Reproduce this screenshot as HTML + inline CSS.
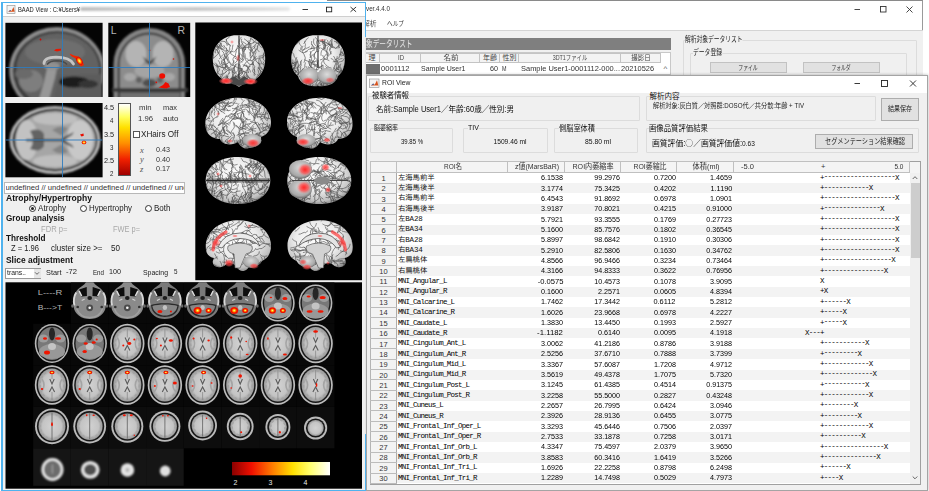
<!DOCTYPE html>
<html lang="ja"><head><meta charset="utf-8"><title>BAAD View</title>
<style>
html,body{margin:0;padding:0}
html{overflow:hidden;width:929px;height:491px}
body{width:929px;height:491px;overflow:hidden;position:relative;background:#fff;font-family:"Liberation Sans","Noto Sans CJK JP",sans-serif;color:#000}
.a{position:absolute;box-sizing:border-box}
.t{white-space:nowrap}
.m{font-family:"Liberation Mono","IPAGothic","Noto Sans CJK JP",monospace}
.gb{border:1px solid #dcdcdc;border-radius:1px}
.d{position:relative;top:-1.2px}
.btn{background:#e1e1e1;border:1px solid #adadad}
svg{position:absolute;left:0;top:0}
</style></head><body>

<div class="a" style="left:327px;top:0px;width:596px;height:76px;background:#fff;border-top:1.5px solid #8a8a8a;border-right:1px solid #9a9a9a"></div>
<div class="a" style="left:365px;top:29.8px;width:558px;height:46px;background:#f0f0f0;border-top:1px solid #d4d4d4"></div>
<div class="a t" style="top:4.90px;font-size:6.8px;line-height:8.8px;left:366px;transform:scaleX(0.920);transform-origin:0 50%;color:#333"><span>ver.4.4.0</span></div>
<div class="a t" style="top:19.55px;font-size:6.5px;line-height:8.5px;left:362.5px;transform:scaleX(1.038);transform-origin:0 50%;color:#444"><span>解析</span></div>
<div class="a t" style="top:19.55px;font-size:6.5px;line-height:8.5px;left:387px;transform:scaleX(0.872);transform-origin:0 50%;color:#333"><span>ヘルプ</span></div>
<svg width="929" height="491" viewBox="0 0 929 491">
<g stroke="#333" stroke-width="0.9" fill="none">
<path d="M854.5 9.5h5.5"/><rect x="880.5" y="6.5" width="5.5" height="5.5"/><path d="M906.5 6.5l6 6M912.5 6.5l-6 6"/>
</g></svg>
<div class="a" style="left:365px;top:38px;width:306px;height:11.5px;background:#7f7f7f"></div>
<div class="a t" style="top:37.65px;font-size:9.5px;line-height:12.3px;left:365.5px;transform:scaleX(0.699);transform-origin:0 50%;color:#e8e8e8"><span>象データリスト</span></div>
<div class="a" style="left:365px;top:52px;width:306px;height:23px;background:#fff;border:1px solid #c8c8c8"></div>
<div class="a" style="left:365px;top:52.5px;width:15px;height:10.5px;background:#f3f3f3;border:1px solid #c4c4c4;border-left:none"></div>
<div class="a t" style="top:53.45px;font-size:7px;line-height:9.1px;left:222px;width:300px;text-align:center;transform:scaleX(1.000);transform-origin:50% 50%;color:#444"><span>理</span></div>
<div class="a" style="left:380px;top:52.5px;width:41px;height:10.5px;background:#f3f3f3;border:1px solid #c4c4c4;border-left:none"></div>
<div class="a t" style="top:53.45px;font-size:7px;line-height:9.1px;left:250.5px;width:300px;text-align:center;transform:scaleX(0.857);transform-origin:50% 50%;color:#444"><span>ID</span></div>
<div class="a" style="left:421px;top:52.5px;width:59px;height:10.5px;background:#f3f3f3;border:1px solid #c4c4c4;border-left:none"></div>
<div class="a t" style="top:53.45px;font-size:7px;line-height:9.1px;left:300.5px;width:300px;text-align:center;transform:scaleX(1.071);transform-origin:50% 50%;color:#444"><span>名前</span></div>
<div class="a" style="left:480px;top:52.5px;width:20px;height:10.5px;background:#f3f3f3;border:1px solid #c4c4c4;border-left:none"></div>
<div class="a t" style="top:53.45px;font-size:7px;line-height:9.1px;left:340.0px;width:300px;text-align:center;transform:scaleX(1.000);transform-origin:50% 50%;color:#444"><span>年齢</span></div>
<div class="a" style="left:500px;top:52.5px;width:19px;height:10.5px;background:#f3f3f3;border:1px solid #c4c4c4;border-left:none"></div>
<div class="a t" style="top:53.45px;font-size:7px;line-height:9.1px;left:359.5px;width:300px;text-align:center;transform:scaleX(1.000);transform-origin:50% 50%;color:#444"><span>性別</span></div>
<div class="a" style="left:519px;top:52.5px;width:101.5px;height:10.5px;background:#f3f3f3;border:1px solid #c4c4c4;border-left:none"></div>
<div class="a t" style="top:53.45px;font-size:7px;line-height:9.1px;left:419.75px;width:300px;text-align:center;transform:scaleX(0.765);transform-origin:50% 50%;color:#444"><span>3DT1ファイル</span></div>
<div class="a" style="left:620.5px;top:52.5px;width:40.5px;height:10.5px;background:#f3f3f3;border:1px solid #c4c4c4;border-left:none"></div>
<div class="a t" style="top:53.45px;font-size:7px;line-height:9.1px;left:490.75px;width:300px;text-align:center;transform:scaleX(0.929);transform-origin:50% 50%;color:#444"><span>撮影日</span></div>
<div class="a" style="left:365px;top:63.5px;width:15px;height:10.5px;background:#6e6e6e"></div>
<div class="a t" style="top:63.90px;font-size:7.5px;line-height:9.8px;left:381px;transform:scaleX(1.014);transform-origin:0 50%;color:#333"><span>0001112</span></div>
<div class="a t" style="top:63.90px;font-size:7.5px;line-height:9.8px;left:421px;transform:scaleX(0.936);transform-origin:0 50%;color:#333"><span>Sample User1</span></div>
<div class="a t" style="top:63.90px;font-size:7.5px;line-height:9.8px;left:490px;transform:scaleX(0.959);transform-origin:0 50%;color:#333"><span>60</span></div>
<div class="a t" style="top:63.90px;font-size:7.5px;line-height:9.8px;left:502px;transform:scaleX(0.720);transform-origin:0 50%;color:#333"><span>M</span></div>
<div class="a t" style="top:63.90px;font-size:7.5px;line-height:9.8px;left:520.5px;transform:scaleX(0.996);transform-origin:0 50%;color:#333"><span>Sample User1-0001112-000...</span></div>
<div class="a t" style="top:63.90px;font-size:7.5px;line-height:9.8px;left:620.5px;transform:scaleX(0.989);transform-origin:0 50%;color:#333"><span>20210526</span></div>
<div class="a t" style="top:64.30px;font-size:8px;line-height:10.4px;left:663.5px;color:#555"><span>^</span></div>
<div class="a gb" style="left:682.5px;top:40px;width:234px;height:40px;"></div>
<div class="a t" style="top:34.60px;font-size:7.5px;line-height:9.8px;left:684.5px;transform:scaleX(0.767);transform-origin:0 50%;background:#f0f0f0;color:#222"><span>解析対象データリスト</span></div>
<div class="a gb" style="left:690px;top:52.5px;width:217px;height:30px;"></div>
<div class="a t" style="top:47.60px;font-size:7.5px;line-height:9.8px;left:693px;transform:scaleX(0.773);transform-origin:0 50%;background:#f0f0f0;color:#222"><span>データ登録</span></div>
<div class="a" style="left:709.5px;top:62px;width:77px;height:10.5px;background:#e1e1e1;border:1px solid #c2c2c2"></div>
<div class="a t" style="top:62.65px;font-size:7px;line-height:9.1px;left:597.75px;width:300px;text-align:center;transform:scaleX(0.696);transform-origin:50% 50%;color:#333"><span>ファイル</span></div>
<div class="a" style="left:802.5px;top:62px;width:77px;height:10.5px;background:#e1e1e1;border:1px solid #c2c2c2"></div>
<div class="a t" style="top:62.65px;font-size:7px;line-height:9.1px;left:690.5px;width:300px;text-align:center;transform:scaleX(0.679);transform-origin:50% 50%;color:#333"><span>フォルダ</span></div>
<div class="a" style="left:365.5px;top:74.5px;width:562.5px;height:416px;background:#f0f0f0;border:1px solid #a4a4a4;box-shadow:0 0 3px rgba(0,0,0,.3)"></div>
<div class="a" style="left:366.5px;top:75.5px;width:560.5px;height:17px;background:#fff"></div>
<svg width="929" height="491" viewBox="0 0 929 491"><g stroke="#222" stroke-width="0.9" fill="none"><path d="M854.5 83.5h5.5"/><rect x="881.5" y="80.5" width="6" height="6"/><path d="M910 80.5l6 6M916 80.5l-6 6"/></g></svg>
<div class="a t" style="top:78.30px;font-size:8px;line-height:10.4px;left:382px;transform:scaleX(0.847);transform-origin:0 50%;color:#222"><span>ROI View</span></div>
<svg width="929" height="491" viewBox="0 0 929 491"><rect x="369.5" y="79" width="9.5" height="8.5" fill="#f4f4f4" stroke="#8a8a8a" stroke-width="0.6"/><path d="M371 85.5l2.2-2 1.5 1.2 2.3-4.5 1.3 5.3z" fill="#d9541e"/><path d="M371 85.5l2.2-2 1 .9z" fill="#3b6fb5"/></svg>
<div class="a gb" style="left:367.5px;top:96px;width:272.5px;height:25px"></div>
<div class="a t" style="top:91.45px;font-size:7.8px;line-height:10.1px;left:372px;transform:scaleX(0.949);transform-origin:0 50%;background:#f0f0f0;color:#111"><span>被験者情報</span></div>
<div class="a t" style="top:103.95px;font-size:8.5px;line-height:11.1px;left:376.2px;transform:scaleX(0.888);transform-origin:0 50%;color:#111"><span>名前:Sample User1／年齢:60歳／性別:男</span></div>
<div class="a gb" style="left:645.5px;top:96px;width:230.5px;height:25px"></div>
<div class="a t" style="top:91.60px;font-size:7.5px;line-height:9.8px;left:649.5px;transform:scaleX(1.000);transform-origin:0 50%;background:#f0f0f0;color:#111"><span>解析内容</span></div>
<div class="a t" style="top:101.90px;font-size:6.3px;line-height:8.2px;left:653px;transform:scaleX(0.980);transform-origin:0 50%;color:#222"><span>解析対象:灰白質／対照群:DOSO代／共分散:年齢 + TIV</span></div>
<div class="a" style="left:881px;top:98px;width:38px;height:22.5px;background:#e1e1e1;border:1px solid #adadad"></div>
<div class="a t" style="top:105.25px;font-size:6.5px;line-height:8.5px;left:749.5px;width:300px;text-align:center;transform:scaleX(0.923);transform-origin:50% 50%;color:#222"><span>結果保存</span></div>
<div class="a gb" style="left:369.5px;top:128px;width:83.5px;height:25px"></div>
<div class="a t" style="top:124.25px;font-size:6.5px;line-height:8.5px;left:373.7px;transform:scaleX(0.923);transform-origin:0 50%;background:#f0f0f0;color:#111"><span>脳萎縮率</span></div>
<div class="a t" style="top:138.40px;font-size:6.8px;line-height:8.8px;left:262.2px;width:300px;text-align:center;transform:scaleX(0.882);transform-origin:50% 50%;color:#111"><span>39.85 %</span></div>
<div class="a gb" style="left:463px;top:128px;width:84.5px;height:25px"></div>
<div class="a t" style="top:123.30px;font-size:8px;line-height:10.4px;left:468.2px;transform:scaleX(0.883);transform-origin:0 50%;background:#f0f0f0;color:#111"><span>TIV</span></div>
<div class="a t" style="top:138.40px;font-size:6.8px;line-height:8.8px;left:359.7px;width:300px;text-align:center;transform:scaleX(0.981);transform-origin:50% 50%;color:#111"><span>1509.46 ml</span></div>
<div class="a gb" style="left:554px;top:128px;width:83.5px;height:25px"></div>
<div class="a t" style="top:122.95px;font-size:8.5px;line-height:11.1px;left:558.7px;transform:scaleX(0.847);transform-origin:0 50%;background:#f0f0f0;color:#111"><span>側脳室体積</span></div>
<div class="a t" style="top:138.40px;font-size:6.8px;line-height:8.8px;left:447.5px;width:300px;text-align:center;transform:scaleX(0.997);transform-origin:50% 50%;color:#111"><span>85.80 ml</span></div>
<div class="a gb" style="left:645.5px;top:128px;width:273.5px;height:25px"></div>
<div class="a t" style="top:122.95px;font-size:8.5px;line-height:11.1px;left:648.7px;transform:scaleX(0.867);transform-origin:0 50%;background:#f0f0f0;color:#111"><span>画像品質評価結果</span></div>
<div class="a t" style="top:136.95px;font-size:8.5px;line-height:11.1px;left:652px;transform:scaleX(0.917);transform-origin:0 50%;color:#111"><span>画質評価:<span style="font-family:'Noto Sans CJK JP',sans-serif">○</span>／画質評価値:<span style="font-size:7.2px">0.63</span></span></div>
<div class="a" style="left:815px;top:134px;width:97.5px;height:15px;background:#e1e1e1;border:1px solid #adadad"></div>
<div class="a t" style="top:136.80px;font-size:7.5px;line-height:9.8px;left:714.5px;width:300px;text-align:center;transform:scaleX(0.822);transform-origin:50% 50%;color:#222"><span>セグメンテーション結果確認</span></div>
<div class="a" style="left:369.5px;top:161px;width:551px;height:323.5px;background:#fff;border:1px solid #a0a0a0"></div>
<div class="a" style="left:369.5px;top:161px;width:27.5px;height:11.800000000000011px;background:#f4f4f4;border:1px solid #c0c0c0"></div>
<div class="a" style="left:397px;top:161px;width:111px;height:11.800000000000011px;background:#f4f4f4;border:1px solid #c0c0c0;border-left:none"></div>
<div class="a t" style="top:162.10px;font-size:7.5px;line-height:9.8px;left:303px;width:300px;text-align:center;transform:scaleX(0.864);transform-origin:50% 50%;color:#333"><span>ROI名</span></div>
<div class="a" style="left:508px;top:161px;width:56.5px;height:11.800000000000011px;background:#f4f4f4;border:1px solid #c0c0c0;border-left:none"></div>
<div class="a t" style="top:162.10px;font-size:7.5px;line-height:9.8px;left:387px;width:300px;text-align:center;transform:scaleX(0.926);transform-origin:50% 50%;color:#333"><span>z値(MarsBaR)</span></div>
<div class="a" style="left:564.5px;top:161px;width:56.5px;height:11.800000000000011px;background:#f4f4f4;border:1px solid #c0c0c0;border-left:none"></div>
<div class="a t" style="top:162.10px;font-size:7.5px;line-height:9.8px;left:443px;width:300px;text-align:center;transform:scaleX(0.946);transform-origin:50% 50%;color:#333"><span>ROI内萎縮率</span></div>
<div class="a" style="left:621px;top:161px;width:56px;height:11.800000000000011px;background:#f4f4f4;border:1px solid #c0c0c0;border-left:none"></div>
<div class="a t" style="top:162.10px;font-size:7.5px;line-height:9.8px;left:499.6px;width:300px;text-align:center;transform:scaleX(0.921);transform-origin:50% 50%;color:#333"><span>ROI萎縮比</span></div>
<div class="a" style="left:677px;top:161px;width:57px;height:11.800000000000011px;background:#f4f4f4;border:1px solid #c0c0c0;border-left:none"></div>
<div class="a t" style="top:162.10px;font-size:7.5px;line-height:9.8px;left:556px;width:300px;text-align:center;transform:scaleX(0.967);transform-origin:50% 50%;color:#333"><span>体積(ml)</span></div>
<div class="a" style="left:734px;top:161px;width:175.5px;height:11.800000000000011px;background:#f4f4f4;border:1px solid #c0c0c0;border-left:none"></div>
<div class="a t" style="top:162.10px;font-size:7.5px;line-height:9.8px;left:740.7px;transform:scaleX(1.005);transform-origin:0 50%;color:#333"><span>-5.0</span></div>
<div class="a t" style="top:162.10px;font-size:7.5px;line-height:9.8px;left:821px;color:#333"><span>+</span></div>
<div class="a t" style="top:162.10px;font-size:7.5px;line-height:9.8px;right:25.799999999999955px;transform:scaleX(0.862);transform-origin:100% 50%;color:#333"><span>5.0</span></div>
<div class="a" style="left:369.5px;top:172.8px;width:27.5px;height:310.59px;background:#f3f3f3;border-left:1px solid #b4b4b4;border-right:1px solid #ababab"></div>
<div class="a" style="left:370px;top:182.65300000000002px;width:27px;height:1px;background:#bcbcbc"></div>
<div class="a t" style="top:173.88px;font-size:7.5px;line-height:9.8px;left:233.5px;width:300px;text-align:center;color:#333"><span>1</span></div>
<div class="a t m" style="top:173.58px;font-size:7.5px;line-height:9.8px;left:398px;color:#111;letter-spacing:-0.2px"><span>左海馬前半</span></div>
<div class="a t" style="top:173.18px;font-size:7.2px;line-height:9.4px;right:366px;transform:scaleX(1.001);transform-origin:100% 50%;color:#000"><span>6.1538</span></div>
<div class="a t" style="top:173.18px;font-size:7.2px;line-height:9.4px;right:309.5px;transform:scaleX(0.991);transform-origin:100% 50%;color:#000"><span>99.2976</span></div>
<div class="a t" style="top:173.18px;font-size:7.2px;line-height:9.4px;right:253.29999999999995px;transform:scaleX(1.001);transform-origin:100% 50%;color:#000"><span>0.7200</span></div>
<div class="a t" style="top:173.18px;font-size:7.2px;line-height:9.4px;right:197px;transform:scaleX(1.001);transform-origin:100% 50%;color:#000"><span>1.4659</span></div>
<div class="a t m" style="top:173.58px;font-size:7.5px;line-height:9.8px;left:820px;color:#000;letter-spacing:-0.75px;"><span>+<span class="d">-------------------</span>X</span></div>
<div class="a" style="left:397px;top:183.15300000000002px;width:512.5px;height:10.353px;background:#f3f3f3"></div>
<div class="a" style="left:370px;top:193.00600000000003px;width:27px;height:1px;background:#bcbcbc"></div>
<div class="a t" style="top:184.23px;font-size:7.5px;line-height:9.8px;left:233.5px;width:300px;text-align:center;color:#333"><span>2</span></div>
<div class="a t m" style="top:183.93px;font-size:7.5px;line-height:9.8px;left:398px;color:#111;letter-spacing:-0.2px"><span>左海馬後半</span></div>
<div class="a t" style="top:183.53px;font-size:7.2px;line-height:9.4px;right:366px;transform:scaleX(1.001);transform-origin:100% 50%;color:#000"><span>3.1774</span></div>
<div class="a t" style="top:183.53px;font-size:7.2px;line-height:9.4px;right:309.5px;transform:scaleX(0.991);transform-origin:100% 50%;color:#000"><span>75.3425</span></div>
<div class="a t" style="top:183.53px;font-size:7.2px;line-height:9.4px;right:253.29999999999995px;transform:scaleX(1.001);transform-origin:100% 50%;color:#000"><span>0.4202</span></div>
<div class="a t" style="top:183.53px;font-size:7.2px;line-height:9.4px;right:197px;transform:scaleX(1.025);transform-origin:100% 50%;color:#000"><span>1.1190</span></div>
<div class="a t m" style="top:183.93px;font-size:7.5px;line-height:9.8px;left:820px;color:#000;letter-spacing:-0.75px;"><span>+<span class="d">------------</span>X</span></div>
<div class="a" style="left:370px;top:203.359px;width:27px;height:1px;background:#bcbcbc"></div>
<div class="a t" style="top:194.58px;font-size:7.5px;line-height:9.8px;left:233.5px;width:300px;text-align:center;color:#333"><span>3</span></div>
<div class="a t m" style="top:194.28px;font-size:7.5px;line-height:9.8px;left:398px;color:#111;letter-spacing:-0.2px"><span>右海馬前半</span></div>
<div class="a t" style="top:193.88px;font-size:7.2px;line-height:9.4px;right:366px;transform:scaleX(1.001);transform-origin:100% 50%;color:#000"><span>6.4543</span></div>
<div class="a t" style="top:193.88px;font-size:7.2px;line-height:9.4px;right:309.5px;transform:scaleX(0.991);transform-origin:100% 50%;color:#000"><span>91.8692</span></div>
<div class="a t" style="top:193.88px;font-size:7.2px;line-height:9.4px;right:253.29999999999995px;transform:scaleX(1.001);transform-origin:100% 50%;color:#000"><span>0.6978</span></div>
<div class="a t" style="top:193.88px;font-size:7.2px;line-height:9.4px;right:197px;transform:scaleX(1.001);transform-origin:100% 50%;color:#000"><span>1.0901</span></div>
<div class="a t m" style="top:194.28px;font-size:7.5px;line-height:9.8px;left:820px;color:#000;letter-spacing:-0.75px;"><span>+<span class="d">-------------------</span>X</span></div>
<div class="a" style="left:397px;top:203.859px;width:512.5px;height:10.353px;background:#f3f3f3"></div>
<div class="a" style="left:370px;top:213.71200000000002px;width:27px;height:1px;background:#bcbcbc"></div>
<div class="a t" style="top:204.94px;font-size:7.5px;line-height:9.8px;left:233.5px;width:300px;text-align:center;color:#333"><span>4</span></div>
<div class="a t m" style="top:204.64px;font-size:7.5px;line-height:9.8px;left:398px;color:#111;letter-spacing:-0.2px"><span>右海馬後半</span></div>
<div class="a t" style="top:204.24px;font-size:7.2px;line-height:9.4px;right:366px;transform:scaleX(1.001);transform-origin:100% 50%;color:#000"><span>3.9187</span></div>
<div class="a t" style="top:204.24px;font-size:7.2px;line-height:9.4px;right:309.5px;transform:scaleX(0.991);transform-origin:100% 50%;color:#000"><span>70.8021</span></div>
<div class="a t" style="top:204.24px;font-size:7.2px;line-height:9.4px;right:253.29999999999995px;transform:scaleX(1.001);transform-origin:100% 50%;color:#000"><span>0.4215</span></div>
<div class="a t" style="top:204.24px;font-size:7.2px;line-height:9.4px;right:197px;transform:scaleX(0.991);transform-origin:100% 50%;color:#000"><span>0.91000</span></div>
<div class="a t m" style="top:204.64px;font-size:7.5px;line-height:9.8px;left:820px;color:#000;letter-spacing:-0.75px;"><span>+<span class="d">---------------</span>X</span></div>
<div class="a" style="left:370px;top:224.06500000000003px;width:27px;height:1px;background:#bcbcbc"></div>
<div class="a t" style="top:215.29px;font-size:7.5px;line-height:9.8px;left:233.5px;width:300px;text-align:center;color:#333"><span>5</span></div>
<div class="a t m" style="top:214.99px;font-size:7.5px;line-height:9.8px;left:398px;color:#111;letter-spacing:-0.2px"><span>左BA28</span></div>
<div class="a t" style="top:214.59px;font-size:7.2px;line-height:9.4px;right:366px;transform:scaleX(1.001);transform-origin:100% 50%;color:#000"><span>5.7921</span></div>
<div class="a t" style="top:214.59px;font-size:7.2px;line-height:9.4px;right:309.5px;transform:scaleX(0.991);transform-origin:100% 50%;color:#000"><span>93.3555</span></div>
<div class="a t" style="top:214.59px;font-size:7.2px;line-height:9.4px;right:253.29999999999995px;transform:scaleX(1.001);transform-origin:100% 50%;color:#000"><span>0.1769</span></div>
<div class="a t" style="top:214.59px;font-size:7.2px;line-height:9.4px;right:197px;transform:scaleX(0.991);transform-origin:100% 50%;color:#000"><span>0.27723</span></div>
<div class="a t m" style="top:214.99px;font-size:7.5px;line-height:9.8px;left:820px;color:#000;letter-spacing:-0.75px;"><span>+<span class="d">-------------------</span>X</span></div>
<div class="a" style="left:397px;top:224.565px;width:512.5px;height:10.353px;background:#f3f3f3"></div>
<div class="a" style="left:370px;top:234.418px;width:27px;height:1px;background:#bcbcbc"></div>
<div class="a t" style="top:225.64px;font-size:7.5px;line-height:9.8px;left:233.5px;width:300px;text-align:center;color:#333"><span>6</span></div>
<div class="a t m" style="top:225.34px;font-size:7.5px;line-height:9.8px;left:398px;color:#111;letter-spacing:-0.2px"><span>左BA34</span></div>
<div class="a t" style="top:224.94px;font-size:7.2px;line-height:9.4px;right:366px;transform:scaleX(1.001);transform-origin:100% 50%;color:#000"><span>5.1600</span></div>
<div class="a t" style="top:224.94px;font-size:7.2px;line-height:9.4px;right:309.5px;transform:scaleX(0.991);transform-origin:100% 50%;color:#000"><span>85.7576</span></div>
<div class="a t" style="top:224.94px;font-size:7.2px;line-height:9.4px;right:253.29999999999995px;transform:scaleX(1.001);transform-origin:100% 50%;color:#000"><span>0.1802</span></div>
<div class="a t" style="top:224.94px;font-size:7.2px;line-height:9.4px;right:197px;transform:scaleX(0.991);transform-origin:100% 50%;color:#000"><span>0.36545</span></div>
<div class="a t m" style="top:225.34px;font-size:7.5px;line-height:9.8px;left:820px;color:#000;letter-spacing:-0.75px;"><span>+<span class="d">-------------------</span>X</span></div>
<div class="a" style="left:370px;top:244.77100000000002px;width:27px;height:1px;background:#bcbcbc"></div>
<div class="a t" style="top:235.99px;font-size:7.5px;line-height:9.8px;left:233.5px;width:300px;text-align:center;color:#333"><span>7</span></div>
<div class="a t m" style="top:235.69px;font-size:7.5px;line-height:9.8px;left:398px;color:#111;letter-spacing:-0.2px"><span>右BA28</span></div>
<div class="a t" style="top:235.29px;font-size:7.2px;line-height:9.4px;right:366px;transform:scaleX(1.001);transform-origin:100% 50%;color:#000"><span>5.8997</span></div>
<div class="a t" style="top:235.29px;font-size:7.2px;line-height:9.4px;right:309.5px;transform:scaleX(0.991);transform-origin:100% 50%;color:#000"><span>98.6842</span></div>
<div class="a t" style="top:235.29px;font-size:7.2px;line-height:9.4px;right:253.29999999999995px;transform:scaleX(1.001);transform-origin:100% 50%;color:#000"><span>0.1910</span></div>
<div class="a t" style="top:235.29px;font-size:7.2px;line-height:9.4px;right:197px;transform:scaleX(0.991);transform-origin:100% 50%;color:#000"><span>0.30306</span></div>
<div class="a t m" style="top:235.69px;font-size:7.5px;line-height:9.8px;left:820px;color:#000;letter-spacing:-0.75px;"><span>+<span class="d">-------------------</span>X</span></div>
<div class="a" style="left:397px;top:245.27100000000002px;width:512.5px;height:10.353px;background:#f3f3f3"></div>
<div class="a" style="left:370px;top:255.12400000000002px;width:27px;height:1px;background:#bcbcbc"></div>
<div class="a t" style="top:246.35px;font-size:7.5px;line-height:9.8px;left:233.5px;width:300px;text-align:center;color:#333"><span>8</span></div>
<div class="a t m" style="top:246.05px;font-size:7.5px;line-height:9.8px;left:398px;color:#111;letter-spacing:-0.2px"><span>右BA34</span></div>
<div class="a t" style="top:245.65px;font-size:7.2px;line-height:9.4px;right:366px;transform:scaleX(1.001);transform-origin:100% 50%;color:#000"><span>5.2910</span></div>
<div class="a t" style="top:245.65px;font-size:7.2px;line-height:9.4px;right:309.5px;transform:scaleX(0.991);transform-origin:100% 50%;color:#000"><span>82.5806</span></div>
<div class="a t" style="top:245.65px;font-size:7.2px;line-height:9.4px;right:253.29999999999995px;transform:scaleX(1.001);transform-origin:100% 50%;color:#000"><span>0.1630</span></div>
<div class="a t" style="top:245.65px;font-size:7.2px;line-height:9.4px;right:197px;transform:scaleX(0.991);transform-origin:100% 50%;color:#000"><span>0.34762</span></div>
<div class="a t m" style="top:246.05px;font-size:7.5px;line-height:9.8px;left:820px;color:#000;letter-spacing:-0.75px;"><span>+<span class="d">-------------------</span>X</span></div>
<div class="a" style="left:370px;top:265.47700000000003px;width:27px;height:1px;background:#bcbcbc"></div>
<div class="a t" style="top:256.70px;font-size:7.5px;line-height:9.8px;left:233.5px;width:300px;text-align:center;color:#333"><span>9</span></div>
<div class="a t m" style="top:256.40px;font-size:7.5px;line-height:9.8px;left:398px;color:#111;letter-spacing:-0.2px"><span>左扁桃体</span></div>
<div class="a t" style="top:256.00px;font-size:7.2px;line-height:9.4px;right:366px;transform:scaleX(1.001);transform-origin:100% 50%;color:#000"><span>4.8566</span></div>
<div class="a t" style="top:256.00px;font-size:7.2px;line-height:9.4px;right:309.5px;transform:scaleX(0.991);transform-origin:100% 50%;color:#000"><span>96.9466</span></div>
<div class="a t" style="top:256.00px;font-size:7.2px;line-height:9.4px;right:253.29999999999995px;transform:scaleX(1.001);transform-origin:100% 50%;color:#000"><span>0.3234</span></div>
<div class="a t" style="top:256.00px;font-size:7.2px;line-height:9.4px;right:197px;transform:scaleX(0.991);transform-origin:100% 50%;color:#000"><span>0.73464</span></div>
<div class="a t m" style="top:256.40px;font-size:7.5px;line-height:9.8px;left:820px;color:#000;letter-spacing:-0.75px;"><span>+<span class="d">------------------</span>X</span></div>
<div class="a" style="left:397px;top:265.977px;width:512.5px;height:10.353px;background:#f3f3f3"></div>
<div class="a" style="left:370px;top:275.83px;width:27px;height:1px;background:#bcbcbc"></div>
<div class="a t" style="top:267.05px;font-size:7.5px;line-height:9.8px;left:233.5px;width:300px;text-align:center;color:#333"><span>10</span></div>
<div class="a t m" style="top:266.75px;font-size:7.5px;line-height:9.8px;left:398px;color:#111;letter-spacing:-0.2px"><span>右扁桃体</span></div>
<div class="a t" style="top:266.35px;font-size:7.2px;line-height:9.4px;right:366px;transform:scaleX(1.001);transform-origin:100% 50%;color:#000"><span>4.3166</span></div>
<div class="a t" style="top:266.35px;font-size:7.2px;line-height:9.4px;right:309.5px;transform:scaleX(0.991);transform-origin:100% 50%;color:#000"><span>94.8333</span></div>
<div class="a t" style="top:266.35px;font-size:7.2px;line-height:9.4px;right:253.29999999999995px;transform:scaleX(1.001);transform-origin:100% 50%;color:#000"><span>0.3622</span></div>
<div class="a t" style="top:266.35px;font-size:7.2px;line-height:9.4px;right:197px;transform:scaleX(0.991);transform-origin:100% 50%;color:#000"><span>0.76956</span></div>
<div class="a t m" style="top:266.75px;font-size:7.5px;line-height:9.8px;left:820px;color:#000;letter-spacing:-0.75px;"><span>+<span class="d">----------------</span>X</span></div>
<div class="a" style="left:370px;top:286.18300000000005px;width:27px;height:1px;background:#bcbcbc"></div>
<div class="a t" style="top:277.41px;font-size:7.5px;line-height:9.8px;left:233.5px;width:300px;text-align:center;color:#333"><span>11</span></div>
<div class="a t m" style="top:277.11px;font-size:7.5px;line-height:9.8px;left:398px;color:#000;letter-spacing:-0.75px;"><span>MNI_Angular_L</span></div>
<div class="a t" style="top:276.71px;font-size:7.2px;line-height:9.4px;right:366px;transform:scaleX(1.056);transform-origin:100% 50%;color:#000"><span>-0.0575</span></div>
<div class="a t" style="top:276.71px;font-size:7.2px;line-height:9.4px;right:309.5px;transform:scaleX(0.991);transform-origin:100% 50%;color:#000"><span>10.4573</span></div>
<div class="a t" style="top:276.71px;font-size:7.2px;line-height:9.4px;right:253.29999999999995px;transform:scaleX(1.001);transform-origin:100% 50%;color:#000"><span>0.1078</span></div>
<div class="a t" style="top:276.71px;font-size:7.2px;line-height:9.4px;right:197px;transform:scaleX(1.001);transform-origin:100% 50%;color:#000"><span>3.9095</span></div>
<div class="a t m" style="top:277.11px;font-size:7.5px;line-height:9.8px;left:820px;color:#000;letter-spacing:-0.75px;"><span>X</span></div>
<div class="a" style="left:397px;top:286.683px;width:512.5px;height:10.353px;background:#f3f3f3"></div>
<div class="a" style="left:370px;top:296.536px;width:27px;height:1px;background:#bcbcbc"></div>
<div class="a t" style="top:287.76px;font-size:7.5px;line-height:9.8px;left:233.5px;width:300px;text-align:center;color:#333"><span>12</span></div>
<div class="a t m" style="top:287.46px;font-size:7.5px;line-height:9.8px;left:398px;color:#000;letter-spacing:-0.75px;"><span>MNI_Angular_R</span></div>
<div class="a t" style="top:287.06px;font-size:7.2px;line-height:9.4px;right:366px;transform:scaleX(1.001);transform-origin:100% 50%;color:#000"><span>0.1600</span></div>
<div class="a t" style="top:287.06px;font-size:7.2px;line-height:9.4px;right:309.5px;transform:scaleX(1.001);transform-origin:100% 50%;color:#000"><span>2.2571</span></div>
<div class="a t" style="top:287.06px;font-size:7.2px;line-height:9.4px;right:253.29999999999995px;transform:scaleX(1.001);transform-origin:100% 50%;color:#000"><span>0.0605</span></div>
<div class="a t" style="top:287.06px;font-size:7.2px;line-height:9.4px;right:197px;transform:scaleX(1.001);transform-origin:100% 50%;color:#000"><span>4.8394</span></div>
<div class="a t m" style="top:287.46px;font-size:7.5px;line-height:9.8px;left:820px;color:#000;letter-spacing:-0.75px;"><span>+<span class="d"></span>X</span></div>
<div class="a" style="left:370px;top:306.889px;width:27px;height:1px;background:#bcbcbc"></div>
<div class="a t" style="top:298.11px;font-size:7.5px;line-height:9.8px;left:233.5px;width:300px;text-align:center;color:#333"><span>13</span></div>
<div class="a t m" style="top:297.81px;font-size:7.5px;line-height:9.8px;left:398px;color:#000;letter-spacing:-0.75px;"><span>MNI_Calcarine_L</span></div>
<div class="a t" style="top:297.41px;font-size:7.2px;line-height:9.4px;right:366px;transform:scaleX(1.001);transform-origin:100% 50%;color:#000"><span>1.7462</span></div>
<div class="a t" style="top:297.41px;font-size:7.2px;line-height:9.4px;right:309.5px;transform:scaleX(0.991);transform-origin:100% 50%;color:#000"><span>17.3442</span></div>
<div class="a t" style="top:297.41px;font-size:7.2px;line-height:9.4px;right:253.29999999999995px;transform:scaleX(1.025);transform-origin:100% 50%;color:#000"><span>0.6112</span></div>
<div class="a t" style="top:297.41px;font-size:7.2px;line-height:9.4px;right:197px;transform:scaleX(1.001);transform-origin:100% 50%;color:#000"><span>5.2812</span></div>
<div class="a t m" style="top:297.81px;font-size:7.5px;line-height:9.8px;left:820px;color:#000;letter-spacing:-0.75px;"><span>+<span class="d">------</span>X</span></div>
<div class="a" style="left:397px;top:307.389px;width:512.5px;height:10.353px;background:#f3f3f3"></div>
<div class="a" style="left:370px;top:317.242px;width:27px;height:1px;background:#bcbcbc"></div>
<div class="a t" style="top:308.47px;font-size:7.5px;line-height:9.8px;left:233.5px;width:300px;text-align:center;color:#333"><span>14</span></div>
<div class="a t m" style="top:308.17px;font-size:7.5px;line-height:9.8px;left:398px;color:#000;letter-spacing:-0.75px;"><span>MNI_Calcarine_R</span></div>
<div class="a t" style="top:307.77px;font-size:7.2px;line-height:9.4px;right:366px;transform:scaleX(1.001);transform-origin:100% 50%;color:#000"><span>1.6026</span></div>
<div class="a t" style="top:307.77px;font-size:7.2px;line-height:9.4px;right:309.5px;transform:scaleX(0.991);transform-origin:100% 50%;color:#000"><span>23.9668</span></div>
<div class="a t" style="top:307.77px;font-size:7.2px;line-height:9.4px;right:253.29999999999995px;transform:scaleX(1.001);transform-origin:100% 50%;color:#000"><span>0.6978</span></div>
<div class="a t" style="top:307.77px;font-size:7.2px;line-height:9.4px;right:197px;transform:scaleX(1.001);transform-origin:100% 50%;color:#000"><span>4.2227</span></div>
<div class="a t m" style="top:308.17px;font-size:7.5px;line-height:9.8px;left:820px;color:#000;letter-spacing:-0.75px;"><span>+<span class="d">-----</span>X</span></div>
<div class="a" style="left:370px;top:327.595px;width:27px;height:1px;background:#bcbcbc"></div>
<div class="a t" style="top:318.82px;font-size:7.5px;line-height:9.8px;left:233.5px;width:300px;text-align:center;color:#333"><span>15</span></div>
<div class="a t m" style="top:318.52px;font-size:7.5px;line-height:9.8px;left:398px;color:#000;letter-spacing:-0.75px;"><span>MNI_Caudate_L</span></div>
<div class="a t" style="top:318.12px;font-size:7.2px;line-height:9.4px;right:366px;transform:scaleX(1.001);transform-origin:100% 50%;color:#000"><span>1.3830</span></div>
<div class="a t" style="top:318.12px;font-size:7.2px;line-height:9.4px;right:309.5px;transform:scaleX(0.991);transform-origin:100% 50%;color:#000"><span>13.4450</span></div>
<div class="a t" style="top:318.12px;font-size:7.2px;line-height:9.4px;right:253.29999999999995px;transform:scaleX(1.001);transform-origin:100% 50%;color:#000"><span>0.1993</span></div>
<div class="a t" style="top:318.12px;font-size:7.2px;line-height:9.4px;right:197px;transform:scaleX(1.001);transform-origin:100% 50%;color:#000"><span>2.5927</span></div>
<div class="a t m" style="top:318.52px;font-size:7.5px;line-height:9.8px;left:820px;color:#000;letter-spacing:-0.75px;"><span>+<span class="d">-----</span>X</span></div>
<div class="a" style="left:397px;top:328.095px;width:512.5px;height:10.353px;background:#f3f3f3"></div>
<div class="a" style="left:370px;top:337.94800000000004px;width:27px;height:1px;background:#bcbcbc"></div>
<div class="a t" style="top:329.17px;font-size:7.5px;line-height:9.8px;left:233.5px;width:300px;text-align:center;color:#333"><span>16</span></div>
<div class="a t m" style="top:328.87px;font-size:7.5px;line-height:9.8px;left:398px;color:#000;letter-spacing:-0.75px;"><span>MNI_Caudate_R</span></div>
<div class="a t" style="top:328.47px;font-size:7.2px;line-height:9.4px;right:366px;transform:scaleX(1.080);transform-origin:100% 50%;color:#000"><span>-1.1182</span></div>
<div class="a t" style="top:328.47px;font-size:7.2px;line-height:9.4px;right:309.5px;transform:scaleX(1.001);transform-origin:100% 50%;color:#000"><span>0.6140</span></div>
<div class="a t" style="top:328.47px;font-size:7.2px;line-height:9.4px;right:253.29999999999995px;transform:scaleX(1.001);transform-origin:100% 50%;color:#000"><span>0.0095</span></div>
<div class="a t" style="top:328.47px;font-size:7.2px;line-height:9.4px;right:197px;transform:scaleX(1.001);transform-origin:100% 50%;color:#000"><span>4.1918</span></div>
<div class="a t m" style="top:328.87px;font-size:7.5px;line-height:9.8px;left:805.0px;color:#000;letter-spacing:-0.75px;"><span>X<span class="d">---</span>+</span></div>
<div class="a" style="left:370px;top:348.301px;width:27px;height:1px;background:#bcbcbc"></div>
<div class="a t" style="top:339.52px;font-size:7.5px;line-height:9.8px;left:233.5px;width:300px;text-align:center;color:#333"><span>17</span></div>
<div class="a t m" style="top:339.22px;font-size:7.5px;line-height:9.8px;left:398px;color:#000;letter-spacing:-0.75px;"><span>MNI_Cingulum_Ant_L</span></div>
<div class="a t" style="top:338.82px;font-size:7.2px;line-height:9.4px;right:366px;transform:scaleX(1.001);transform-origin:100% 50%;color:#000"><span>3.0062</span></div>
<div class="a t" style="top:338.82px;font-size:7.2px;line-height:9.4px;right:309.5px;transform:scaleX(0.991);transform-origin:100% 50%;color:#000"><span>41.2186</span></div>
<div class="a t" style="top:338.82px;font-size:7.2px;line-height:9.4px;right:253.29999999999995px;transform:scaleX(1.001);transform-origin:100% 50%;color:#000"><span>0.8786</span></div>
<div class="a t" style="top:338.82px;font-size:7.2px;line-height:9.4px;right:197px;transform:scaleX(1.001);transform-origin:100% 50%;color:#000"><span>3.9188</span></div>
<div class="a t m" style="top:339.22px;font-size:7.5px;line-height:9.8px;left:820px;color:#000;letter-spacing:-0.75px;"><span>+<span class="d">-----------</span>X</span></div>
<div class="a" style="left:397px;top:348.80100000000004px;width:512.5px;height:10.353px;background:#f3f3f3"></div>
<div class="a" style="left:370px;top:358.65400000000005px;width:27px;height:1px;background:#bcbcbc"></div>
<div class="a t" style="top:349.88px;font-size:7.5px;line-height:9.8px;left:233.5px;width:300px;text-align:center;color:#333"><span>18</span></div>
<div class="a t m" style="top:349.58px;font-size:7.5px;line-height:9.8px;left:398px;color:#000;letter-spacing:-0.75px;"><span>MNI_Cingulum_Ant_R</span></div>
<div class="a t" style="top:349.18px;font-size:7.2px;line-height:9.4px;right:366px;transform:scaleX(1.001);transform-origin:100% 50%;color:#000"><span>2.5256</span></div>
<div class="a t" style="top:349.18px;font-size:7.2px;line-height:9.4px;right:309.5px;transform:scaleX(0.991);transform-origin:100% 50%;color:#000"><span>37.6710</span></div>
<div class="a t" style="top:349.18px;font-size:7.2px;line-height:9.4px;right:253.29999999999995px;transform:scaleX(1.001);transform-origin:100% 50%;color:#000"><span>0.7888</span></div>
<div class="a t" style="top:349.18px;font-size:7.2px;line-height:9.4px;right:197px;transform:scaleX(1.001);transform-origin:100% 50%;color:#000"><span>3.7399</span></div>
<div class="a t m" style="top:349.58px;font-size:7.5px;line-height:9.8px;left:820px;color:#000;letter-spacing:-0.75px;"><span>+<span class="d">---------</span>X</span></div>
<div class="a" style="left:370px;top:369.007px;width:27px;height:1px;background:#bcbcbc"></div>
<div class="a t" style="top:360.23px;font-size:7.5px;line-height:9.8px;left:233.5px;width:300px;text-align:center;color:#333"><span>19</span></div>
<div class="a t m" style="top:359.93px;font-size:7.5px;line-height:9.8px;left:398px;color:#000;letter-spacing:-0.75px;"><span>MNI_Cingulum_Mid_L</span></div>
<div class="a t" style="top:359.53px;font-size:7.2px;line-height:9.4px;right:366px;transform:scaleX(1.001);transform-origin:100% 50%;color:#000"><span>3.3367</span></div>
<div class="a t" style="top:359.53px;font-size:7.2px;line-height:9.4px;right:309.5px;transform:scaleX(0.991);transform-origin:100% 50%;color:#000"><span>57.6087</span></div>
<div class="a t" style="top:359.53px;font-size:7.2px;line-height:9.4px;right:253.29999999999995px;transform:scaleX(1.001);transform-origin:100% 50%;color:#000"><span>1.7208</span></div>
<div class="a t" style="top:359.53px;font-size:7.2px;line-height:9.4px;right:197px;transform:scaleX(1.001);transform-origin:100% 50%;color:#000"><span>4.9712</span></div>
<div class="a t m" style="top:359.93px;font-size:7.5px;line-height:9.8px;left:820px;color:#000;letter-spacing:-0.75px;"><span>+<span class="d">------------</span>X</span></div>
<div class="a" style="left:397px;top:369.507px;width:512.5px;height:10.353px;background:#f3f3f3"></div>
<div class="a" style="left:370px;top:379.36px;width:27px;height:1px;background:#bcbcbc"></div>
<div class="a t" style="top:370.58px;font-size:7.5px;line-height:9.8px;left:233.5px;width:300px;text-align:center;color:#333"><span>20</span></div>
<div class="a t m" style="top:370.28px;font-size:7.5px;line-height:9.8px;left:398px;color:#000;letter-spacing:-0.75px;"><span>MNI_Cingulum_Mid_R</span></div>
<div class="a t" style="top:369.88px;font-size:7.2px;line-height:9.4px;right:366px;transform:scaleX(1.001);transform-origin:100% 50%;color:#000"><span>3.5619</span></div>
<div class="a t" style="top:369.88px;font-size:7.2px;line-height:9.4px;right:309.5px;transform:scaleX(0.991);transform-origin:100% 50%;color:#000"><span>49.4378</span></div>
<div class="a t" style="top:369.88px;font-size:7.2px;line-height:9.4px;right:253.29999999999995px;transform:scaleX(1.001);transform-origin:100% 50%;color:#000"><span>1.7075</span></div>
<div class="a t" style="top:369.88px;font-size:7.2px;line-height:9.4px;right:197px;transform:scaleX(1.001);transform-origin:100% 50%;color:#000"><span>5.7320</span></div>
<div class="a t m" style="top:370.28px;font-size:7.5px;line-height:9.8px;left:820px;color:#000;letter-spacing:-0.75px;"><span>+<span class="d">-------------</span>X</span></div>
<div class="a" style="left:370px;top:389.713px;width:27px;height:1px;background:#bcbcbc"></div>
<div class="a t" style="top:380.94px;font-size:7.5px;line-height:9.8px;left:233.5px;width:300px;text-align:center;color:#333"><span>21</span></div>
<div class="a t m" style="top:380.64px;font-size:7.5px;line-height:9.8px;left:398px;color:#000;letter-spacing:-0.75px;"><span>MNI_Cingulum_Post_L</span></div>
<div class="a t" style="top:380.24px;font-size:7.2px;line-height:9.4px;right:366px;transform:scaleX(1.001);transform-origin:100% 50%;color:#000"><span>3.1245</span></div>
<div class="a t" style="top:380.24px;font-size:7.2px;line-height:9.4px;right:309.5px;transform:scaleX(0.991);transform-origin:100% 50%;color:#000"><span>61.4385</span></div>
<div class="a t" style="top:380.24px;font-size:7.2px;line-height:9.4px;right:253.29999999999995px;transform:scaleX(1.001);transform-origin:100% 50%;color:#000"><span>0.4514</span></div>
<div class="a t" style="top:380.24px;font-size:7.2px;line-height:9.4px;right:197px;transform:scaleX(0.991);transform-origin:100% 50%;color:#000"><span>0.91375</span></div>
<div class="a t m" style="top:380.64px;font-size:7.5px;line-height:9.8px;left:820px;color:#000;letter-spacing:-0.75px;"><span>+<span class="d">-----------</span>X</span></div>
<div class="a" style="left:397px;top:390.21299999999997px;width:512.5px;height:10.353px;background:#f3f3f3"></div>
<div class="a" style="left:370px;top:400.066px;width:27px;height:1px;background:#bcbcbc"></div>
<div class="a t" style="top:391.29px;font-size:7.5px;line-height:9.8px;left:233.5px;width:300px;text-align:center;color:#333"><span>22</span></div>
<div class="a t m" style="top:390.99px;font-size:7.5px;line-height:9.8px;left:398px;color:#000;letter-spacing:-0.75px;"><span>MNI_Cingulum_Post_R</span></div>
<div class="a t" style="top:390.59px;font-size:7.2px;line-height:9.4px;right:366px;transform:scaleX(1.001);transform-origin:100% 50%;color:#000"><span>3.2258</span></div>
<div class="a t" style="top:390.59px;font-size:7.2px;line-height:9.4px;right:309.5px;transform:scaleX(0.991);transform-origin:100% 50%;color:#000"><span>55.5000</span></div>
<div class="a t" style="top:390.59px;font-size:7.2px;line-height:9.4px;right:253.29999999999995px;transform:scaleX(1.001);transform-origin:100% 50%;color:#000"><span>0.2827</span></div>
<div class="a t" style="top:390.59px;font-size:7.2px;line-height:9.4px;right:197px;transform:scaleX(0.991);transform-origin:100% 50%;color:#000"><span>0.43248</span></div>
<div class="a t m" style="top:390.99px;font-size:7.5px;line-height:9.8px;left:820px;color:#000;letter-spacing:-0.75px;"><span>+<span class="d">------------</span>X</span></div>
<div class="a" style="left:370px;top:410.41900000000004px;width:27px;height:1px;background:#bcbcbc"></div>
<div class="a t" style="top:401.64px;font-size:7.5px;line-height:9.8px;left:233.5px;width:300px;text-align:center;color:#333"><span>23</span></div>
<div class="a t m" style="top:401.34px;font-size:7.5px;line-height:9.8px;left:398px;color:#000;letter-spacing:-0.75px;"><span>MNI_Cuneus_L</span></div>
<div class="a t" style="top:400.94px;font-size:7.2px;line-height:9.4px;right:366px;transform:scaleX(1.001);transform-origin:100% 50%;color:#000"><span>2.2657</span></div>
<div class="a t" style="top:400.94px;font-size:7.2px;line-height:9.4px;right:309.5px;transform:scaleX(0.991);transform-origin:100% 50%;color:#000"><span>26.7995</span></div>
<div class="a t" style="top:400.94px;font-size:7.2px;line-height:9.4px;right:253.29999999999995px;transform:scaleX(1.001);transform-origin:100% 50%;color:#000"><span>0.6424</span></div>
<div class="a t" style="top:400.94px;font-size:7.2px;line-height:9.4px;right:197px;transform:scaleX(1.001);transform-origin:100% 50%;color:#000"><span>3.0946</span></div>
<div class="a t m" style="top:401.34px;font-size:7.5px;line-height:9.8px;left:820px;color:#000;letter-spacing:-0.75px;"><span>+<span class="d">--------</span>X</span></div>
<div class="a" style="left:397px;top:410.919px;width:512.5px;height:10.353px;background:#f3f3f3"></div>
<div class="a" style="left:370px;top:420.772px;width:27px;height:1px;background:#bcbcbc"></div>
<div class="a t" style="top:412.00px;font-size:7.5px;line-height:9.8px;left:233.5px;width:300px;text-align:center;color:#333"><span>24</span></div>
<div class="a t m" style="top:411.70px;font-size:7.5px;line-height:9.8px;left:398px;color:#000;letter-spacing:-0.75px;"><span>MNI_Cuneus_R</span></div>
<div class="a t" style="top:411.30px;font-size:7.2px;line-height:9.4px;right:366px;transform:scaleX(1.001);transform-origin:100% 50%;color:#000"><span>2.3926</span></div>
<div class="a t" style="top:411.30px;font-size:7.2px;line-height:9.4px;right:309.5px;transform:scaleX(0.991);transform-origin:100% 50%;color:#000"><span>28.9136</span></div>
<div class="a t" style="top:411.30px;font-size:7.2px;line-height:9.4px;right:253.29999999999995px;transform:scaleX(1.001);transform-origin:100% 50%;color:#000"><span>0.6455</span></div>
<div class="a t" style="top:411.30px;font-size:7.2px;line-height:9.4px;right:197px;transform:scaleX(1.001);transform-origin:100% 50%;color:#000"><span>3.0775</span></div>
<div class="a t m" style="top:411.70px;font-size:7.5px;line-height:9.8px;left:820px;color:#000;letter-spacing:-0.75px;"><span>+<span class="d">---------</span>X</span></div>
<div class="a" style="left:370px;top:431.125px;width:27px;height:1px;background:#bcbcbc"></div>
<div class="a t" style="top:422.35px;font-size:7.5px;line-height:9.8px;left:233.5px;width:300px;text-align:center;color:#333"><span>25</span></div>
<div class="a t m" style="top:422.05px;font-size:7.5px;line-height:9.8px;left:398px;color:#000;letter-spacing:-0.75px;"><span>MNI_Frontal_Inf_Oper_L</span></div>
<div class="a t" style="top:421.65px;font-size:7.2px;line-height:9.4px;right:366px;transform:scaleX(1.001);transform-origin:100% 50%;color:#000"><span>3.3293</span></div>
<div class="a t" style="top:421.65px;font-size:7.2px;line-height:9.4px;right:309.5px;transform:scaleX(0.991);transform-origin:100% 50%;color:#000"><span>45.6446</span></div>
<div class="a t" style="top:421.65px;font-size:7.2px;line-height:9.4px;right:253.29999999999995px;transform:scaleX(1.001);transform-origin:100% 50%;color:#000"><span>0.7506</span></div>
<div class="a t" style="top:421.65px;font-size:7.2px;line-height:9.4px;right:197px;transform:scaleX(1.001);transform-origin:100% 50%;color:#000"><span>2.0397</span></div>
<div class="a t m" style="top:422.05px;font-size:7.5px;line-height:9.8px;left:820px;color:#000;letter-spacing:-0.75px;"><span>+<span class="d">------------</span>X</span></div>
<div class="a" style="left:397px;top:431.625px;width:512.5px;height:10.353px;background:#f3f3f3"></div>
<div class="a" style="left:370px;top:441.478px;width:27px;height:1px;background:#bcbcbc"></div>
<div class="a t" style="top:432.70px;font-size:7.5px;line-height:9.8px;left:233.5px;width:300px;text-align:center;color:#333"><span>26</span></div>
<div class="a t m" style="top:432.40px;font-size:7.5px;line-height:9.8px;left:398px;color:#000;letter-spacing:-0.75px;"><span>MNI_Frontal_Inf_Oper_R</span></div>
<div class="a t" style="top:432.00px;font-size:7.2px;line-height:9.4px;right:366px;transform:scaleX(1.001);transform-origin:100% 50%;color:#000"><span>2.7533</span></div>
<div class="a t" style="top:432.00px;font-size:7.2px;line-height:9.4px;right:309.5px;transform:scaleX(0.991);transform-origin:100% 50%;color:#000"><span>33.1878</span></div>
<div class="a t" style="top:432.00px;font-size:7.2px;line-height:9.4px;right:253.29999999999995px;transform:scaleX(1.001);transform-origin:100% 50%;color:#000"><span>0.7258</span></div>
<div class="a t" style="top:432.00px;font-size:7.2px;line-height:9.4px;right:197px;transform:scaleX(1.001);transform-origin:100% 50%;color:#000"><span>3.0171</span></div>
<div class="a t m" style="top:432.40px;font-size:7.5px;line-height:9.8px;left:820px;color:#000;letter-spacing:-0.75px;"><span>+<span class="d">----------</span>X</span></div>
<div class="a" style="left:370px;top:451.831px;width:27px;height:1px;background:#bcbcbc"></div>
<div class="a t" style="top:443.05px;font-size:7.5px;line-height:9.8px;left:233.5px;width:300px;text-align:center;color:#333"><span>27</span></div>
<div class="a t m" style="top:442.75px;font-size:7.5px;line-height:9.8px;left:398px;color:#000;letter-spacing:-0.75px;"><span>MNI_Frontal_Inf_Orb_L</span></div>
<div class="a t" style="top:442.35px;font-size:7.2px;line-height:9.4px;right:366px;transform:scaleX(1.001);transform-origin:100% 50%;color:#000"><span>4.3347</span></div>
<div class="a t" style="top:442.35px;font-size:7.2px;line-height:9.4px;right:309.5px;transform:scaleX(0.991);transform-origin:100% 50%;color:#000"><span>75.4597</span></div>
<div class="a t" style="top:442.35px;font-size:7.2px;line-height:9.4px;right:253.29999999999995px;transform:scaleX(1.001);transform-origin:100% 50%;color:#000"><span>2.0379</span></div>
<div class="a t" style="top:442.35px;font-size:7.2px;line-height:9.4px;right:197px;transform:scaleX(1.001);transform-origin:100% 50%;color:#000"><span>3.9650</span></div>
<div class="a t m" style="top:442.75px;font-size:7.5px;line-height:9.8px;left:820px;color:#000;letter-spacing:-0.75px;"><span>+<span class="d">----------------</span>X</span></div>
<div class="a" style="left:397px;top:452.331px;width:512.5px;height:10.353px;background:#f3f3f3"></div>
<div class="a" style="left:370px;top:462.184px;width:27px;height:1px;background:#bcbcbc"></div>
<div class="a t" style="top:453.41px;font-size:7.5px;line-height:9.8px;left:233.5px;width:300px;text-align:center;color:#333"><span>28</span></div>
<div class="a t m" style="top:453.11px;font-size:7.5px;line-height:9.8px;left:398px;color:#000;letter-spacing:-0.75px;"><span>MNI_Frontal_Inf_Orb_R</span></div>
<div class="a t" style="top:452.71px;font-size:7.2px;line-height:9.4px;right:366px;transform:scaleX(1.001);transform-origin:100% 50%;color:#000"><span>3.8583</span></div>
<div class="a t" style="top:452.71px;font-size:7.2px;line-height:9.4px;right:309.5px;transform:scaleX(0.991);transform-origin:100% 50%;color:#000"><span>60.3416</span></div>
<div class="a t" style="top:452.71px;font-size:7.2px;line-height:9.4px;right:253.29999999999995px;transform:scaleX(1.001);transform-origin:100% 50%;color:#000"><span>1.6419</span></div>
<div class="a t" style="top:452.71px;font-size:7.2px;line-height:9.4px;right:197px;transform:scaleX(1.001);transform-origin:100% 50%;color:#000"><span>3.5266</span></div>
<div class="a t m" style="top:453.11px;font-size:7.5px;line-height:9.8px;left:820px;color:#000;letter-spacing:-0.75px;"><span>+<span class="d">--------------</span>X</span></div>
<div class="a" style="left:370px;top:472.53700000000003px;width:27px;height:1px;background:#bcbcbc"></div>
<div class="a t" style="top:463.76px;font-size:7.5px;line-height:9.8px;left:233.5px;width:300px;text-align:center;color:#333"><span>29</span></div>
<div class="a t m" style="top:463.46px;font-size:7.5px;line-height:9.8px;left:398px;color:#000;letter-spacing:-0.75px;"><span>MNI_Frontal_Inf_Tri_L</span></div>
<div class="a t" style="top:463.06px;font-size:7.2px;line-height:9.4px;right:366px;transform:scaleX(1.001);transform-origin:100% 50%;color:#000"><span>1.6926</span></div>
<div class="a t" style="top:463.06px;font-size:7.2px;line-height:9.4px;right:309.5px;transform:scaleX(0.991);transform-origin:100% 50%;color:#000"><span>22.2258</span></div>
<div class="a t" style="top:463.06px;font-size:7.2px;line-height:9.4px;right:253.29999999999995px;transform:scaleX(1.001);transform-origin:100% 50%;color:#000"><span>0.8798</span></div>
<div class="a t" style="top:463.06px;font-size:7.2px;line-height:9.4px;right:197px;transform:scaleX(1.001);transform-origin:100% 50%;color:#000"><span>6.2498</span></div>
<div class="a t m" style="top:463.46px;font-size:7.5px;line-height:9.8px;left:820px;color:#000;letter-spacing:-0.75px;"><span>+<span class="d">------</span>X</span></div>
<div class="a" style="left:397px;top:473.037px;width:512.5px;height:10.353px;background:#f3f3f3"></div>
<div class="a" style="left:370px;top:482.89px;width:27px;height:1px;background:#bcbcbc"></div>
<div class="a t" style="top:474.11px;font-size:7.5px;line-height:9.8px;left:233.5px;width:300px;text-align:center;color:#333"><span>30</span></div>
<div class="a t m" style="top:473.81px;font-size:7.5px;line-height:9.8px;left:398px;color:#000;letter-spacing:-0.75px;"><span>MNI_Frontal_Inf_Tri_R</span></div>
<div class="a t" style="top:473.41px;font-size:7.2px;line-height:9.4px;right:366px;transform:scaleX(1.001);transform-origin:100% 50%;color:#000"><span>1.2289</span></div>
<div class="a t" style="top:473.41px;font-size:7.2px;line-height:9.4px;right:309.5px;transform:scaleX(0.991);transform-origin:100% 50%;color:#000"><span>14.7498</span></div>
<div class="a t" style="top:473.41px;font-size:7.2px;line-height:9.4px;right:253.29999999999995px;transform:scaleX(1.001);transform-origin:100% 50%;color:#000"><span>0.5029</span></div>
<div class="a t" style="top:473.41px;font-size:7.2px;line-height:9.4px;right:197px;transform:scaleX(1.001);transform-origin:100% 50%;color:#000"><span>4.7973</span></div>
<div class="a t m" style="top:473.81px;font-size:7.5px;line-height:9.8px;left:820px;color:#000;letter-spacing:-0.75px;"><span>+<span class="d">----</span>X</span></div>
<div class="a" style="left:909.5px;top:162px;width:10.5px;height:11px;background:#f4f4f4"></div>
<div class="a" style="left:909.5px;top:173px;width:10.5px;height:310.5px;background:#f0f0f0"></div>
<div class="a" style="left:911px;top:183px;width:8.5px;height:75px;background:#cdcdcd"></div>
<svg width="929" height="491" viewBox="0 0 929 491"><g stroke="#555" stroke-width="0.9" fill="none"><path d="M912.7 179l2.3-2.3 2.3 2.3"/><path d="M912.7 476.5l2.3 2.3 2.3-2.3"/></g></svg>
<div class="a" style="left:1.2px;top:2px;width:365px;height:489px;background:#f0f0f0;border:1.3px solid #4fb2ee;border-left-width:2px;border-right-color:#e6e6e6"></div>
<div class="a" style="left:364.9px;top:2px;width:1.3px;height:34.5px;background:#4fb2ee"></div>
<div class="a" style="left:364.9px;top:434px;width:1.3px;height:57px;background:#4fb2ee"></div>
<div class="a" style="left:3.2px;top:3.3px;width:361.7px;height:14px;background:#fff;border-bottom:1px solid #cfcfcf"></div>
<div class="a t" style="top:4.60px;font-size:8px;line-height:10.4px;left:17.6px;transform:scaleX(0.724);transform-origin:0 50%;color:#222"><span>BAAD View : C:¥Users¥</span></div>
<div class="a" style="left:80px;top:7.3px;width:210px;height:4px;background:linear-gradient(90deg,#bdbdbd,#d4d4d4 30%,#c8c8c8 55%,#d8d8d8 80%,#e8e8e8);filter:blur(1.1px);border-radius:2px"></div>
<svg width="929" height="491" viewBox="0 0 929 491"><rect x="7" y="5.5" width="8" height="8" fill="#f4f4f4" stroke="#8a8a8a" stroke-width="0.6"/><path d="M8.2 11.8l2-1.8 1.3 1 2-4 1.2 4.8z" fill="#d9541e"/><path d="M8.2 11.8l2-1.8.9.8z" fill="#3b6fb5"/>
<g stroke="#222" stroke-width="0.9" fill="none"><path d="M302.5 9.5h5.5"/><rect x="326.5" y="7.2" width="5.2" height="4.6"/><path d="M350.5 7l5.6 4.800M356.100 7l-5.6 4.800"/></g></svg>
<div class="a t" style="top:102.60px;font-size:8px;line-height:10.4px;right:815.3px;transform:scaleX(0.917);transform-origin:100% 50%;color:#222"><span>4.5</span></div>
<div class="a t" style="top:116.20px;font-size:8px;line-height:10.4px;right:815.3px;transform:scaleX(0.764);transform-origin:100% 50%;color:#222"><span>4</span></div>
<div class="a t" style="top:129.60px;font-size:8px;line-height:10.4px;right:815.3px;transform:scaleX(0.917);transform-origin:100% 50%;color:#222"><span>3.5</span></div>
<div class="a t" style="top:143.00px;font-size:8px;line-height:10.4px;right:815.3px;transform:scaleX(0.764);transform-origin:100% 50%;color:#222"><span>3</span></div>
<div class="a t" style="top:156.10px;font-size:8px;line-height:10.4px;right:815.3px;transform:scaleX(0.917);transform-origin:100% 50%;color:#222"><span>2.5</span></div>
<div class="a t" style="top:168.60px;font-size:8px;line-height:10.4px;right:815.3px;transform:scaleX(0.764);transform-origin:100% 50%;color:#222"><span>2</span></div>
<div class="a" style="left:117.5px;top:102.5px;width:13px;height:73px;background:linear-gradient(180deg,#ffffff 0%,#ffff60 18%,#ffe000 33%,#ff9000 55%,#f02000 78%,#a00000 100%);border:1px solid #555"></div>
<div class="a t" style="top:103.00px;font-size:8px;line-height:10.4px;left:139px;transform:scaleX(0.970);transform-origin:0 50%;color:#333"><span>min</span></div>
<div class="a t" style="top:103.00px;font-size:8px;line-height:10.4px;left:162.5px;transform:scaleX(0.926);transform-origin:0 50%;color:#333"><span>max</span></div>
<div class="a t" style="top:114.40px;font-size:8px;line-height:10.4px;left:138px;transform:scaleX(0.963);transform-origin:0 50%;color:#333"><span>1.96</span></div>
<div class="a t" style="top:114.40px;font-size:8px;line-height:10.4px;left:162.5px;transform:scaleX(0.995);transform-origin:0 50%;color:#333"><span>auto</span></div>
<div class="a" style="left:132.5px;top:131.3px;width:7px;height:7px;background:#fff;border:0.8px solid #555"></div>
<div class="a t" style="top:129.45px;font-size:8.5px;line-height:11.1px;left:141px;transform:scaleX(0.960);transform-origin:0 50%;color:#222"><span>XHairs Off</span></div>
<div class="a t" style="top:145.05px;font-size:8.5px;line-height:11.1px;left:140px;color:#555;font-style:italic;font-family:'Liberation Serif',serif"><span>x</span></div>
<div class="a t" style="top:145.40px;font-size:8px;line-height:10.4px;left:156.2px;transform:scaleX(0.899);transform-origin:0 50%;color:#333"><span>0.43</span></div>
<div class="a t" style="top:154.45px;font-size:8.5px;line-height:11.1px;left:140px;color:#555;font-style:italic;font-family:'Liberation Serif',serif"><span>y</span></div>
<div class="a t" style="top:154.80px;font-size:8px;line-height:10.4px;left:156.2px;transform:scaleX(0.899);transform-origin:0 50%;color:#333"><span>0.40</span></div>
<div class="a t" style="top:163.95px;font-size:8.5px;line-height:11.1px;left:140px;color:#555;font-style:italic;font-family:'Liberation Serif',serif"><span>z</span></div>
<div class="a t" style="top:164.30px;font-size:8px;line-height:10.4px;left:156.2px;transform:scaleX(0.899);transform-origin:0 50%;color:#333"><span>0.17</span></div>
<div class="a" style="left:4px;top:181.5px;width:181px;height:12px;background:#fff;border:1px solid #b8b8b8;overflow:hidden"></div>
<div class="a t" style="left:5.5px;top:182px;width:178px;height:11px;overflow:hidden;font-size:7.7px;line-height:11px;color:#333">undefined // undefined // undefined // undefined // undefined</div>
<div class="a t" style="top:193.15px;font-size:9px;line-height:11.7px;left:6px;transform:scaleX(0.950);transform-origin:0 50%;font-weight:bold;color:#111"><span>Atrophy/Hypertrophy</span></div>
<div class="a" style="left:29.0px;top:205.0px;width:7px;height:7px;border:0.8px solid #333;border-radius:50%;background:#fff"></div>
<div class="a" style="left:30.9px;top:206.9px;width:3.2px;height:3.2px;border-radius:50%;background:#222"></div>
<div class="a t" style="top:203.05px;font-size:8.5px;line-height:11.1px;left:38px;transform:scaleX(0.956);transform-origin:0 50%;color:#222"><span>Atrophy</span></div>
<div class="a" style="left:80.0px;top:205.0px;width:7px;height:7px;border:0.8px solid #333;border-radius:50%;background:#fff"></div>
<div class="a t" style="top:203.05px;font-size:8.5px;line-height:11.1px;left:88.7px;transform:scaleX(0.928);transform-origin:0 50%;color:#222"><span>Hypertrophy</span></div>
<div class="a" style="left:145.0px;top:205.0px;width:7px;height:7px;border:0.8px solid #333;border-radius:50%;background:#fff"></div>
<div class="a t" style="top:203.05px;font-size:8.5px;line-height:11.1px;left:154px;transform:scaleX(0.943);transform-origin:0 50%;color:#222"><span>Both</span></div>
<div class="a t" style="top:213.15px;font-size:9px;line-height:11.7px;left:6px;transform:scaleX(0.900);transform-origin:0 50%;font-weight:bold;color:#111"><span>Group analysis</span></div>
<div class="a t" style="top:224.45px;font-size:8.5px;line-height:11.1px;left:40.5px;transform:scaleX(0.897);transform-origin:0 50%;color:#a8a8a8"><span>FDR p=</span></div>
<div class="a t" style="top:224.45px;font-size:8.5px;line-height:11.1px;left:112.5px;transform:scaleX(0.873);transform-origin:0 50%;color:#a8a8a8"><span>FWE p=</span></div>
<div class="a t" style="top:233.35px;font-size:9px;line-height:11.7px;left:6px;transform:scaleX(0.908);transform-origin:0 50%;font-weight:bold;color:#111"><span>Threshold</span></div>
<div class="a t" style="top:243.45px;font-size:8.5px;line-height:11.1px;left:11px;transform:scaleX(0.891);transform-origin:0 50%;color:#222"><span>Z = 1.96</span></div>
<div class="a t" style="top:243.45px;font-size:8.5px;line-height:11.1px;left:51px;transform:scaleX(0.940);transform-origin:0 50%;color:#222"><span>cluster size &gt;=</span></div>
<div class="a t" style="top:243.45px;font-size:8.5px;line-height:11.1px;left:110.5px;transform:scaleX(0.950);transform-origin:0 50%;color:#222"><span>50</span></div>
<div class="a t" style="top:254.95px;font-size:9px;line-height:11.7px;left:6px;transform:scaleX(0.937);transform-origin:0 50%;font-weight:bold;color:#111"><span>Slice adjustment</span></div>
<div class="a" style="left:5px;top:267.5px;width:36px;height:11.5px;background:#fff;border:1px solid #9a9a9a"></div>
<div class="a" style="left:33.5px;top:268.5px;width:7px;height:9.5px;background:#e6e6e6"></div>
<div class="a t" style="top:268.40px;font-size:7.5px;line-height:9.8px;left:7px;transform:scaleX(0.912);transform-origin:0 50%;color:#222"><span>trans..</span></div>
<svg width="929" height="491" viewBox="0 0 929 491"><path d="M35 272.3l2 2 2-2" stroke="#444" stroke-width="0.8" fill="none"/></svg>
<div class="a t" style="top:268.30px;font-size:8px;line-height:10.4px;left:45.7px;transform:scaleX(0.917);transform-origin:0 50%;color:#222"><span>Start</span></div>
<div class="a t" style="top:267.30px;font-size:8px;line-height:10.4px;left:66px;transform:scaleX(0.951);transform-origin:0 50%;color:#222"><span>-72</span></div>
<div class="a t" style="top:268.30px;font-size:8px;line-height:10.4px;left:93px;transform:scaleX(0.773);transform-origin:0 50%;color:#222"><span>End</span></div>
<div class="a t" style="top:267.30px;font-size:8px;line-height:10.4px;left:108.7px;transform:scaleX(0.898);transform-origin:0 50%;color:#222"><span>100</span></div>
<div class="a t" style="top:268.30px;font-size:8px;line-height:10.4px;left:142.5px;transform:scaleX(0.864);transform-origin:0 50%;color:#222"><span>Spacing</span></div>
<div class="a t" style="top:267.30px;font-size:8px;line-height:10.4px;left:174px;transform:scaleX(0.786);transform-origin:0 50%;color:#222"><span>5</span></div>
<svg width="929" height="491" viewBox="0 0 929 491">
<defs>
<filter id="f03" x="-20%" y="-20%" width="140%" height="140%"><feGaussianBlur stdDeviation="0.35"/></filter>
<filter id="f05" x="-20%" y="-20%" width="140%" height="140%"><feGaussianBlur stdDeviation="0.55"/></filter>
<filter id="f1" x="-20%" y="-20%" width="140%" height="140%"><feGaussianBlur stdDeviation="0.9"/></filter>
<filter id="f2" x="-30%" y="-30%" width="160%" height="160%"><feGaussianBlur stdDeviation="1.8"/></filter>
<radialGradient id="hot"><stop offset="0" stop-color="#fff7a0"/><stop offset="0.35" stop-color="#ffc800"/><stop offset="0.7" stop-color="#ff3800"/><stop offset="1" stop-color="#d80000"/></radialGradient>
<radialGradient id="g3d" cx="0.46" cy="0.38" r="0.68"><stop offset="0" stop-color="#ffffff"/><stop offset="0.5" stop-color="#ececec"/><stop offset="0.82" stop-color="#c0c0c0"/><stop offset="1" stop-color="#707070"/></radialGradient>
<radialGradient id="gcb" cx="0.5" cy="0.4" r="0.65"><stop offset="0" stop-color="#dcdcdc"/><stop offset="0.7" stop-color="#a8a8a8"/><stop offset="1" stop-color="#505050"/></radialGradient>
<radialGradient id="pink"><stop offset="0" stop-color="#ff2828" stop-opacity="0.95"/><stop offset="0.55" stop-color="#ff4848" stop-opacity="0.75"/><stop offset="1" stop-color="#ff8080" stop-opacity="0"/></radialGradient>
<linearGradient id="cbar" x1="0" x2="1" y1="0" y2="0"><stop offset="0" stop-color="#8a0000"/><stop offset="0.2" stop-color="#f01000"/><stop offset="0.42" stop-color="#ff8000"/><stop offset="0.62" stop-color="#ffe000"/><stop offset="0.8" stop-color="#ffff70"/><stop offset="1" stop-color="#ffffff"/></linearGradient>
<clipPath id="csag"><rect x="5.4" y="22.8" width="97.2" height="74.2"/></clipPath>
<clipPath id="ccor"><rect x="108.3" y="22.8" width="81.9" height="74.2"/></clipPath>
<clipPath id="caxi"><rect x="5.4" y="103" width="97.2" height="74.3"/></clipPath>
<clipPath id="cgrid"><rect x="5.5" y="282.3" width="356.5" height="206.4"/></clipPath>
</defs>
<rect x="5.4" y="22.8" width="97.2" height="74.2" fill="#040404"/>
<g clip-path="url(#csag)">
<g filter="url(#f1)">
<ellipse cx="57" cy="70.5" rx="47.8" ry="43.5" fill="#8e8e8e"/>
<ellipse cx="57.3" cy="71" rx="44.6" ry="40.2" fill="#3e3e3e"/>
<ellipse cx="57.8" cy="70" rx="41.6" ry="37" fill="#626262"/>
<ellipse cx="55" cy="52" rx="30" ry="13" fill="#6e6e6e"/>
<ellipse cx="31" cy="81" rx="12" ry="11" fill="#7e7e7e"/>
<ellipse cx="24" cy="74" rx="9" ry="5" fill="#6a6a6a"/>
<path d="M58 76 L102 74 L102 99 L54 99z" fill="#5c5c5c"/>
<ellipse cx="74" cy="82" rx="15" ry="5.500" fill="#1c1c1c"/>
<ellipse cx="88" cy="84" rx="10" ry="4" fill="#343434"/>
<path d="M47 69 L57 68 L55 78 L49 99 L39 99 L44 82z" fill="#989898"/>
<ellipse cx="52" cy="66" rx="8" ry="4" fill="#909090"/>
</g>
<path d="M44 63.5 Q44 57.5 56 57.2 Q70 57.2 73.5 64" fill="none" stroke="#c4c4c4" stroke-width="2.8" stroke-linecap="round" filter="url(#f05)"/>
<path d="M47 64.5 Q50 60.8 57 60.8 Q64 61 67 64.5" fill="none" stroke="#4c4c4c" stroke-width="1.6" filter="url(#f05)"/>
<g filter="url(#f03)">
<circle cx="40.5" cy="39.5" r="0.9" fill="#d01000"/>
<path d="M54 50.5 L56 49 L61 48.8 L61 50.5 L57 51.6z" fill="#e81800"/>
<path d="M69.5 53.5 L74 55.5 L78.5 56.5 L82 60.5 L84 65 L81 66.5 L78 63 L75.5 58.5 L71 56z" fill="#f02800"/>
<ellipse cx="79.6" cy="60.8" rx="2.7" ry="4.4" fill="url(#hot)" transform="rotate(-30 79.8 61.2)"/>
</g>
<path d="M62.5 22.8V97M5.4 67.5H102.6" stroke="#2f7cbd" stroke-width="0.9"/>
</g>
<rect x="108.3" y="22.8" width="81.900" height="74.2" fill="#040404"/>
<g clip-path="url(#ccor)">
<g filter="url(#f1)">
<path d="M113.5 110 V64 A35.8 36 0 0 1 185.1 64 V110z" fill="#858585"/>
<path d="M117.600 110 V64.5 A31.7 32 0 0 1 181 64.5 V110z" fill="#3c3c3c"/>
<path d="M119.800 91 V64.5 A29.5 29.8 0 0 1 178.8 64.5 V91z" fill="#8c8c8c"/>
<ellipse cx="136" cy="54" rx="10.500" ry="13" fill="#b4b4b4"/>
<ellipse cx="163" cy="54" rx="10.500" ry="13" fill="#b4b4b4"/>
<ellipse cx="149.5" cy="71" rx="15" ry="7" fill="#a4a4a4"/>
<path d="M142.5 56.5 L149.5 62 L156.5 56.5 L154 60.5 L149.5 65 L145 60.5z" fill="#303030"/>
<rect x="112" y="88" width="76" height="4" fill="#383838"/>
<rect x="120" y="92.500" width="60" height="8" fill="#707070"/>
<ellipse cx="149.5" cy="83" rx="7" ry="4" fill="#505050"/>
<ellipse cx="130" cy="77" rx="6" ry="4" fill="#a8a8a8"/>
<ellipse cx="169" cy="77" rx="6" ry="4" fill="#a8a8a8"/>
<ellipse cx="139" cy="80" rx="3" ry="3" fill="#606060"/>
<ellipse cx="160" cy="80" rx="3" ry="3" fill="#606060"/>
</g>
<g filter="url(#f03)">
<circle cx="149.6" cy="50.2" r="0.8" fill="#c81000"/>
<circle cx="173.5" cy="59" r="0.8" fill="#d01000"/>
<ellipse cx="162.2" cy="76" rx="3" ry="2.7" fill="#f01000"/>
<circle cx="156.3" cy="82.3" r="0.9" fill="#e01000"/>
<path d="M158.5 87.5 L163 85 L165.5 82 L168.5 83.5 L170 87 L166 88.5z" fill="#f01000"/>
</g>
<path d="M149.5 22.8V97M108.3 67.5H190.2" stroke="#2f7cbd" stroke-width="0.9"/>
<text x="110.8" y="33.6" font-family="'Liberation Sans',sans-serif" font-size="10.5" fill="#b4b4b4">L</text>
<text x="177.5" y="33.6" font-family="'Liberation Sans',sans-serif" font-size="10.5" fill="#b4b4b4">R</text>
</g>
<rect x="5.4" y="103" width="97.2" height="74.3" fill="#040404"/>
<g clip-path="url(#caxi)">
<g filter="url(#f1)">
<ellipse cx="55" cy="140" rx="45.5" ry="34" fill="#c2c2c2"/>
<ellipse cx="55" cy="140" rx="42.8" ry="31.4" fill="#2c2c2c"/>
<ellipse cx="55.5" cy="140" rx="40.4" ry="29" fill="#a6a6a6"/>
<ellipse cx="80" cy="140" rx="13" ry="20" fill="#c8c8c8"/>
<ellipse cx="27" cy="140" rx="11" ry="20" fill="#c2c2c2"/>
<ellipse cx="55" cy="119" rx="22" ry="6" fill="#bebebe"/>
<ellipse cx="55" cy="161" rx="22" ry="6" fill="#bebebe"/>
<path d="M30 131 Q40 127 44 134 L44 146 Q40 153 30 149 Q36 140 30 131z" fill="#646464"/>
<path d="M26 139 H62 V141.2 H26z" fill="#4a4a4a"/>
<path d="M52 130 Q60 124 68 128 L62 136z" fill="#848484"/>
<path d="M52 150 Q60 156 68 152 L62 144z" fill="#848484"/>
<path d="M62 138 L74 132 L72 135 L64 140 L72 145 L74 148 L62 142z" fill="#4a4a4a"/>
</g>
<g filter="url(#f03)">
<path d="M80 134.6 L83.5 133.6 L83.8 135.8 L81.5 136.6z" fill="#e81000"/>
<ellipse cx="84" cy="142.4" rx="2.3" ry="1.9" fill="url(#hot)"/>
</g>
<path d="M62.5 103V177.3M5.4 140H102.6" stroke="#2f7cbd" stroke-width="0.9"/>
</g>
<rect x="195.3" y="22.5" width="166.7" height="257.7" fill="#000"/>
<defs>
<clipPath id="cb1"><path d="M239 35.5 C226 34 213 43 212.8 58 C212.6 68 216 75 222 79 L226 84 L233 83 L239 87 L245 83 L252 84 L256 79 C262 75 265.4 68 265.2 58 C265 43 252 34 239 35.5z"/></clipPath>
<clipPath id="cb2"><path d="M318 35.5 C304 34 291.3 44 291.3 59 C291.3 68 294 73 298 76 C300 84 308 87 318 86 C328 87 336 84 338 76 C342 73 344.8 68 344.8 59 C344.8 44 332 34 318 35.5z"/></clipPath>
<clipPath id="cb3"><path d="M205.5 126 C204 112 216 99 236 97.8 C256 96.8 271 108 271 122 C271 130 267 135 261 137 C262 143 256 148 249 148 C244 150 240 146 238 142 C232 146 222 145 220 139 C212 139 206 134 205.5 126z"/></clipPath>
<clipPath id="cb4"><path d="M352.5 126 C354 112 342 99 322 97.8 C302 96.8 287 108 287 122 C287 130 291 135 297 137 C296 143 302 148 309 148 C314 150 318 146 320 142 C326 146 336 145 338 139 C346 139 352 134 352.500 126z"/></clipPath>
<clipPath id="cb5"><path d="M238 157 C258 157 270.3 167 270.3 180.5 C270.3 194 258 204 238 204 C218 204 205.7 194 205.7 180.5 C205.7 167 218 157 238 157z"/></clipPath>
<clipPath id="cb6"><path d="M319.3 157 C339 157 351.3 167 351.3 180.5 C351.3 194 339 204 319.3 204 C299 204 287.300 194 287.3 180.5 C287.3 167 299 157 319.3 157z"/></clipPath>
<clipPath id="cb7"><path d="M206 250 C204 235 216 221.5 236 220.3 C256 219.3 271.3 231 271 246 C271 254 267 259 262 261 C258 268 252 267 250 264 C248 272 240 274 236 266 C232 262 228 262 224 266 C216 270 210 264 214 258 C209 257 206.500 254 206 250z"/></clipPath>
<clipPath id="cb8"><path d="M352.5 250 C354.5 235 342.5 221.5 322.5 220.3 C302.5 219.3 287.200 231 287.5 246 C287.5 254 291.5 259 296.5 261 C300.5 268 306.5 267 308.5 264 C310.5 272 318.5 274 322.5 266 C326.5 262 330.5 262 334.5 266 C342.5 270 348.5 264 344.5 258 C349.5 257 352 254 352.500 250z"/></clipPath>
</defs>
<path d="M239 35.5 C226 34 213 43 212.8 58 C212.6 68 216 75 222 79 L226 84 L233 83 L239 87 L245 83 L252 84 L256 79 C262 75 265.4 68 265.2 58 C265 43 252 34 239 35.5z" fill="url(#g3d)"/>
<g clip-path="url(#cb1)" fill="none" stroke="#383838" stroke-width="0.65" stroke-linecap="round" opacity="0.85" filter="url(#f03)">
<path d="M236.4 64.1Q236.1 65.6 234.2 68.2Q234.0 70.0 232.4 71.8Q231.8 73.7 233.1 75.6M244.2 55.6Q245.0 57.7 243.4 60.1Q241.6 61.7 240.5 62.8M243.9 45.2Q244.8 46.8 245.4 49.0Q243.4 50.8 242.9 53.4Q243.0 54.8 242.4 56.4M253.4 55.8Q253.5 56.8 254.1 58.3Q253.7 59.2 252.9 60.6Q253.0 62.3 251.6 64.3M230.2 51.2Q230.9 52.3 230.8 53.9Q233.0 55.2 234.6 56.3Q235.7 56.4 237.2 57.7M246.8 41.1Q247.8 42.5 250.7 43.5Q251.3 44.7 251.0 46.1M244.5 65.0Q245.7 65.3 247.4 66.3Q248.6 66.5 250.1 66.4M225.1 66.3Q226.0 66.8 228.1 68.9Q230.1 69.3 231.6 70.9Q233.7 72.5 234.9 73.7M241.9 70.7Q242.7 72.3 241.8 74.3Q240.4 75.6 239.5 76.3Q237.6 77.3 235.5 76.8M250.9 38.6Q253.1 39.1 254.3 42.0Q256.0 42.0 257.6 43.3M231.9 64.8Q233.7 65.9 235.2 66.2Q237.3 68.2 239.6 68.3Q241.3 68.0 242.8 69.6M244.3 38.9Q246.8 40.5 248.3 41.9Q248.8 44.2 250.6 46.0Q251.0 48.4 250.5 50.8M260.6 80.3Q259.4 82.1 258.6 83.7Q258.3 85.0 256.1 86.8M265.6 80.7Q263.8 81.8 261.9 82.7Q260.1 83.8 258.4 84.1Q257.3 85.4 257.3 86.4M254.1 69.3Q254.3 70.7 254.8 72.1Q253.7 73.7 254.2 75.4M225.0 56.0Q225.4 58.2 224.2 60.3Q225.6 62.1 225.6 64.9Q227.8 66.0 228.2 68.9M264.9 77.7Q266.3 78.8 267.4 79.5Q268.3 81.0 270.1 81.4Q271.4 82.5 272.4 82.8M214.2 71.8Q213.2 73.7 212.8 75.5Q213.8 77.7 213.7 79.8Q214.0 82.3 212.0 84.5M240.9 68.3Q240.7 69.7 240.5 71.2Q241.3 72.0 242.9 74.0M226.7 53.0Q225.5 55.0 226.3 57.4Q225.5 58.9 223.1 60.2M245.8 82.3Q246.9 84.4 246.8 86.3Q245.6 88.4 245.4 90.2Q242.9 91.3 241.1 92.6M254.7 51.7Q254.4 52.9 253.9 54.2Q253.5 55.0 251.3 56.9M215.5 76.6Q215.8 78.7 216.0 81.3Q214.7 83.0 213.9 84.5Q211.9 84.4 210.1 85.6M235.7 64.1Q234.5 66.3 233.5 68.1Q231.9 70.4 232.2 72.5M257.9 85.4Q258.9 87.1 259.8 88.7Q262.2 89.0 264.6 89.8Q266.0 91.4 267.4 92.5M215.6 63.0Q217.1 64.5 217.4 66.2Q217.4 68.5 217.3 70.9Q217.3 72.1 219.3 74.4M254.1 36.2Q255.5 36.1 257.2 37.0Q258.9 38.2 260.8 38.0M245.7 72.3Q246.0 74.2 247.9 75.7Q248.9 77.3 250.2 79.8Q251.7 80.0 253.4 81.8M261.4 67.6Q261.5 68.7 263.1 70.5Q263.3 72.8 261.5 74.9M251.2 48.5Q252.8 50.5 253.2 52.3Q253.0 53.6 253.1 55.0Q251.8 56.2 251.1 57.7M230.5 86.9Q229.7 88.0 229.5 89.3Q228.2 90.7 226.1 90.7M221.3 43.2Q221.2 44.3 221.8 46.0Q223.2 46.9 224.5 48.2M223.3 54.4Q222.3 55.1 221.2 56.4Q220.9 57.6 219.4 58.8M212.8 81.4Q211.9 82.8 211.3 84.0Q210.4 84.4 208.6 85.7Q208.6 88.0 206.6 90.1M241.1 54.2Q242.6 56.2 242.2 58.4Q242.8 59.6 243.0 60.8M245.7 47.1Q244.9 49.0 244.4 51.0Q243.6 53.3 243.7 56.0Q243.6 57.8 240.9 60.0M251.9 48.3Q252.4 50.4 250.6 52.2Q250.6 53.9 250.8 55.6M240.1 79.0Q240.0 80.3 240.1 81.7Q242.4 83.3 243.7 85.0Q245.5 84.3 247.4 85.6M263.0 56.9Q263.1 58.5 263.7 60.0Q265.3 60.8 266.1 63.6Q267.4 64.5 268.4 64.9M233.1 81.7Q232.5 83.1 231.0 85.5Q231.6 87.5 231.0 89.8M214.5 40.1Q215.7 42.6 215.5 44.9Q217.2 46.4 218.5 46.8Q219.9 46.6 221.2 47.6M234.5 66.3Q233.8 68.2 234.7 70.6Q235.3 71.9 235.9 73.2Q236.6 74.1 238.5 75.9M244.9 72.7Q244.6 74.8 242.8 76.5Q240.4 78.1 238.1 77.4M215.3 49.1Q217.2 49.6 218.1 51.7Q218.8 53.3 220.0 55.1M237.8 46.0Q237.9 46.9 236.8 48.4Q236.2 50.4 234.3 52.1M225.9 77.1Q226.3 78.4 228.3 80.8Q228.9 82.6 229.4 84.6Q229.6 86.4 230.1 88.1M237.0 77.8Q239.1 78.1 240.9 79.3Q242.8 80.0 243.9 82.3Q246.0 82.4 247.7 84.4M250.3 64.6Q249.8 66.8 248.2 68.6Q246.6 71.0 246.8 73.2Q247.0 74.9 246.7 76.7M232.9 45.1Q232.4 47.4 232.2 49.7Q231.3 52.0 229.4 53.5Q228.1 54.1 227.1 56.5M247.2 76.8Q247.9 78.2 247.4 79.5Q246.5 80.9 245.8 81.7Q244.4 83.3 242.2 83.7M253.3 62.1Q253.6 64.3 252.9 66.6Q253.8 68.8 252.5 71.1Q252.8 72.4 255.5 74.4M212.2 54.7Q211.6 56.5 211.2 58.6Q210.1 60.3 208.7 61.1Q206.5 62.8 204.0 62.8M223.0 57.1Q224.2 58.7 224.5 61.2Q222.9 63.5 222.6 65.6M238.0 76.6Q239.4 77.9 240.2 78.7Q241.5 79.6 242.1 81.1M221.3 74.4Q220.8 75.5 220.0 77.8Q219.6 78.9 217.2 81.3Q217.2 82.4 215.8 84.0M264.7 76.3Q264.6 77.6 262.8 78.8Q261.4 80.7 260.9 82.8M220.5 43.2Q220.4 44.8 218.4 47.2Q218.1 48.5 215.9 50.1Q215.1 51.5 215.6 53.0M218.9 53.3Q218.2 54.1 215.7 56.0Q215.1 57.6 212.7 58.3M222.4 70.5Q222.6 72.1 222.9 74.3Q222.5 75.9 221.5 77.2Q220.8 79.1 221.0 80.9M249.1 40.5Q249.5 42.7 247.8 44.8Q246.1 46.4 244.3 47.3Q242.9 49.0 243.2 51.5M250.8 81.9Q249.2 83.7 249.5 86.1Q249.5 87.4 248.5 88.6Q249.4 90.1 249.5 91.7M246.6 58.2Q247.3 59.4 248.6 60.1Q250.0 60.6 252.0 60.8M216.9 46.8Q218.4 48.9 219.4 50.4Q219.6 51.8 218.9 53.2M249.3 60.1Q247.9 60.6 245.9 62.3Q244.6 64.7 243.4 66.5M222.2 51.0Q223.5 51.7 224.1 53.7Q224.4 55.1 224.8 56.7Q226.1 58.4 227.4 59.8M222.7 83.5Q221.6 84.1 220.8 85.3Q220.7 87.1 220.2 88.9M217.0 80.4Q218.4 82.4 218.7 84.3Q218.5 85.3 219.6 86.8M252.3 81.6Q254.4 83.7 255.9 84.4Q257.5 84.1 259.7 85.2M241.6 39.0Q240.5 41.0 242.3 43.7Q240.6 45.8 240.9 48.1M246.6 74.7Q247.5 76.0 248.0 77.2Q249.9 78.1 251.5 78.8Q253.3 79.5 255.5 79.4M219.8 84.9Q219.0 87.3 220.5 89.6Q220.2 91.1 221.4 92.6Q219.9 94.7 219.7 96.5M218.2 83.8Q218.1 84.9 219.1 86.2Q219.7 87.9 219.8 89.7Q218.1 92.1 218.1 94.2M257.6 47.6Q256.5 48.8 256.3 50.1Q254.0 50.6 253.0 53.6M251.5 80.3Q251.3 81.8 251.7 83.2Q252.6 83.7 253.5 85.2Q253.7 87.1 253.7 89.1M251.3 36.2Q251.0 38.5 250.2 40.6Q250.4 41.5 249.2 43.0Q248.1 44.6 248.9 46.8M237.5 45.7Q239.5 47.2 240.9 48.8Q242.7 48.3 245.6 49.5M246.1 45.0Q244.6 45.3 243.8 47.2Q242.5 49.0 242.4 50.5M263.7 75.5Q264.3 76.4 265.6 78.2Q266.9 79.2 268.4 79.3M232.1 69.4Q230.1 70.6 227.4 70.2Q226.1 72.3 224.7 73.3M261.5 38.8Q260.8 39.5 259.3 41.2Q258.8 42.7 259.3 44.4M227.1 63.5Q226.6 64.5 226.0 65.8Q225.4 68.2 224.9 70.5M242.0 68.5Q241.4 70.0 240.9 72.1Q239.1 74.0 238.6 75.2Q237.2 76.2 235.9 76.4M235.8 75.2Q235.0 77.1 235.9 79.1Q235.7 79.9 237.2 81.7M236.2 80.8Q236.3 83.0 236.4 85.3Q236.3 86.6 235.0 87.4M246.6 65.1Q247.0 66.9 248.2 68.3Q247.7 70.5 248.5 72.7M247.1 61.5Q247.9 63.5 250.1 64.5Q251.8 64.0 253.6 64.5M264.4 37.2Q265.1 37.8 266.6 40.1Q269.0 40.8 270.9 42.1M228.1 57.1Q227.5 59.2 229.2 61.2Q229.5 62.2 230.9 63.5M216.6 46.8Q218.0 46.7 219.8 48.4Q221.5 49.0 223.9 49.2M259.9 59.1Q261.3 61.0 261.4 63.2Q263.3 63.8 264.6 65.5M223.6 59.3Q224.8 61.3 224.7 63.2Q225.9 64.8 225.5 66.7Q224.3 68.0 223.2 70.0M239.7 64.5Q240.6 66.1 240.4 67.8Q240.8 70.0 242.3 71.8M213.1 51.7Q212.8 52.8 211.5 54.8Q210.2 56.0 209.2 57.1M222.1 61.7Q223.4 62.2 224.8 64.0Q225.2 65.6 226.3 66.8M219.9 45.6Q220.0 46.8 221.5 48.7Q223.1 49.0 224.1 50.9Q226.1 51.4 228.1 50.4M264.7 50.5Q264.9 51.8 263.5 53.7Q263.9 55.7 263.0 58.1M218.5 60.6Q219.9 62.7 220.1 64.6Q222.1 66.3 223.7 67.2Q224.6 69.0 227.1 69.9M237.8 48.4Q237.0 49.3 235.9 50.0Q236.7 51.8 235.7 53.5Q235.6 55.4 234.9 57.1M213.3 53.0Q213.8 55.1 212.8 57.2Q212.4 59.4 211.2 61.8Q209.1 62.5 207.2 63.7M234.2 56.6Q232.9 58.3 232.9 59.8Q233.9 61.5 234.0 63.4Q233.7 64.8 232.4 65.9M248.7 47.2Q250.5 47.8 252.6 47.1Q254.8 45.9 255.8 43.9Q257.0 42.8 258.9 43.1M255.5 45.8Q254.9 47.3 252.6 49.3Q251.6 51.1 250.2 52.4M252.4 62.8Q252.7 64.8 254.9 66.2Q253.8 68.4 254.6 71.2M228.7 79.1Q230.4 80.5 231.7 81.9Q232.9 83.1 234.8 83.6Q236.8 84.1 238.9 83.7M221.9 79.5Q222.0 81.3 222.9 82.9Q223.3 85.1 221.6 87.2M248.1 47.0Q248.4 49.1 250.1 50.7Q251.6 52.0 252.7 52.7M232.9 70.3Q233.7 71.6 233.2 73.1Q233.6 75.6 231.8 77.9M213.4 63.2Q214.1 64.7 216.0 65.7Q218.1 65.4 220.2 66.9Q222.3 67.2 224.0 68.5M258.8 58.0Q257.6 57.9 255.5 59.5Q254.6 61.0 252.9 62.4Q252.8 63.6 251.8 64.8M242.2 42.9Q242.9 43.7 243.1 45.2Q243.1 47.5 242.4 50.1Q242.6 51.9 243.0 54.0M245.3 78.0Q243.3 80.2 243.3 82.2Q242.0 84.1 239.6 84.4M221.1 41.2Q222.9 41.3 225.0 41.6Q226.0 42.8 226.8 43.6Q227.8 44.2 229.7 44.8M228.6 62.6Q226.8 63.8 225.5 64.6Q223.6 65.1 221.5 63.9M229.5 72.7Q228.3 74.2 227.6 75.5Q227.7 77.8 226.8 80.2Q227.8 82.4 227.4 84.6M241.5 70.4Q243.2 70.2 244.5 72.0Q245.8 73.0 247.0 72.8M257.4 74.6Q259.5 76.6 261.0 77.0Q263.5 77.8 265.4 79.1M250.1 44.2Q249.9 45.8 248.6 47.2Q247.1 47.7 245.8 47.7Q244.3 47.0 242.7 47.6M258.2 67.7Q259.1 69.3 261.0 71.1Q262.5 72.5 264.0 74.5M241.2 37.2Q240.1 38.3 239.3 40.7Q238.5 42.5 239.8 44.4Q239.6 46.2 241.8 48.2M258.8 41.6Q258.1 43.0 258.9 44.6Q260.1 45.4 260.6 46.8Q262.1 47.2 263.2 48.1M240.0 53.1Q240.0 54.5 239.2 56.0Q239.6 57.7 241.1 59.4M225.1 76.6Q224.0 77.8 222.6 78.1Q221.6 79.5 221.9 81.4M218.3 44.4Q217.1 45.8 216.9 46.7Q214.8 48.8 213.5 50.0Q212.6 51.1 210.3 51.6M229.0 67.7Q229.6 69.2 228.9 70.7Q229.6 71.9 229.0 73.5M244.9 53.6Q245.5 55.7 245.3 57.9Q245.4 59.3 246.0 60.7M256.3 56.3Q254.9 57.8 254.0 58.8Q252.5 60.1 251.6 60.8M258.1 70.2Q258.5 72.3 259.3 74.4Q261.0 75.2 262.4 76.2Q262.4 77.8 263.1 79.3M225.2 56.4Q226.7 57.9 227.3 58.8Q227.4 60.1 227.9 61.5Q230.1 62.1 231.0 64.8M243.9 71.3Q243.2 72.5 241.5 72.8Q239.7 74.5 238.3 74.9M224.0 36.1Q222.1 36.0 220.5 38.3Q220.4 40.0 219.7 41.9Q221.2 44.1 221.2 46.7M219.7 55.5Q220.5 57.9 222.3 59.7Q220.9 61.7 221.6 63.8M259.7 57.5Q258.3 59.8 258.9 62.3Q259.1 63.9 259.3 66.1Q258.7 67.8 258.0 69.1M242.7 41.7Q244.8 42.9 246.3 44.3Q247.8 44.2 249.3 43.8Q251.0 44.2 253.7 42.6M220.4 85.5Q219.2 87.9 219.2 90.2Q217.7 91.7 216.9 92.3Q215.4 92.6 213.6 93.4M233.9 60.7Q233.8 62.1 232.7 63.7Q231.1 65.4 230.5 66.5M265.6 64.1Q266.3 65.0 267.7 66.6Q269.2 67.4 270.6 68.7M235.2 58.4Q237.0 59.6 238.5 59.6Q240.6 60.6 241.9 62.2M263.4 62.0Q264.6 64.0 264.1 65.9Q263.9 67.5 265.5 68.8M257.4 45.9Q257.3 47.7 257.2 49.7Q258.4 50.3 259.1 51.6M255.0 57.1Q256.3 59.0 255.9 61.0Q257.4 61.6 258.0 63.3Q259.6 64.5 261.1 64.0M238.5 55.6Q239.3 57.1 237.7 59.6Q237.6 60.8 235.4 62.7M234.6 70.3Q234.2 71.6 234.4 73.0Q232.7 74.9 232.2 76.6M260.5 72.8Q259.9 74.7 257.8 75.6Q256.6 77.1 255.7 80.1Q255.8 81.8 256.1 83.6M218.7 80.4Q217.9 81.9 215.6 84.2Q214.1 85.6 213.4 87.0M238.0 63.6Q238.7 65.2 238.1 66.9Q238.2 68.8 237.7 70.7Q236.4 72.0 235.4 73.2M265.0 52.1Q264.3 53.7 263.3 55.0Q261.4 56.3 259.0 56.3M223.5 82.2Q223.1 84.5 222.4 86.8Q223.8 88.8 223.4 91.1M257.8 36.8Q257.8 37.8 256.6 39.9Q255.8 40.8 253.2 42.9M223.8 45.4Q224.9 47.5 226.4 48.9Q226.5 50.6 225.9 53.1Q224.6 54.2 224.3 55.9M226.3 48.0Q226.8 49.2 227.5 51.0Q228.4 52.0 229.8 52.0Q231.5 51.8 233.2 51.4M219.1 39.6Q217.3 41.1 217.1 43.3Q216.4 44.6 217.0 46.0M254.5 47.1Q254.8 48.4 255.5 50.0Q256.6 52.3 255.2 54.7Q254.1 57.1 254.3 59.4M212.1 83.5Q210.6 84.4 208.9 83.7Q207.6 83.2 206.3 83.0M265.1 70.6Q265.3 72.3 263.5 74.5Q261.4 76.9 260.8 78.5M219.5 45.0Q218.5 47.5 217.7 49.6Q217.3 51.1 217.7 53.0M264.7 84.4Q263.5 84.5 262.2 84.9Q260.3 83.6 258.2 84.3Q256.3 86.1 255.1 86.5M218.0 80.2Q217.9 81.4 216.7 82.7Q214.6 84.5 212.7 84.7M232.0 84.8Q232.0 86.6 231.3 88.3Q233.1 90.1 234.1 91.7Q234.8 93.0 236.0 94.5M224.7 80.9Q226.4 82.5 227.7 82.9Q229.7 83.2 231.9 83.0M243.0 64.8Q244.6 65.9 246.0 66.1Q247.6 66.6 249.3 69.1Q250.3 70.5 250.4 72.0M265.4 54.3Q265.0 55.2 263.3 57.0Q261.6 57.8 260.2 58.2M227.5 65.9Q226.0 67.8 223.1 67.6Q221.3 67.8 219.8 66.1Q218.2 66.8 216.2 66.8M219.5 42.1Q218.4 42.3 216.7 43.1Q215.3 42.5 212.6 41.6Q211.2 40.8 209.8 41.3M215.9 44.6Q217.0 45.3 218.4 46.7Q220.2 48.7 221.9 49.7M226.1 39.8Q226.5 41.4 227.8 42.6Q228.8 43.9 229.3 45.1M227.9 76.2Q227.0 78.7 226.0 80.8Q226.0 82.6 226.9 84.4Q227.5 86.0 227.2 88.2M233.7 77.8Q233.4 79.9 233.0 82.2Q233.7 83.7 232.8 85.2M214.2 48.6Q213.1 50.1 212.7 51.3Q212.7 53.2 213.3 55.2Q212.4 56.8 213.2 58.3M248.6 67.3Q247.0 68.7 246.8 70.8Q245.2 71.4 243.6 71.7M249.9 52.7Q250.1 54.4 250.2 56.6Q251.3 58.3 250.4 60.0M226.5 64.9Q227.2 65.5 228.4 67.6Q229.6 67.3 230.9 68.3Q232.2 68.1 233.5 68.1M214.3 45.1Q213.2 47.1 214.0 49.0Q213.4 50.6 214.0 52.2M230.5 45.2Q229.0 47.5 229.8 50.1Q227.9 51.2 227.1 53.4Q227.4 55.6 226.6 57.9M261.7 36.2Q261.3 38.2 261.8 40.3Q259.5 42.5 258.6 43.7Q258.3 45.3 257.6 46.7M245.0 75.3Q244.9 77.4 244.5 79.4Q245.8 81.5 244.8 83.8M238.7 83.1Q240.9 85.0 243.1 84.7Q244.8 83.7 247.1 84.2Q248.9 82.9 250.6 83.3M226.4 75.1Q226.5 76.9 225.4 79.8Q223.7 82.2 223.4 84.3Q223.3 85.9 223.2 88.1M258.6 62.8Q259.9 65.0 260.5 67.3Q260.6 68.4 262.4 70.0M258.4 79.5Q258.7 81.0 258.8 82.6Q259.8 84.2 261.4 85.1M242.0 68.3Q241.7 70.0 239.5 70.9Q238.7 73.3 238.5 75.8Q236.5 75.8 234.7 78.0M226.5 76.5Q228.1 77.8 228.8 79.2Q229.8 81.3 228.4 83.8M226.5 71.1Q224.8 72.8 223.9 73.7Q222.3 74.2 220.8 74.3M216.7 64.3Q217.1 66.0 218.4 67.3Q219.3 68.8 219.4 70.2Q217.3 71.9 216.9 74.1M230.1 36.1Q228.9 38.3 226.5 39.0Q226.8 40.5 225.9 42.2Q227.1 43.2 227.2 45.5M259.1 67.3Q259.4 69.3 260.4 71.0Q260.1 73.2 262.0 75.2Q263.5 76.1 264.7 76.6M244.3 86.8Q243.5 88.3 243.6 89.8Q242.0 91.3 240.7 91.4M234.5 74.9Q234.9 75.5 237.1 77.2Q237.1 78.5 237.3 79.8Q236.3 81.1 235.6 82.9"/>
</g>
<path d="M318 35.5 C304 34 291.3 44 291.3 59 C291.3 68 294 73 298 76 C300 84 308 87 318 86 C328 87 336 84 338 76 C342 73 344.8 68 344.8 59 C344.8 44 332 34 318 35.5z" fill="url(#g3d)"/>
<g clip-path="url(#cb2)" fill="none" stroke="#383838" stroke-width="0.65" stroke-linecap="round" opacity="0.85" filter="url(#f03)">
<path d="M332.1 73.8Q333.0 75.4 333.5 77.8Q335.4 79.3 337.5 79.5Q338.5 79.7 339.9 80.5M342.5 52.0Q340.9 53.1 340.0 54.0Q339.6 56.0 339.0 57.9Q337.0 59.1 335.4 59.6M332.0 38.9Q332.2 41.2 331.7 43.5Q333.0 45.3 332.4 47.3M326.5 42.7Q326.9 43.8 328.3 44.5Q329.5 43.7 331.3 44.3M322.5 69.6Q323.6 70.7 325.5 72.5Q325.8 74.0 325.9 75.6Q326.3 77.8 327.0 80.0M344.3 46.6Q346.6 47.8 348.5 49.2Q349.8 50.6 352.6 51.1Q354.3 50.3 356.0 50.5M338.7 80.4Q340.2 81.7 342.1 81.8Q343.2 84.0 345.1 85.1Q346.7 85.5 348.4 85.0M317.6 62.7Q318.0 65.0 319.0 67.3Q320.1 67.1 321.6 68.5M333.1 46.5Q334.5 47.0 335.6 48.4Q337.2 47.6 338.8 47.7M297.1 79.0Q297.3 81.3 298.9 83.4Q299.1 85.4 299.3 87.6M312.1 61.2Q312.9 62.8 313.4 64.2Q315.1 64.4 316.9 65.3M340.8 64.0Q340.4 65.6 339.5 67.3Q337.0 67.6 335.1 69.7Q333.9 71.2 334.1 72.7M318.8 51.1Q317.6 52.0 316.2 51.6Q314.8 53.3 313.8 54.1Q312.0 55.0 310.1 57.3M323.0 65.3Q323.0 66.6 323.0 68.4Q321.3 70.0 321.9 72.8Q321.0 73.5 320.7 75.0M323.6 47.6Q323.5 49.1 321.5 50.9Q320.7 53.0 321.0 55.4M294.1 36.8Q292.2 37.1 290.8 39.2Q288.3 38.9 286.2 41.0M331.1 51.6Q330.7 52.9 330.4 54.1Q329.0 55.6 328.1 56.3M317.7 85.4Q319.2 86.1 319.8 87.5Q319.7 89.2 321.3 90.6Q322.9 91.9 324.9 92.5M341.5 51.6Q342.6 52.2 343.7 54.3Q346.2 53.8 348.7 54.4Q350.7 52.7 351.9 52.1M318.0 61.0Q318.5 62.7 317.0 64.6Q315.8 65.6 314.5 65.8M314.5 54.5Q314.1 55.7 314.7 57.2Q316.0 58.4 316.4 59.2Q317.7 60.4 318.5 60.9M323.5 82.6Q324.9 83.2 326.2 83.9Q327.4 84.0 329.8 82.7M333.7 56.3Q335.2 58.1 335.1 59.7Q336.8 61.2 337.8 61.8M322.7 55.4Q322.9 57.6 325.1 59.2Q327.2 59.4 329.0 60.5M304.2 86.8Q305.4 88.7 305.7 91.2Q306.2 92.6 306.3 94.0M322.9 70.2Q320.8 70.2 319.0 72.6Q318.3 74.4 317.8 75.9Q316.6 77.0 315.7 77.6M308.4 66.6Q309.9 68.6 309.0 71.2Q309.2 73.0 309.5 75.2Q309.6 76.6 310.8 79.0M328.1 67.6Q327.0 68.1 324.5 69.5Q323.1 70.5 322.4 72.6Q320.8 73.1 318.9 73.3M307.9 73.6Q305.9 75.6 305.2 76.7Q303.8 77.3 302.0 79.5M320.5 45.1Q319.7 46.3 318.1 46.4Q316.0 47.5 314.2 48.8Q312.7 48.4 310.8 48.5M292.4 46.9Q292.7 48.2 292.5 49.8Q290.7 52.1 290.9 54.2M326.1 54.3Q324.2 56.3 323.9 57.9Q322.2 59.7 320.4 59.9M316.7 48.7Q317.1 50.0 316.3 51.3Q314.5 53.7 314.0 55.7M315.6 61.3Q313.5 61.5 311.6 62.6Q310.3 61.9 309.0 61.7Q307.6 61.0 304.5 59.9M321.7 40.1Q322.7 41.7 323.2 43.0Q323.8 43.6 325.3 44.4M298.1 42.1Q297.5 43.5 296.4 44.3Q295.0 44.0 293.2 44.5M313.9 38.9Q313.1 41.2 313.8 43.7Q315.3 44.7 316.7 46.5Q316.5 47.7 316.9 49.5M340.9 84.3Q341.1 86.1 342.9 87.2Q342.4 88.8 343.1 90.3Q343.7 91.9 343.0 93.5M338.2 65.9Q338.9 67.6 340.3 68.8Q341.6 69.5 342.1 71.0M335.6 60.8Q336.5 62.1 336.5 63.3Q337.5 64.3 338.5 65.3Q337.5 67.4 338.2 69.8M314.3 47.3Q313.3 47.9 311.7 48.4Q310.2 49.4 308.7 49.2Q308.0 50.8 305.4 51.8M321.7 85.4Q321.8 87.4 322.9 89.3Q323.3 91.4 323.8 93.3Q324.8 94.7 324.5 95.9M341.9 76.6Q342.1 78.4 341.0 80.2Q340.6 81.7 338.4 82.9Q338.2 85.0 338.4 87.3M316.2 60.4Q317.4 61.9 317.4 63.3Q318.1 65.4 317.0 67.5Q316.2 68.9 316.0 70.3M300.7 67.1Q299.7 69.4 301.3 71.8Q300.5 73.5 300.9 75.4Q301.9 77.1 302.7 78.8M329.5 70.8Q330.8 71.6 331.2 73.1Q331.0 74.8 330.6 76.3Q329.6 77.9 329.6 79.4M336.7 76.8Q338.9 76.5 341.3 77.4Q342.7 78.4 344.6 79.8Q345.8 80.3 346.9 81.6M327.5 40.5Q328.2 42.4 328.9 44.1Q330.3 45.3 332.2 46.7M326.7 57.9Q325.8 59.1 324.0 59.3Q321.9 61.4 321.4 63.3Q322.0 65.0 321.7 66.7M329.9 75.4Q331.1 76.7 333.5 78.0Q332.5 80.3 334.1 82.6Q335.2 84.5 336.7 85.4M320.7 81.5Q319.9 82.5 318.8 83.3Q318.0 84.1 317.4 85.7M311.6 44.2Q313.5 46.3 314.3 47.7Q314.3 49.2 313.9 50.6M295.9 78.7Q296.8 79.4 298.8 81.0Q299.3 83.4 300.4 85.6Q299.1 87.0 299.1 88.2M334.5 41.3Q336.3 41.4 337.9 43.3Q340.1 43.6 342.1 45.0Q343.3 46.3 344.0 49.0M337.2 56.6Q337.3 58.2 336.3 59.8Q337.0 61.2 338.0 62.9Q339.3 64.5 339.3 65.9M309.1 60.6Q308.7 61.7 309.0 63.1Q309.7 65.3 310.9 67.2Q312.0 67.1 313.3 67.9M313.6 55.9Q314.5 57.5 314.5 59.2Q312.8 61.3 312.2 62.8Q310.6 64.8 311.1 67.6M318.9 86.4Q318.6 87.3 316.9 88.4Q315.4 88.1 313.7 88.7M297.1 68.0Q297.3 69.5 298.4 70.7Q299.1 72.2 298.2 73.9Q297.1 75.1 297.0 76.3M292.8 59.9Q293.0 61.6 293.1 63.4Q294.4 64.2 295.8 66.2M311.8 61.8Q310.2 63.6 310.8 66.5Q310.0 67.7 308.6 68.7M325.7 66.5Q326.8 67.3 327.1 68.7Q328.5 70.8 327.7 73.3Q327.9 74.7 330.2 77.0M296.5 85.3Q295.7 86.9 296.6 88.7Q294.8 89.6 293.7 91.4Q292.6 92.9 293.2 94.5M331.2 41.0Q331.0 43.0 331.3 45.6Q329.6 47.8 329.5 49.8Q330.4 52.0 331.2 53.8M344.5 58.2Q343.3 59.9 342.6 61.1Q340.4 61.7 338.4 62.2Q336.9 63.4 335.9 64.7M296.9 35.2Q295.7 36.1 295.6 37.7Q294.4 38.7 293.9 40.0M329.1 44.0Q330.6 45.6 330.8 46.9Q332.4 47.8 334.9 47.9M323.7 77.0Q322.9 78.0 322.4 79.2Q320.6 80.8 318.6 80.5Q317.2 79.8 314.6 79.5M337.0 75.2Q335.0 75.4 333.0 75.8Q332.0 75.3 330.8 74.4Q328.5 74.1 326.2 75.3M331.2 39.8Q329.7 41.4 329.4 42.6Q329.4 44.0 327.6 45.1Q326.1 45.5 324.5 45.9M305.4 62.8Q304.3 65.0 304.9 67.7Q303.9 68.6 302.5 69.2Q302.1 69.9 300.5 71.6M319.9 67.1Q319.4 67.7 317.4 70.2Q315.8 71.5 315.3 72.6M294.8 69.8Q296.3 71.4 297.7 72.0Q298.5 73.9 298.0 75.9M329.7 81.9Q329.7 83.5 330.6 85.6Q329.5 87.5 329.9 89.5M336.6 75.0Q336.6 76.6 335.5 78.5Q335.5 79.8 337.5 81.5Q338.9 82.8 340.7 83.0M297.8 61.8Q297.3 63.1 295.5 64.0Q296.0 66.4 294.2 68.7Q292.1 69.6 290.1 70.4M339.9 71.7Q339.5 73.3 338.1 74.4Q338.2 75.7 338.3 77.0Q339.5 79.4 339.6 81.7M319.8 40.3Q321.1 41.4 322.3 41.6Q323.4 42.8 323.9 44.1M317.8 40.6Q318.9 40.3 321.0 41.8Q322.2 41.6 323.6 41.8Q324.4 40.5 326.1 39.5M324.3 69.2Q325.8 69.1 327.8 70.0Q329.0 71.4 330.0 72.2Q331.9 72.5 333.9 71.7M342.2 71.1Q344.5 73.2 346.2 73.4Q347.2 74.3 349.1 75.1M293.8 67.8Q293.3 68.9 291.5 69.9Q290.1 71.5 287.5 72.9Q285.5 74.9 284.8 76.6M342.7 35.7Q342.2 37.7 343.2 39.8Q344.8 41.0 345.5 42.1M292.5 80.1Q291.3 80.6 290.1 81.8Q288.6 82.0 286.8 81.9Q285.3 82.6 283.2 82.3M332.5 85.2Q332.2 87.3 330.7 89.7Q330.3 91.6 332.2 93.5M298.9 64.6Q298.3 66.8 297.7 68.8Q298.4 70.5 299.2 71.9Q298.6 72.9 298.3 74.5M327.7 72.5Q328.6 73.5 328.3 75.2Q329.6 76.7 331.4 77.1M340.5 67.0Q341.6 68.7 341.3 70.3Q342.6 70.7 343.4 71.9M309.6 78.9Q310.7 80.2 310.9 81.1Q311.5 82.5 310.4 84.0Q310.0 86.0 311.6 87.8M306.1 66.5Q307.3 68.8 309.2 70.0Q311.2 70.7 313.4 72.6M325.9 51.1Q327.2 52.3 327.1 54.0Q327.4 56.2 327.5 58.8M338.8 35.1Q337.6 37.2 337.1 39.6Q336.8 41.2 336.9 43.0M325.7 79.9Q325.4 81.5 323.9 82.5Q322.3 82.5 320.9 83.8M292.9 43.9Q293.3 45.7 292.8 47.9Q292.0 48.2 290.9 49.6M316.4 84.7Q316.7 86.5 314.3 88.8Q314.3 90.9 314.7 93.1M334.0 75.8Q334.3 77.1 335.4 79.1Q334.3 81.1 335.4 83.1M320.6 74.9Q319.5 76.8 320.0 78.6Q320.1 80.0 320.2 81.5Q320.8 82.5 321.3 84.2M308.1 74.1Q306.4 74.9 305.1 76.1Q303.2 76.6 301.4 77.3M295.9 70.1Q294.8 72.2 294.8 74.3Q295.0 75.9 293.4 77.2Q292.0 78.3 290.8 78.7M306.8 68.9Q305.4 70.3 304.5 71.7Q304.5 73.2 304.3 75.1M297.2 63.0Q296.6 64.1 295.3 66.6Q294.2 67.3 293.3 69.1M293.5 68.7Q294.2 70.4 293.6 72.3Q294.4 74.6 295.0 76.8Q296.0 79.2 295.3 81.6M327.8 71.8Q327.1 73.6 327.1 75.3Q325.6 76.5 324.8 77.4Q323.5 78.9 322.4 80.5M321.3 84.4Q321.1 85.6 321.0 87.2Q318.8 87.8 317.5 90.6M296.7 59.0Q297.3 60.3 297.3 61.5Q295.5 63.1 294.9 64.9Q293.1 65.7 290.8 65.8M316.9 40.7Q316.3 42.2 316.6 43.6Q316.9 44.4 317.6 46.0Q319.2 46.6 319.8 48.7M341.3 48.7Q340.9 51.1 340.2 53.5Q340.4 54.5 341.1 56.1M292.9 39.4Q291.2 41.3 289.8 42.6Q288.2 44.8 286.8 46.2M329.7 45.3Q328.3 46.8 327.4 47.4Q327.7 49.2 326.6 51.1Q327.3 53.4 327.6 55.8M342.0 58.5Q340.6 58.5 339.0 59.5Q338.3 60.0 336.2 61.6Q334.7 61.1 333.2 61.7M307.2 78.1Q306.7 79.1 305.7 80.2Q304.0 81.4 302.4 82.2Q300.6 82.0 298.8 82.8M314.2 66.0Q316.2 66.0 318.0 67.4Q319.2 67.7 320.4 66.6Q321.6 66.2 322.6 65.3M293.5 74.9Q295.1 75.0 297.2 75.2Q298.0 73.9 300.0 72.5M303.1 75.0Q303.7 77.0 304.6 78.8Q305.6 81.1 306.9 82.8Q305.5 84.7 305.3 87.1M320.8 47.9Q322.5 49.2 324.2 50.0Q325.8 51.0 327.0 51.3Q328.1 52.8 328.5 54.3M314.2 67.9Q313.4 69.7 313.2 71.4Q311.8 72.5 310.5 73.7Q310.1 74.7 309.1 75.8M342.4 42.1Q341.6 42.2 339.5 43.6Q338.3 45.0 338.5 46.7M335.5 78.4Q335.8 79.8 335.5 81.4Q334.9 83.4 334.0 86.0M344.1 66.3Q344.7 68.0 343.5 69.7Q341.7 71.4 340.4 71.8Q338.6 70.8 336.9 71.6M309.5 46.9Q308.0 47.8 306.0 48.5Q304.4 49.8 303.0 50.0M304.7 41.2Q304.2 42.9 305.5 44.6Q304.7 46.2 305.3 47.8Q303.9 48.8 303.4 50.2M300.6 73.0Q301.9 73.8 302.7 75.4Q304.8 76.5 306.7 76.4Q308.1 75.6 309.6 75.8M296.6 60.8Q295.7 62.5 295.1 64.0Q294.5 65.5 294.4 67.2Q293.7 68.3 292.7 69.3M336.5 67.9Q338.2 69.7 339.8 70.2Q341.3 71.6 342.6 71.7Q344.1 72.4 345.6 72.4M341.8 39.1Q340.3 41.0 340.4 43.2Q339.9 44.7 338.5 46.1Q336.9 46.7 335.8 48.1M340.6 70.0Q340.9 71.3 341.1 72.8Q340.4 74.7 339.8 76.4Q341.1 78.6 342.0 80.4M296.7 57.5Q295.4 59.3 295.2 60.8Q295.1 62.2 294.3 63.5M296.6 83.8Q297.7 84.7 299.8 86.1Q301.4 87.0 302.8 87.0M309.3 59.3Q310.6 61.5 311.0 63.4Q312.5 64.4 315.2 65.0M334.0 67.6Q334.5 69.3 336.5 71.0Q338.3 72.5 340.7 72.9Q341.5 74.9 344.6 75.9M308.9 61.7Q309.4 63.9 309.7 66.0Q311.0 66.9 313.1 69.4Q315.1 70.3 317.2 69.5M293.4 77.1Q293.4 78.8 292.0 80.3Q291.3 81.2 288.9 82.5Q287.0 81.5 284.8 82.6M300.8 61.4Q300.3 63.2 301.3 65.1Q301.0 66.0 299.8 67.3M327.1 83.2Q326.9 85.1 327.9 86.8Q328.3 88.1 329.4 89.0M323.4 41.1Q325.0 43.1 325.4 44.8Q324.5 46.6 323.8 48.8M311.6 41.4Q311.0 43.5 312.4 45.8Q311.8 47.0 311.1 49.0M341.6 85.9Q341.3 87.4 340.8 88.8Q341.0 90.1 340.4 91.5M335.0 64.9Q334.3 67.3 333.3 69.5Q331.9 70.5 330.8 73.2Q329.4 75.6 329.9 77.9M292.5 66.3Q293.5 67.8 294.3 70.1Q295.2 71.3 296.8 72.3M308.3 37.9Q307.5 38.7 306.2 39.5Q305.8 41.8 303.8 43.4M315.4 37.6Q317.0 38.4 317.6 40.4Q319.1 42.0 319.8 43.7M344.5 86.0Q346.6 87.6 347.8 88.9Q348.7 91.1 349.7 92.9Q349.2 95.1 347.9 97.0M324.8 41.7Q324.4 44.1 325.5 46.5Q324.9 47.4 323.8 49.8M304.1 54.8Q304.6 56.0 305.3 57.8Q305.2 60.1 304.1 62.4M306.4 84.4Q305.7 85.6 304.1 85.9Q301.9 85.9 299.2 86.1M295.9 75.4Q296.2 77.3 295.0 79.2Q296.2 81.0 296.7 82.3M293.6 74.5Q295.0 76.0 295.6 77.5Q296.6 78.2 298.1 78.8M341.9 35.6Q343.8 37.2 344.7 38.5Q346.4 40.0 347.4 40.7M310.3 51.4Q310.9 53.5 310.9 55.8Q312.1 57.7 311.7 59.7M342.9 36.9Q344.2 38.6 343.9 40.3Q343.7 41.5 342.4 42.8Q341.8 43.7 340.4 44.9M303.9 36.4Q302.9 38.4 300.5 39.6Q298.7 40.6 297.1 41.8Q297.1 43.3 295.6 44.4M322.4 39.5Q322.3 41.4 322.9 44.4Q323.8 45.5 324.0 47.6Q324.9 48.5 325.8 49.4M303.5 83.1Q301.8 83.6 299.9 83.6Q299.5 84.2 298.0 85.7Q296.4 87.0 294.5 86.6M316.8 76.4Q316.7 78.5 317.8 80.5Q316.5 82.2 315.8 84.0M319.8 83.9Q321.8 84.6 323.3 85.8Q324.9 87.1 326.2 87.4M317.9 72.5Q316.9 73.5 316.3 74.7Q314.9 75.0 313.5 77.2Q311.8 76.9 309.9 77.4M334.5 86.9Q336.2 87.7 337.9 87.4Q340.3 87.3 342.4 88.8M338.3 69.1Q336.8 69.5 335.5 70.8Q334.1 71.7 333.6 73.4M343.7 39.9Q342.3 41.7 340.1 42.2Q339.4 43.8 338.9 45.1Q338.9 46.4 339.5 47.7M297.7 61.7Q298.8 63.7 298.0 65.8Q297.2 67.7 298.1 69.9Q296.8 70.8 295.6 72.7M341.6 79.4Q342.9 80.6 343.8 81.6Q344.8 82.9 345.3 83.9Q345.7 85.0 345.1 86.5M322.0 65.4Q320.8 67.4 321.5 69.5Q320.3 71.0 320.4 72.7M324.2 82.6Q323.1 83.7 323.7 85.5Q324.9 87.1 326.8 89.0M322.1 41.0Q323.8 40.8 326.2 42.7Q327.3 42.8 328.5 44.3Q330.2 45.0 332.0 45.1M341.1 52.4Q343.2 53.1 343.9 55.9Q345.2 57.2 346.9 58.1M302.9 46.2Q302.0 47.8 301.7 49.1Q302.7 50.2 302.4 51.6Q302.6 53.0 303.9 54.2M332.0 43.0Q332.4 44.5 332.2 46.0Q330.3 48.3 329.9 50.0M292.5 52.5Q294.2 54.4 294.1 56.2Q294.7 57.1 295.6 58.4M307.2 51.4Q305.1 52.5 303.2 52.8Q301.3 52.3 298.9 50.3M293.6 63.3Q292.4 63.6 290.1 66.2Q289.3 66.1 287.8 67.4M334.0 73.5Q332.3 73.8 330.2 75.4Q328.8 75.6 327.8 76.6M291.1 66.9Q290.3 69.0 290.9 71.2Q289.6 73.0 289.3 74.4Q287.1 73.9 285.0 75.5M313.0 85.0Q311.5 86.3 310.7 87.4Q308.6 87.0 306.5 88.0Q304.7 89.2 302.3 90.8M301.6 60.1Q300.4 61.8 300.8 63.6Q300.1 65.3 298.9 66.5Q297.3 68.0 294.4 68.5M299.3 39.5Q299.3 41.0 299.0 42.8Q299.8 44.5 301.5 46.3Q300.3 48.3 300.8 50.3M313.0 50.2Q311.1 51.7 310.1 54.2Q310.3 55.7 310.5 57.7M339.7 54.4Q341.2 54.2 342.5 55.5Q344.7 53.9 347.1 54.2M309.1 76.6Q311.3 78.0 311.9 80.5Q312.3 82.1 312.1 83.8M307.0 74.5Q306.8 76.1 307.6 77.8Q307.8 79.2 307.5 80.6M324.0 59.1Q323.0 60.8 324.2 63.0Q325.5 64.6 327.6 66.4Q329.1 67.6 331.2 68.1M324.3 39.4Q324.9 41.1 324.0 42.8Q324.4 44.7 325.6 46.5Q325.6 47.7 324.8 48.9M311.0 82.5Q309.7 83.8 309.1 84.7Q309.4 86.5 306.9 89.1M292.8 62.1Q291.9 64.0 290.5 65.5Q289.9 67.0 289.9 68.5M297.3 61.4Q296.0 62.7 294.6 62.7Q293.8 63.7 292.2 63.7M309.7 59.7Q310.9 60.3 312.0 60.5Q313.9 61.4 314.7 63.3M331.2 58.5Q332.9 58.7 334.2 60.9Q334.8 61.9 336.1 64.4Q336.4 66.4 336.4 69.4M303.1 68.9Q301.7 71.3 301.7 73.5Q301.5 74.4 298.8 77.2Q298.9 79.4 296.4 81.1"/>
</g>
<path d="M205.5 126 C204 112 216 99 236 97.8 C256 96.8 271 108 271 122 C271 130 267 135 261 137 C262 143 256 148 249 148 C244 150 240 146 238 142 C232 146 222 145 220 139 C212 139 206 134 205.5 126z" fill="url(#g3d)"/>
<g clip-path="url(#cb3)" fill="none" stroke="#383838" stroke-width="0.65" stroke-linecap="round" opacity="0.85" filter="url(#f03)">
<path d="M225.1 108.3Q224.9 106.9 225.5 105.6Q227.6 104.6 228.2 102.2M240.0 135.5Q241.4 133.4 244.0 133.2Q246.0 133.9 248.5 132.6M255.0 105.5Q254.8 106.6 256.0 108.2Q256.6 110.4 254.9 113.0Q254.4 115.3 253.5 117.5M220.4 141.0Q219.5 141.4 218.1 142.4Q217.4 143.7 217.3 145.8M241.8 121.8Q240.8 120.4 240.5 119.2Q239.2 119.1 238.0 118.6Q236.1 116.4 235.1 115.0M228.6 136.8Q226.8 136.9 224.7 135.7Q223.5 135.5 221.5 135.1M209.0 117.2Q207.5 118.0 205.6 120.7Q203.4 120.0 201.3 120.5M238.1 146.5Q237.0 145.5 235.7 144.7Q234.2 142.5 234.8 140.3M268.5 110.6Q267.7 111.9 265.5 112.8Q265.3 114.6 264.9 116.3M269.6 124.7Q268.9 126.7 270.2 128.8Q269.6 130.6 268.0 131.8M218.5 125.0Q220.4 123.4 220.5 121.1Q221.0 120.0 222.9 118.2M218.0 116.7Q216.2 117.3 214.4 118.1Q213.0 119.9 211.7 120.7Q210.0 121.7 208.1 120.7M241.4 129.7Q240.2 129.6 238.4 127.7Q238.0 126.2 236.0 125.1M265.2 100.9Q263.2 102.9 262.4 105.1Q260.7 105.8 260.0 107.6Q259.1 110.0 259.2 112.3M254.2 118.9Q255.0 116.6 256.0 114.6Q256.6 113.1 259.0 111.6Q259.0 109.6 260.6 107.8M221.6 111.6Q220.5 110.5 218.4 109.0Q216.4 107.5 214.8 106.9Q213.2 104.6 213.6 102.4M219.8 103.8Q218.8 103.7 217.3 102.8Q216.7 101.4 216.1 100.1Q215.0 98.8 213.9 96.9M223.0 122.3Q223.3 123.1 225.1 124.5Q225.6 125.1 227.8 127.1M221.6 130.0Q219.9 132.1 218.9 133.6Q219.7 135.7 219.5 137.7Q220.0 138.9 219.7 140.3M260.0 130.1Q259.5 128.3 260.2 126.6Q260.0 125.2 258.0 122.8M205.9 142.7Q207.7 143.9 209.6 144.0Q210.6 143.7 212.5 144.8Q214.2 144.1 216.0 144.5M261.8 112.7Q260.3 113.3 259.1 114.1Q256.7 114.1 254.9 116.5M206.9 111.0Q204.6 110.1 202.9 108.6Q201.4 106.4 200.0 105.1Q200.0 103.3 199.2 101.6M212.4 143.8Q212.1 142.2 212.9 139.9Q214.7 137.8 216.8 137.1M254.3 107.8Q253.2 106.6 252.5 105.3Q252.5 103.9 250.0 101.6Q248.1 100.3 246.9 99.5M207.5 127.9Q206.1 127.1 205.0 126.5Q203.3 127.8 201.7 127.6Q200.3 127.0 198.3 127.9M253.5 112.5Q252.4 110.6 252.5 108.7Q252.9 107.5 253.8 106.5Q254.4 104.4 254.2 102.1M251.5 142.7Q253.6 144.0 254.7 146.2Q254.7 147.7 255.8 149.2M252.9 135.7Q254.3 134.5 256.2 134.0Q258.3 134.8 260.0 135.5Q262.0 136.9 263.9 136.5M236.9 140.1Q236.8 142.5 237.1 144.9Q238.1 146.6 238.2 148.4Q239.3 148.8 240.0 150.4M248.8 101.9Q250.7 101.5 252.9 102.1Q254.3 100.4 255.5 99.5Q256.8 99.6 258.4 98.8M256.2 123.7Q258.0 125.7 258.6 127.6Q259.7 130.0 260.6 131.9Q260.2 133.0 259.4 135.2M243.3 124.6Q243.1 122.5 244.1 120.5Q243.5 118.6 241.4 117.2Q240.8 115.0 242.2 112.9M265.8 102.6Q267.9 101.1 269.3 100.0Q270.7 99.7 272.3 100.1M237.1 146.6Q237.9 146.6 239.5 147.3Q241.2 147.6 243.2 149.8M221.2 135.0Q220.7 136.7 221.7 138.3Q222.3 140.2 221.4 142.1Q220.0 143.8 218.5 144.3M246.2 105.6Q247.3 106.4 248.9 106.4Q250.4 106.2 251.8 106.2M218.3 103.9Q220.3 103.5 222.5 102.8Q224.1 102.2 225.9 100.3Q226.0 98.6 227.7 97.4M219.2 97.9Q217.9 99.9 218.0 101.8Q217.4 103.1 216.4 103.9Q215.2 105.4 214.8 108.0M238.6 132.0Q239.4 133.2 240.1 135.0Q242.0 136.8 242.9 138.9Q242.0 140.7 242.4 142.5M228.1 134.5Q226.9 133.6 224.6 133.1Q223.9 131.5 223.5 130.0Q223.7 128.8 224.0 127.3M238.5 107.9Q239.8 108.5 241.2 108.4Q243.0 106.8 244.5 106.8Q246.2 107.6 247.8 107.6M242.9 112.0Q244.4 114.2 243.3 116.9Q244.4 117.4 245.4 118.9Q247.5 120.4 250.2 119.7M265.7 130.2Q267.4 128.3 268.5 127.2Q268.9 126.3 269.4 124.8M229.8 99.4Q228.2 99.9 226.4 100.0Q225.2 98.1 222.2 97.7Q221.9 97.1 220.3 95.6M253.8 115.6Q255.2 115.3 256.6 114.2Q258.0 111.9 258.1 109.7Q258.6 108.3 260.5 107.6M269.5 129.3Q269.3 127.4 267.4 125.9Q267.6 124.7 267.2 123.1M244.6 142.0Q242.5 143.2 241.0 144.5Q239.4 144.4 237.7 145.2M257.9 125.1Q259.6 124.6 261.1 123.7Q263.5 123.7 265.9 124.5Q266.9 125.5 269.2 128.0M240.4 143.2Q240.0 141.7 240.3 139.9Q239.7 138.7 239.4 136.6M213.7 146.5Q211.7 147.1 209.7 145.6Q208.4 144.4 207.5 143.4M254.7 105.6Q256.1 106.2 257.4 105.8Q258.3 105.5 259.8 106.7M239.2 106.2Q237.9 107.3 236.0 107.4Q235.6 109.8 232.8 111.2M211.9 112.8Q212.5 111.5 213.2 109.6Q211.9 107.8 212.5 106.0M266.3 126.5Q265.4 128.0 265.0 130.0Q262.6 130.4 260.8 132.5Q258.9 133.8 256.4 133.5M260.6 119.7Q262.2 118.4 263.4 118.0Q264.8 117.9 266.5 118.2Q268.4 117.9 270.7 118.9M249.3 105.6Q250.9 107.1 251.5 108.4Q252.5 108.9 254.7 109.5Q256.0 109.4 257.1 110.4M245.9 105.0Q247.0 106.8 249.4 108.2Q249.4 109.8 249.8 111.7M264.3 135.9Q263.3 137.0 261.5 136.9Q259.7 136.6 257.9 135.7Q257.0 135.8 255.3 134.1M239.7 126.9Q240.5 128.0 242.1 128.1Q244.3 128.6 246.2 129.7M239.7 110.1Q237.4 109.6 235.4 108.2Q233.9 109.1 232.4 108.5M268.7 107.9Q268.1 106.7 268.7 105.2Q267.6 103.9 265.8 102.1Q265.1 99.9 266.4 97.7M245.7 147.8Q246.3 147.6 248.7 145.5Q250.3 146.0 252.4 145.4Q253.7 145.2 254.9 146.2M225.3 141.0Q226.8 142.6 228.1 142.9Q229.7 144.3 230.2 145.8Q231.5 145.2 233.2 146.1M239.6 97.9Q241.0 95.8 240.4 93.0Q241.3 92.5 242.9 91.3M208.8 147.2Q207.3 146.7 206.5 145.0Q205.1 143.5 203.5 143.2M218.4 111.1Q217.8 112.6 218.8 114.2Q218.2 115.2 216.6 117.0M211.3 147.3Q212.0 148.8 212.1 150.1Q213.5 151.6 213.8 152.7M224.7 111.1Q225.0 109.4 224.0 106.5Q222.7 105.2 221.6 102.6M270.0 108.0Q270.3 110.2 268.2 111.9Q267.2 113.7 268.5 116.1Q269.2 117.6 267.5 120.1M225.7 116.5Q227.4 116.8 229.6 114.7Q230.9 113.4 232.0 113.3M216.2 136.3Q216.3 135.3 217.8 134.1Q219.4 133.0 221.4 133.8Q222.5 132.5 224.0 131.7M263.0 149.0Q264.4 148.6 265.7 149.8Q266.8 149.2 268.1 148.6M250.1 142.1Q248.8 143.9 248.5 145.5Q249.1 147.2 249.2 148.8M235.5 143.0Q236.9 142.2 238.2 142.1Q240.2 140.7 241.9 140.6Q243.2 141.0 244.5 140.8M210.5 140.7Q212.1 140.0 213.5 138.4Q215.0 137.6 216.6 138.5M219.2 113.7Q219.2 112.2 216.9 110.3Q216.4 108.6 215.0 106.6M230.1 106.2Q228.6 104.8 227.8 104.1Q226.3 103.3 223.8 102.0Q221.5 103.5 219.1 102.4M237.5 141.4Q240.0 139.5 241.8 139.2Q243.0 138.6 243.6 136.9Q245.2 135.2 247.0 135.0M252.9 140.9Q251.0 142.4 249.0 143.7Q249.6 145.6 247.5 148.4M207.9 112.0Q206.8 112.6 205.1 114.7Q203.8 115.0 202.2 114.4Q201.7 112.9 199.7 111.6M247.4 119.3Q245.9 118.4 244.4 116.6Q243.6 115.6 243.4 113.6Q241.8 111.5 240.1 110.1M237.3 110.8Q235.4 113.1 234.3 114.3Q235.1 116.0 234.3 117.8Q233.2 118.7 231.2 121.0M238.7 103.7Q237.6 104.9 237.6 106.5Q236.3 108.1 236.0 109.7M267.4 145.1Q266.7 147.1 266.8 149.3Q267.4 150.7 266.5 152.4Q265.1 154.2 265.2 155.8M256.1 117.0Q254.8 119.4 253.5 121.0Q252.0 121.5 250.4 121.4M222.9 144.0Q222.5 144.1 220.8 145.6Q218.6 147.3 217.2 148.2Q215.9 150.5 216.9 152.8M248.6 97.6Q250.6 97.8 252.4 99.6Q254.4 100.8 256.4 101.8M219.5 104.6Q219.5 106.5 219.1 108.6Q219.8 109.8 220.8 111.3Q222.1 111.5 224.8 113.5M207.9 97.2Q206.1 96.4 204.1 96.7Q201.8 94.4 200.9 92.9M206.6 103.2Q207.2 104.3 207.3 105.6Q208.6 105.7 209.8 107.1M240.8 140.6Q240.6 143.0 238.7 145.1Q238.0 147.0 236.4 148.6Q236.4 149.8 233.8 152.6M241.8 144.6Q241.5 146.1 241.7 147.7Q241.4 150.1 241.4 152.6M242.2 110.1Q243.9 109.3 245.5 109.1Q247.2 110.1 248.4 111.1Q249.7 112.9 249.1 114.9M233.4 148.9Q234.9 148.6 237.3 147.4Q239.6 147.9 241.3 149.5M205.1 131.6Q206.9 131.0 208.6 129.0Q209.4 127.2 209.7 125.5Q209.6 123.7 211.7 121.1M252.4 143.3Q254.2 142.5 255.9 142.4Q257.8 142.9 259.6 143.4Q260.8 145.2 263.3 146.2M221.1 97.0Q222.4 97.1 224.3 97.5Q225.5 97.6 226.9 96.7M237.3 118.7Q237.2 118.0 235.4 116.1Q234.1 114.8 232.8 114.4M262.8 97.7Q260.8 100.2 260.5 102.1Q258.8 102.7 256.5 103.1Q254.9 105.1 252.9 105.6M263.7 114.2Q265.1 116.2 264.5 118.2Q266.3 119.7 267.4 120.9M249.2 107.9Q249.5 106.5 248.7 105.0Q249.8 102.9 248.5 100.8Q249.2 99.5 248.1 97.7M217.6 141.3Q218.8 142.7 221.3 142.9Q222.8 143.1 224.1 144.4M258.0 97.7Q256.4 98.7 254.4 98.5Q253.1 99.0 251.8 98.1M223.7 130.4Q224.9 131.2 225.2 132.4Q226.1 133.3 227.6 134.5M245.2 127.7Q244.4 126.0 245.6 123.8Q246.1 122.5 246.0 121.2M267.5 118.7Q266.9 117.3 265.3 116.9Q264.2 117.3 262.8 116.4Q261.2 116.0 259.1 116.4M250.7 140.6Q250.7 141.9 251.3 143.3Q250.9 145.1 251.1 147.5Q250.7 149.7 248.5 151.5M269.9 147.8Q270.4 145.8 269.0 143.2Q271.0 142.0 271.4 139.3M211.1 105.8Q211.6 105.4 213.7 103.1Q215.4 101.9 215.9 99.3M209.7 118.4Q207.9 118.4 205.5 119.6Q203.5 119.9 201.6 119.9M206.0 125.0Q204.5 123.7 202.7 122.6Q201.9 121.6 200.9 120.6M243.5 144.3Q243.6 143.2 244.5 141.7Q244.6 140.5 244.2 139.0Q246.1 136.6 247.2 135.3M215.3 127.3Q213.2 125.2 211.3 124.9Q209.9 124.5 208.4 125.6M250.9 141.7Q252.8 141.1 254.0 138.4Q253.6 137.2 254.1 135.8Q256.3 135.0 257.7 132.8M254.9 104.3Q253.8 103.3 252.5 102.0Q251.0 100.2 249.0 99.8M229.1 122.7Q226.8 124.5 224.5 124.0Q223.1 123.5 221.8 123.4Q219.9 124.8 218.4 125.5M240.6 117.6Q241.7 120.0 242.6 122.0Q242.9 124.0 243.4 126.1Q242.4 127.2 242.0 128.9M245.9 132.0Q244.6 133.3 241.5 134.3Q239.7 135.4 238.3 136.2M242.4 106.8Q242.3 104.9 241.9 102.9Q243.5 101.6 244.2 100.6M214.4 115.0Q213.7 113.3 215.0 111.6Q214.1 110.3 214.4 108.9M210.4 145.7Q209.1 147.4 208.8 148.8Q207.0 150.9 204.6 151.3Q202.9 151.6 201.1 151.4M210.9 125.2Q211.2 126.4 213.3 129.1Q214.4 130.3 214.5 132.6Q215.5 133.9 215.7 135.0M237.4 108.7Q237.1 109.8 235.7 112.3Q234.6 113.9 232.8 115.7Q230.9 117.1 229.5 117.6M256.8 113.5Q254.7 114.8 252.3 113.7Q250.7 112.0 249.6 111.1M268.1 126.6Q266.8 126.1 265.6 127.0Q263.4 128.6 261.3 128.0M241.2 148.4Q240.3 147.0 240.3 145.3Q242.3 143.7 242.2 140.8Q243.8 140.3 244.8 139.1M233.3 132.7Q234.8 135.0 234.4 137.2Q233.0 139.4 232.7 141.3M242.5 100.2Q240.9 98.5 240.6 97.1Q240.5 95.9 240.1 94.5M216.8 144.2Q218.1 145.9 218.0 147.4Q219.0 149.6 220.3 151.7M250.1 123.8Q248.0 123.8 246.0 124.3Q245.2 125.2 244.3 126.6Q242.6 126.9 240.5 127.6M214.8 101.7Q214.1 99.8 214.4 97.7Q213.0 95.5 212.2 93.2Q209.9 91.7 207.8 91.6M220.8 109.2Q222.3 109.6 224.0 109.1Q225.2 110.0 226.5 110.2Q228.0 111.0 230.2 110.4M232.1 135.7Q231.6 134.7 230.0 132.7Q229.3 130.7 227.0 129.9Q226.7 128.3 226.6 126.7M235.4 101.1Q233.4 103.1 233.1 105.2Q231.6 105.7 228.4 106.7M268.0 113.1Q265.7 114.7 263.7 114.5Q261.4 115.3 258.8 114.0M206.9 124.8Q206.5 126.1 206.6 127.5Q206.6 129.0 206.3 130.6Q207.7 131.9 207.8 133.9M252.5 102.3Q254.1 101.7 255.0 100.0Q256.6 99.0 257.9 98.3Q258.1 97.1 258.8 96.0M251.7 129.3Q250.4 129.1 248.7 129.2Q248.0 128.2 245.1 125.8Q243.7 125.7 242.4 125.7M240.3 105.3Q240.8 106.7 241.3 108.5Q242.6 110.9 242.6 113.2M263.7 122.4Q263.8 123.5 262.2 125.3Q263.2 127.2 263.7 128.7M228.6 141.7Q230.4 140.6 231.1 138.3Q232.1 138.0 233.6 137.1M247.0 143.4Q245.6 143.8 244.3 144.3Q243.6 145.1 241.2 146.5M264.5 105.3Q263.8 107.1 264.4 108.9Q264.9 111.2 262.9 113.5Q261.5 116.0 260.6 117.9M214.1 125.8Q214.9 126.9 216.0 127.8Q216.9 129.7 219.2 130.7Q220.2 132.3 220.2 133.9M254.6 136.6Q252.9 134.6 252.5 133.0Q252.1 131.2 252.7 129.4Q252.5 128.0 253.4 126.7M250.5 135.6Q249.6 134.3 248.7 133.4Q246.7 133.6 245.1 131.8M264.3 139.9Q265.6 140.0 267.1 139.3Q269.4 137.0 270.6 135.7Q269.1 133.5 270.0 131.2M238.2 118.4Q236.9 118.3 235.1 119.3Q233.1 119.8 231.3 118.0M213.7 133.3Q214.9 133.9 215.6 134.9Q216.5 137.0 215.8 139.3M241.2 105.2Q242.6 105.4 244.0 105.0Q246.3 105.2 248.5 103.5M233.3 101.5Q234.8 100.0 234.5 97.7Q236.3 97.1 238.2 95.4Q238.7 94.5 240.5 91.8M242.9 126.5Q242.3 128.6 243.0 130.9Q243.8 132.7 244.3 134.6Q245.5 136.5 245.1 138.9M213.3 124.0Q212.7 125.3 212.1 126.7Q211.5 128.8 208.6 130.1M255.4 114.5Q256.5 115.5 257.2 116.8Q259.1 116.5 261.0 117.8Q262.1 119.7 262.6 121.4M230.7 136.4Q229.3 137.2 228.4 138.6Q226.0 139.1 224.9 141.8M270.6 139.6Q272.1 141.0 273.0 141.4Q273.7 142.9 273.8 144.6M227.8 116.9Q229.7 116.7 231.1 114.3Q233.4 114.4 235.5 113.1M236.3 99.7Q236.6 97.7 235.4 95.4Q236.2 94.8 236.9 93.0M239.7 142.5Q237.7 143.3 236.2 145.1Q234.7 144.8 233.3 145.6Q231.9 146.1 230.4 144.9M269.1 130.7Q268.8 132.6 268.7 134.6Q269.9 136.4 270.7 137.8Q272.1 139.5 273.8 140.0M237.0 135.3Q237.9 135.0 240.4 133.4Q242.2 134.2 244.0 133.7Q245.1 135.1 246.7 135.6M261.8 128.9Q263.0 129.5 264.1 130.5Q265.6 129.6 267.1 130.3M224.6 99.3Q225.0 97.9 224.4 96.5Q224.9 94.9 224.3 92.9M206.3 131.7Q204.5 131.2 202.7 131.3Q200.6 130.3 198.5 130.9M244.5 111.1Q243.1 111.0 241.3 112.7Q239.8 112.7 237.0 114.4M249.5 132.0Q250.8 131.5 251.7 130.5Q253.6 130.7 255.6 131.1M241.2 114.2Q239.9 116.6 240.9 119.1Q242.4 121.0 242.7 122.6M254.9 116.6Q254.2 117.9 253.9 119.1Q255.4 120.9 255.5 123.5M239.9 110.0Q238.9 110.6 236.5 111.9Q235.2 113.9 235.1 115.6Q233.6 116.1 231.6 117.2M234.9 100.1Q234.5 98.3 236.0 96.4Q235.8 95.1 234.9 94.0M219.8 124.5Q221.3 122.8 222.1 121.7Q222.8 120.7 223.3 119.5M223.2 111.0Q223.7 109.6 223.0 108.1Q221.7 106.5 219.8 105.6Q218.1 103.5 215.7 103.1M257.5 111.2Q257.0 112.3 256.5 113.7Q257.9 115.8 257.8 117.8M244.9 97.4Q246.4 99.0 249.0 100.1Q249.4 101.7 249.8 103.9M226.3 115.9Q224.7 118.3 224.0 120.3Q223.0 121.9 222.3 123.0Q220.4 123.1 218.7 125.5M229.1 142.2Q229.5 144.4 227.9 146.8Q229.3 149.0 230.0 151.0Q230.9 152.7 232.3 153.7M209.3 118.8Q208.4 117.3 209.3 115.6Q209.8 113.3 209.8 110.9Q210.8 108.8 209.3 106.6M247.4 124.6Q247.9 126.0 249.8 127.2Q251.2 128.4 252.3 129.0M250.0 129.3Q252.0 127.1 252.5 125.6Q253.7 124.5 254.5 124.0Q255.8 123.6 257.1 122.5M218.8 137.6Q217.8 135.7 216.6 133.9Q215.7 132.3 216.1 130.3M256.1 122.8Q254.2 122.8 252.1 122.3Q250.9 123.1 248.8 124.7M221.1 131.9Q220.5 133.6 219.2 134.5Q218.3 135.5 216.7 136.9Q215.0 137.6 214.4 140.1M270.9 138.9Q268.9 137.3 266.8 136.4Q266.1 134.4 263.2 133.2M237.2 103.4Q235.3 103.2 233.4 103.0Q231.4 102.4 229.1 103.6Q227.9 104.8 226.7 105.2M265.3 113.1Q266.3 111.7 266.2 110.5Q267.3 109.0 268.8 108.6Q270.2 108.1 271.3 107.6M223.2 130.8Q222.8 129.4 223.3 127.9Q225.0 126.3 226.2 125.5M228.1 110.8Q227.6 109.3 225.5 107.6Q225.8 105.7 224.8 103.7Q223.8 102.9 222.7 101.7M224.6 97.0Q223.4 97.6 222.0 98.5Q221.7 100.0 221.4 101.4M250.9 103.7Q252.8 104.2 254.1 106.2Q255.9 107.3 257.6 108.4M210.3 146.3Q211.4 148.3 213.0 149.5Q214.9 149.3 216.9 149.7Q217.0 151.5 219.0 152.7M254.6 117.5Q252.2 115.9 251.2 114.1Q249.7 112.1 247.5 111.7M268.8 128.6Q270.6 128.2 272.0 127.1Q273.2 127.9 274.7 128.3M220.7 135.7Q219.1 133.9 218.8 132.4Q217.0 131.8 214.3 131.0Q213.0 129.5 210.7 129.2M226.2 130.3Q228.4 132.2 229.8 132.8Q231.1 133.0 232.5 132.9Q233.8 134.6 234.5 135.7M222.6 106.5Q224.3 105.7 225.8 105.4Q227.6 106.5 230.4 106.2M233.1 122.0Q233.7 124.1 235.4 126.0Q236.4 126.8 238.4 127.3Q239.4 129.2 239.4 131.2M240.1 118.9Q238.4 117.6 236.5 117.2Q235.0 117.9 233.5 117.9M263.5 131.1Q262.1 132.5 259.8 132.4Q259.7 133.7 258.4 134.7Q258.9 136.5 258.3 138.7M221.4 131.5Q221.7 130.2 222.4 129.0Q223.2 127.8 225.3 125.8M208.3 104.5Q210.1 104.7 212.2 104.8Q214.6 105.5 216.8 106.2M227.5 140.8Q227.3 142.2 227.2 143.9Q226.6 145.6 228.7 148.7M258.9 107.2Q259.3 105.9 259.3 104.6Q261.1 103.8 263.3 101.6Q263.3 99.8 263.7 97.8M241.2 129.2Q243.5 128.2 245.8 128.8Q246.9 127.6 247.9 126.9M213.2 121.7Q213.3 120.4 213.4 119.0Q212.2 117.0 211.0 115.5Q211.2 113.2 211.7 110.9M247.1 118.2Q245.0 120.4 244.5 122.1Q242.6 121.9 240.7 123.3M220.1 145.1Q219.1 146.6 218.5 147.6Q217.3 148.0 216.0 148.1M234.3 123.1Q233.5 125.0 234.4 126.9Q234.0 128.3 232.9 129.3Q231.6 130.8 231.2 131.9M230.7 118.1Q229.7 118.8 228.4 120.2Q227.4 120.9 225.1 122.0Q225.0 123.2 223.8 124.3M268.3 148.6Q268.0 146.7 266.7 145.2Q265.5 144.4 264.3 143.5Q263.3 142.8 261.2 139.9M208.5 98.6Q206.7 99.5 204.6 100.8Q202.6 102.1 199.9 101.3Q198.5 101.8 197.1 101.8M228.5 101.4Q227.9 103.5 226.2 105.9Q224.5 107.8 223.7 109.0Q222.6 109.9 221.2 109.8M256.1 128.3Q254.1 128.9 252.0 129.2Q250.4 130.3 247.8 130.4M237.6 118.6Q235.4 119.0 233.0 118.6Q232.3 119.8 231.1 120.4Q229.9 122.2 229.8 123.9M214.8 104.8Q215.7 103.4 216.6 102.2Q218.6 100.5 219.0 97.9Q220.9 96.8 222.9 95.9M222.2 120.5Q223.4 122.4 225.9 122.7Q227.8 124.4 229.1 125.1M219.0 103.6Q220.5 102.3 221.6 102.0Q223.4 101.2 224.6 99.7Q226.0 98.8 228.7 98.6M259.1 128.4Q257.8 126.9 257.3 125.9Q256.5 123.9 254.8 122.0M211.2 134.2Q213.1 133.0 214.7 131.3Q215.8 129.2 217.9 127.8M222.8 123.7Q223.1 126.2 222.8 128.6Q223.3 129.1 224.9 130.4M238.2 134.7Q238.5 133.6 239.8 131.1Q240.2 129.8 240.2 128.5Q239.6 126.8 240.5 124.4M222.4 127.1Q223.8 128.5 224.7 131.2Q224.0 132.6 224.6 134.2Q223.2 136.1 222.2 137.3M223.4 103.2Q225.1 103.8 226.9 102.9Q228.9 103.9 231.6 102.4M263.1 98.4Q263.6 97.4 264.7 96.4Q265.2 94.8 267.8 93.2Q270.0 93.3 272.3 93.7M225.1 146.8Q224.6 144.8 224.0 142.8Q222.6 141.1 221.5 140.2M224.8 145.8Q225.9 146.3 226.6 147.5Q226.9 149.0 226.9 150.7M253.3 103.3Q251.9 104.4 250.5 104.7Q248.4 105.9 246.0 104.9Q244.7 104.6 243.6 105.6M244.1 124.2Q244.4 122.0 242.5 119.5Q240.5 118.0 238.4 117.2Q238.4 115.4 237.2 113.4"/>
</g>
<path d="M352.5 126 C354 112 342 99 322 97.8 C302 96.8 287 108 287 122 C287 130 291 135 297 137 C296 143 302 148 309 148 C314 150 318 146 320 142 C326 146 336 145 338 139 C346 139 352 134 352.500 126z" fill="url(#g3d)"/>
<g clip-path="url(#cb4)" fill="none" stroke="#383838" stroke-width="0.65" stroke-linecap="round" opacity="0.85" filter="url(#f03)">
<path d="M332.0 116.9Q331.2 118.2 330.5 119.7Q329.4 120.4 328.5 121.3Q328.0 122.8 328.0 124.7M315.1 119.5Q316.2 119.1 317.7 118.6Q319.4 118.1 320.1 116.2M297.7 105.7Q295.6 104.8 294.6 102.0Q293.5 99.7 294.5 97.4M349.2 148.8Q350.8 149.8 352.7 149.5Q353.4 151.3 355.5 152.3Q354.5 154.5 355.6 157.1M309.4 122.7Q311.5 122.2 313.8 122.1Q315.0 121.3 315.4 120.2Q315.2 119.0 315.6 117.7M308.2 97.3Q307.0 99.0 307.0 101.7Q307.5 103.9 307.2 106.6M301.6 139.1Q303.5 137.6 305.6 136.1Q306.1 134.8 306.5 133.6Q307.1 132.0 306.5 130.3M294.8 135.7Q293.9 133.6 294.7 131.0Q296.1 130.5 296.7 128.6M312.5 136.9Q314.5 137.9 315.8 139.3Q318.2 138.3 320.6 138.2M301.9 137.8Q300.6 138.2 299.3 138.3Q297.8 139.3 297.1 140.8M302.1 104.6Q300.0 103.7 298.9 101.8Q298.4 101.1 296.5 99.8M317.1 146.4Q314.9 147.9 313.2 148.4Q311.2 148.8 309.8 150.2M331.7 117.4Q333.6 116.4 334.8 113.7Q336.0 112.5 336.9 111.9Q339.2 112.1 341.5 111.2M290.2 126.9Q289.7 125.0 290.4 123.1Q291.5 122.2 293.1 121.0M347.1 130.7Q348.5 129.5 349.0 128.1Q350.4 126.1 349.7 123.6M293.2 120.0Q294.6 121.0 296.0 120.7Q297.7 121.8 299.8 120.9Q301.6 120.6 303.5 120.8M317.2 133.2Q318.5 134.7 321.1 136.2Q322.0 138.2 322.9 140.6M330.1 141.2Q328.7 139.4 326.9 138.4Q325.7 137.5 324.8 136.8Q323.2 137.4 321.5 136.7M305.6 120.4Q306.7 118.7 306.6 117.1Q307.4 114.9 309.3 113.7M307.4 114.1Q306.4 112.6 304.9 112.3Q304.0 110.9 303.3 109.5M292.9 130.6Q291.6 131.7 289.9 131.4Q288.0 131.1 285.9 133.3M335.4 101.6Q333.9 102.3 331.0 103.2Q329.7 104.0 327.8 104.5Q327.3 105.8 325.8 108.3M303.1 108.0Q302.5 110.1 302.0 112.5Q303.0 114.3 302.2 116.4Q303.3 118.2 302.8 120.0M299.9 148.2Q300.9 148.9 302.7 149.1Q305.0 148.4 306.9 146.4Q306.9 144.7 308.6 142.6M343.6 125.9Q341.6 124.0 340.3 123.5Q340.1 121.9 337.9 120.7M339.4 117.8Q341.1 118.5 342.9 119.3Q343.5 120.2 344.7 121.2Q346.7 123.0 347.4 124.9M349.8 109.7Q347.6 110.3 345.2 109.8Q343.3 108.6 340.4 109.6Q339.8 109.2 337.7 107.1M302.5 118.6Q302.3 119.7 301.1 120.8Q301.0 122.7 299.2 125.0M348.2 98.3Q346.2 99.0 343.8 97.9Q343.0 96.8 341.5 96.6M336.2 128.3Q334.8 130.5 333.8 132.2Q332.6 134.6 330.8 136.1Q330.1 137.8 331.4 139.7M332.9 109.1Q330.9 110.7 328.9 111.3Q326.7 110.9 324.5 110.3M316.4 122.2Q317.3 123.6 320.0 125.0Q321.7 126.2 322.8 127.5Q324.2 128.4 325.7 128.1M295.6 102.5Q294.2 103.8 293.3 104.5Q292.1 104.2 290.7 104.4Q288.9 105.2 286.7 104.2M334.2 109.2Q336.0 107.7 337.5 107.8Q340.0 108.1 342.2 109.4Q342.4 111.0 343.5 112.3M287.3 121.9Q288.8 123.9 288.3 125.9Q287.7 128.3 289.8 130.5Q289.5 132.2 289.6 133.9M336.0 147.7Q334.6 146.7 333.3 145.1Q332.5 144.5 331.1 143.4M320.9 111.2Q320.9 109.5 322.3 108.1Q323.5 107.7 324.8 107.3Q325.6 106.7 327.8 105.0M293.7 97.5Q294.0 95.5 292.1 93.8Q291.2 92.9 290.6 91.1Q289.2 91.2 287.8 89.6M337.5 118.1Q336.2 119.0 335.3 121.0Q335.4 122.6 335.4 124.4M294.2 130.5Q295.8 130.4 297.2 129.1Q298.2 129.2 299.8 128.4Q301.1 127.9 303.5 126.4M320.9 102.7Q322.5 103.4 323.4 105.1Q324.6 106.1 325.9 107.0M332.4 138.8Q333.0 139.7 335.0 142.0Q336.3 143.5 336.6 144.5M346.9 102.7Q348.0 104.2 349.2 105.7Q350.5 106.2 353.6 107.8Q354.5 109.3 354.5 110.7M303.7 109.9Q305.4 112.3 306.8 113.8Q308.2 115.9 307.9 118.2M326.0 102.4Q325.4 103.6 324.2 104.3Q324.8 105.8 323.7 107.4Q322.5 109.5 323.5 111.7M330.4 143.6Q331.4 142.6 332.8 142.2Q334.1 140.3 334.5 138.8Q335.3 137.2 336.1 136.0M347.7 143.5Q346.8 141.8 347.9 139.9Q346.2 137.5 346.8 135.1Q344.8 133.3 344.0 132.1M348.0 100.2Q348.8 98.8 351.2 98.4Q351.1 96.8 352.1 95.2M291.2 106.6Q292.8 106.1 294.7 106.8Q296.2 105.6 297.6 105.4M316.1 116.8Q318.0 116.0 319.8 114.2Q320.8 111.9 321.8 110.0M308.8 146.3Q310.9 148.6 311.4 150.5Q312.3 152.1 314.0 152.7M325.5 124.2Q326.7 125.6 326.7 126.8Q328.8 127.9 330.8 129.0M305.2 125.9Q304.6 126.9 305.6 128.7Q307.1 129.7 308.2 130.2M311.9 126.9Q312.1 128.4 310.8 130.9Q309.7 132.0 307.9 132.6Q306.6 133.6 305.8 135.4M346.4 129.0Q345.5 127.9 345.5 126.2Q344.6 124.7 342.7 123.1Q341.8 121.6 340.2 119.8M311.0 124.1Q308.8 123.2 306.6 123.3Q304.1 123.2 301.6 123.5M340.2 124.0Q339.5 122.9 340.4 121.3Q339.1 119.7 338.0 119.0Q336.6 118.1 335.2 117.6M344.8 132.8Q344.8 134.2 345.8 135.4Q345.7 137.6 344.6 140.1Q342.8 140.9 341.4 143.4M330.6 116.9Q331.0 115.6 332.7 115.1Q335.1 114.4 337.4 113.2Q339.1 113.6 340.7 112.4M313.4 108.1Q312.6 106.3 311.2 104.9Q309.3 104.2 307.0 102.6M294.0 107.7Q295.7 108.3 297.4 108.1Q298.8 106.8 300.3 106.8Q301.5 105.8 301.9 104.4M296.4 123.7Q297.9 125.2 298.7 125.8Q299.8 125.5 301.1 126.6Q302.2 125.8 303.9 125.4M309.1 113.0Q308.7 111.5 309.4 109.3Q310.8 108.0 312.0 106.7Q311.2 105.0 312.3 102.6M298.1 98.9Q297.3 100.2 296.5 101.2Q294.8 103.4 295.1 105.7M330.3 131.6Q328.1 131.1 325.7 130.5Q324.7 130.4 322.7 131.8M317.1 126.0Q317.9 125.4 319.4 124.9Q321.7 123.3 324.2 123.6Q325.5 122.7 326.3 121.7M303.5 136.3Q301.8 136.8 300.7 138.7Q299.8 140.0 299.1 142.1M306.9 107.7Q305.9 109.1 304.7 110.0Q304.8 111.1 304.5 112.7M324.9 141.4Q325.7 142.5 327.3 142.7Q328.5 144.1 329.2 145.5Q330.7 147.0 331.3 148.2M320.3 124.2Q320.2 125.5 319.5 127.1Q320.9 128.5 320.7 130.7M348.7 124.0Q350.6 124.3 352.2 122.7Q353.5 122.0 354.7 122.2M322.4 129.3Q324.6 128.4 327.0 128.3Q328.3 127.1 329.8 125.2Q330.9 124.1 331.1 122.5M337.9 133.8Q337.3 131.4 338.1 129.0Q339.7 127.0 341.2 126.4M313.0 103.8Q310.9 104.8 308.2 103.9Q306.2 103.4 304.9 101.2M327.5 142.3Q326.5 143.6 326.0 144.6Q327.0 146.3 326.0 148.3Q326.7 150.6 329.8 151.6M326.3 148.3Q328.3 148.1 330.0 145.8Q331.3 146.1 332.9 145.8Q333.7 144.5 335.6 143.3M351.6 106.3Q349.2 104.6 346.8 105.0Q345.1 105.6 343.4 104.6M313.7 113.4Q314.5 115.3 314.0 117.4Q315.5 118.3 316.4 120.6Q315.7 122.0 316.6 123.5M331.5 148.2Q332.2 150.0 332.8 151.8Q333.1 154.0 332.8 156.2Q331.7 157.8 330.5 159.2M299.1 128.6Q299.4 130.4 298.1 132.6Q297.1 132.9 294.7 135.5Q293.3 135.5 291.9 135.3M292.6 125.2Q291.1 124.2 290.2 122.2Q290.8 120.4 289.8 118.1M328.9 107.0Q330.8 107.5 332.6 107.4Q334.1 108.7 335.1 109.2Q336.9 110.9 337.0 112.8M311.0 98.1Q308.6 97.5 306.4 99.6Q304.0 99.0 301.6 98.8M297.3 112.9Q296.9 114.2 296.8 116.4Q298.4 118.3 298.1 120.1Q299.8 121.0 301.3 121.7M303.5 106.4Q302.2 105.1 301.7 103.4Q299.9 103.6 297.2 101.9Q296.5 100.1 295.4 98.6M336.4 108.1Q335.4 108.5 333.7 109.5Q331.3 109.8 329.8 112.5M351.7 143.1Q351.4 141.3 352.6 139.6Q352.2 137.7 352.0 135.8M337.1 144.3Q337.9 143.7 338.5 142.1Q340.3 141.3 342.3 140.5Q343.9 138.8 344.5 137.6M305.6 139.3Q304.8 140.7 305.3 142.1Q304.2 143.2 303.1 143.5M351.1 143.7Q351.4 146.0 351.8 148.3Q352.3 149.9 355.2 151.9Q357.4 152.9 358.4 155.0M290.8 112.9Q289.0 110.5 288.6 108.6Q287.4 108.2 286.0 107.5M342.9 100.1Q344.0 100.4 345.7 99.8Q346.4 99.1 348.5 98.2M331.7 103.1Q332.9 104.2 333.6 105.1Q335.9 104.7 338.3 104.7Q339.3 103.3 340.7 102.2M315.8 104.4Q317.9 105.8 319.8 106.1Q321.8 108.4 322.2 110.3M315.9 108.2Q314.0 107.1 312.5 104.6Q310.3 104.4 308.9 102.2M291.7 101.0Q293.2 100.9 296.1 98.9Q297.3 97.0 298.6 95.8M299.9 148.3Q301.4 147.9 302.6 146.9Q304.3 147.3 306.2 146.9Q308.2 148.2 310.7 148.4M352.3 114.0Q354.6 113.6 357.3 113.9Q358.5 115.6 360.0 116.4M288.5 97.4Q289.4 98.4 288.9 100.0Q290.6 101.4 291.9 103.8M299.1 119.9Q298.6 121.4 299.4 123.8Q300.1 125.1 301.3 125.8M327.4 98.4Q329.6 97.7 331.8 99.5Q333.3 101.3 334.8 102.1M325.4 124.0Q324.0 124.6 323.0 125.9Q321.1 126.2 319.1 125.9Q318.2 125.0 316.1 124.7M352.8 118.8Q352.5 117.4 351.1 116.6Q349.5 115.3 348.5 114.5Q346.8 113.0 345.6 112.6M289.5 145.1Q290.9 145.6 292.4 145.5Q294.4 146.0 296.9 145.7Q298.1 144.9 299.5 145.1M295.5 118.5Q293.9 117.9 292.2 119.2Q290.4 118.3 288.8 118.3M328.9 147.5Q329.8 146.2 330.1 145.1Q331.3 145.0 333.1 144.1M314.2 141.4Q315.7 143.1 316.1 144.8Q318.2 145.7 319.4 147.9M308.5 106.1Q308.4 104.8 306.7 103.2Q306.6 101.1 305.1 99.1Q304.1 97.6 303.3 96.8M352.5 142.6Q353.0 141.6 354.3 140.1Q354.2 138.3 353.2 135.5M332.7 147.5Q331.3 148.4 329.5 147.6Q328.3 149.1 327.2 149.6Q325.2 148.6 323.3 149.7M306.6 118.9Q307.8 118.4 309.7 119.8Q310.8 118.3 313.2 118.2Q314.9 119.5 316.3 119.7M298.5 141.0Q297.4 141.2 295.1 142.3Q294.9 144.8 293.3 147.0Q291.2 149.2 291.1 151.4M290.3 99.2Q289.6 100.9 290.6 102.6Q291.3 104.1 292.8 104.6Q294.2 105.0 295.6 104.2M296.9 116.9Q295.8 115.4 293.3 115.3Q290.9 115.6 288.4 114.9M315.9 141.0Q317.3 142.7 318.4 143.7Q319.8 145.7 319.2 147.7Q319.3 148.8 321.1 150.8M350.1 117.5Q350.5 116.0 350.9 114.0Q348.9 112.7 348.2 110.1M323.2 104.2Q321.0 102.9 319.8 101.1Q318.6 100.5 316.5 100.2M292.9 129.2Q291.3 130.4 288.4 130.9Q287.7 132.0 285.7 132.8Q283.3 132.1 280.9 133.7M299.8 100.0Q298.2 99.9 296.3 101.0Q294.5 101.7 292.1 99.8Q289.9 99.6 288.3 97.1M341.9 143.6Q344.0 144.9 345.8 145.4Q346.5 146.0 347.4 147.5Q346.9 149.2 348.2 151.1M335.6 131.7Q336.5 130.0 339.0 129.6Q339.8 127.9 341.4 125.4Q340.8 123.9 341.8 122.2M317.1 123.1Q317.4 121.7 317.4 120.4Q319.0 119.2 319.9 116.8Q319.9 115.3 321.5 114.0M335.7 98.6Q335.3 100.9 336.0 103.5Q336.6 105.2 338.1 107.5Q338.7 109.6 340.0 111.3M314.0 145.5Q314.2 143.7 314.4 141.5Q312.9 139.9 311.3 137.9Q309.9 137.6 308.5 137.1M330.1 104.2Q329.1 106.1 327.9 107.6Q327.7 108.7 326.1 111.1Q326.0 112.4 326.3 113.9M309.3 129.3Q309.1 127.8 308.8 125.3Q308.9 123.9 310.9 122.3Q312.2 122.1 313.5 121.7M287.0 110.3Q287.9 111.6 288.2 113.0Q290.5 114.5 292.7 114.2Q295.1 114.7 297.5 113.1M349.3 119.3Q348.2 117.7 347.4 116.8Q346.1 116.6 344.7 116.4Q343.3 115.8 341.5 115.4M318.5 115.1Q316.9 115.2 315.5 113.7Q313.1 112.9 310.9 112.5M319.0 122.9Q318.5 120.5 317.7 118.2Q318.3 116.2 318.2 114.2M324.6 126.5Q322.5 128.3 320.5 129.1Q320.7 130.8 318.8 133.0M288.0 114.6Q290.3 115.2 292.5 115.6Q293.7 116.2 294.7 117.0Q296.6 116.6 299.1 116.7M299.6 133.8Q300.0 132.0 298.4 130.0Q299.1 129.1 300.0 127.2M293.0 120.1Q292.0 119.4 290.1 118.4Q288.7 118.9 287.0 117.7Q285.7 116.3 284.5 115.7M339.9 137.0Q341.5 137.5 343.5 139.8Q344.7 140.4 346.3 143.1M325.0 142.4Q323.4 142.5 322.2 144.2Q321.8 144.6 320.3 145.8M288.2 119.1Q289.5 118.4 290.7 118.3Q291.9 116.7 294.8 115.8M348.3 122.2Q346.3 122.8 343.8 122.3Q342.5 123.1 341.6 124.4M319.6 130.5Q320.5 132.5 320.5 134.5Q320.7 136.6 320.9 138.9Q319.8 139.9 320.0 141.8M292.9 113.5Q293.2 112.4 292.1 110.7Q291.4 109.3 290.0 107.3M293.4 127.1Q294.8 126.7 296.1 126.1Q298.5 125.4 300.4 124.1Q302.0 125.4 303.5 125.2M307.8 148.3Q308.8 149.5 310.9 151.3Q311.8 152.1 312.5 153.6Q313.2 155.0 313.9 157.2M295.3 100.1Q295.7 102.1 298.0 103.3Q298.6 105.2 300.2 106.7Q300.0 108.8 301.2 111.0M336.2 112.9Q336.3 114.2 336.0 115.6Q335.2 117.0 334.3 117.8Q334.3 119.2 334.0 121.3M305.9 136.6Q304.8 137.6 304.1 138.3Q304.7 140.6 302.8 142.6M316.9 113.3Q317.6 111.4 319.1 110.3Q319.5 109.5 321.6 106.7M344.0 143.2Q345.0 143.9 346.6 144.8Q348.2 145.4 349.1 147.3M297.6 117.2Q295.4 115.1 293.3 115.0Q291.8 115.1 290.0 113.3M321.5 114.1Q321.7 112.8 320.9 110.8Q320.7 109.5 321.3 107.9Q322.8 106.2 323.5 105.1M327.0 126.2Q328.5 125.1 330.4 125.7Q331.9 124.9 333.2 125.0M287.3 100.0Q288.6 99.9 290.8 100.5Q291.9 101.3 293.8 101.6M314.7 127.4Q314.4 129.0 313.8 131.2Q314.2 133.0 314.3 135.8M342.8 109.7Q343.7 107.9 342.4 105.5Q341.5 104.2 340.8 102.9M310.2 125.8Q310.9 124.0 311.4 122.2Q310.8 120.5 310.9 118.8Q311.9 117.1 313.4 116.2M296.2 109.9Q295.0 108.4 295.2 107.0Q294.1 104.9 292.2 103.1Q290.6 101.6 289.3 99.2M339.9 130.7Q341.5 132.7 342.5 133.9Q343.2 135.9 345.4 137.9M308.0 110.8Q306.1 112.7 304.2 113.8Q302.0 113.9 300.2 115.7M287.8 116.1Q289.2 114.1 290.5 113.0Q289.9 111.3 290.0 109.2Q290.3 107.8 290.3 106.3M306.4 116.9Q305.6 114.6 307.0 112.1Q307.4 110.2 307.7 108.2M322.8 135.8Q323.2 134.6 324.8 134.0Q324.4 132.5 325.6 131.1M292.7 100.0Q294.1 100.4 294.9 101.8Q296.5 103.9 296.7 106.2M343.9 132.4Q343.0 133.2 341.6 133.7Q341.9 135.9 340.5 138.2M335.7 137.5Q336.9 136.9 338.2 136.9Q339.6 137.9 342.5 138.7Q343.5 140.0 345.9 141.8M329.4 114.0Q329.2 113.2 327.6 111.1Q325.8 109.6 324.6 108.6Q324.3 107.3 323.2 105.5M315.4 139.2Q317.9 138.8 320.3 138.0Q321.3 135.6 323.2 134.0Q324.5 134.4 325.8 133.6M337.7 114.5Q336.8 115.1 335.9 116.3Q336.1 118.6 334.1 120.7M297.7 130.8Q299.4 129.0 300.3 127.7Q301.5 126.9 304.0 125.6M306.2 117.7Q308.4 116.6 310.8 118.1Q311.9 119.6 313.7 121.7Q315.4 121.1 317.7 121.9M296.2 112.0Q298.3 112.3 300.4 112.2Q301.9 111.6 304.0 112.6Q305.0 114.3 306.9 114.9M300.0 100.1Q300.4 98.2 301.8 96.0Q304.1 94.2 306.3 94.6M294.4 138.0Q295.5 136.0 296.6 133.9Q298.6 132.5 300.6 131.1Q301.6 130.9 303.6 129.4M300.0 102.3Q302.3 104.0 304.3 104.1Q305.9 105.3 307.3 106.0Q306.7 107.6 308.3 110.2M325.7 97.1Q323.3 98.9 321.5 99.5Q319.6 98.2 317.8 98.3M314.7 131.1Q314.1 132.5 314.0 133.8Q313.7 135.4 312.8 136.7Q310.5 138.7 309.3 139.9M294.9 147.6Q296.5 148.4 298.0 148.5Q299.9 147.9 302.0 149.3Q303.3 149.3 305.9 148.3M303.4 116.0Q301.0 117.1 299.0 117.9Q298.2 117.0 296.2 116.6M315.9 146.2Q316.9 144.9 316.8 143.6Q317.9 141.9 318.4 140.6Q320.4 139.3 321.8 138.4M329.0 112.9Q331.0 114.7 331.9 115.9Q333.6 115.7 336.7 117.0Q338.6 117.2 340.2 118.4M291.7 124.9Q292.8 123.1 293.7 121.9Q295.0 121.4 296.3 121.0M341.2 120.2Q339.6 121.2 338.4 121.7Q337.1 122.1 335.9 122.0Q333.9 121.0 331.8 120.5M306.0 103.8Q304.9 101.6 304.8 99.0Q305.2 96.9 304.7 94.8M319.8 141.2Q321.9 141.6 324.6 140.6Q325.4 139.4 326.4 138.2M352.7 132.1Q353.9 130.3 354.3 128.9Q353.6 127.1 354.5 124.7M316.1 142.2Q314.6 143.1 312.8 143.0Q311.8 141.9 310.2 141.2M337.7 116.7Q339.2 115.1 340.0 114.0Q342.0 113.6 343.7 112.4Q345.3 110.0 346.8 108.7M311.1 142.7Q311.6 144.1 311.3 145.6Q311.3 147.6 312.0 149.6M294.4 138.6Q295.1 138.6 296.8 140.2Q297.0 142.0 298.3 143.8M346.9 148.0Q349.0 149.4 349.6 151.7Q350.3 153.2 350.6 154.6M321.1 125.0Q320.2 124.7 317.8 123.4Q316.0 124.0 314.2 124.6M299.4 143.2Q298.4 141.7 297.9 140.5Q298.6 139.2 298.4 137.9M336.1 114.2Q337.5 114.5 339.5 116.2Q341.7 116.6 343.8 114.8Q345.0 113.1 347.6 111.7M336.9 132.8Q336.7 134.2 337.3 135.6Q338.6 137.0 338.7 138.2Q340.7 139.9 342.3 140.7M318.9 128.5Q319.6 129.3 320.0 131.0Q321.3 131.8 322.6 132.1M344.4 132.2Q346.1 131.6 348.1 130.6Q349.8 130.4 351.5 131.0Q353.7 130.6 355.9 131.7M323.7 121.0Q325.4 119.9 327.1 120.2Q327.1 118.4 329.8 116.0Q331.1 115.1 332.4 115.2M330.9 142.6Q331.5 140.9 332.7 139.1Q333.0 137.5 332.5 135.8Q332.1 134.4 332.1 133.1M309.9 97.0Q311.2 94.9 311.0 93.0Q311.1 91.6 310.4 90.3M347.3 126.9Q348.0 125.6 346.9 123.6Q347.6 122.8 349.2 121.2M312.9 102.9Q311.9 102.8 310.2 103.7Q309.9 105.8 307.3 107.5Q306.7 109.2 305.1 111.1M341.1 116.8Q340.8 118.2 342.1 119.5Q342.8 121.0 344.0 122.1Q344.9 123.2 345.9 123.7M307.3 128.0Q308.2 128.8 310.6 129.9Q312.8 129.1 315.3 129.3M300.2 124.7Q298.7 125.5 298.3 127.2Q296.6 127.3 294.0 129.4M343.2 140.7Q345.0 139.3 345.9 138.2Q347.7 136.8 350.2 137.0Q352.2 138.4 353.9 138.8M319.7 133.0Q318.6 132.4 317.1 132.0Q315.4 132.8 314.0 133.4M298.1 122.8Q299.4 124.9 299.4 126.9Q299.6 128.1 300.9 129.2M291.2 135.8Q292.4 133.8 292.8 131.1Q292.8 129.4 293.5 126.9M290.2 145.4Q288.5 146.4 287.2 148.2Q285.4 148.1 283.9 149.5M312.8 131.2Q312.1 130.1 312.1 128.1Q312.2 126.3 312.2 124.4M325.7 108.6Q325.1 110.0 323.8 112.4Q322.2 114.4 321.7 117.0Q321.2 119.0 322.7 121.0M328.3 120.3Q328.7 118.7 329.5 117.5Q331.0 117.2 332.2 115.3Q334.6 113.7 336.8 113.6M326.0 111.7Q324.6 111.9 322.6 113.5Q321.1 113.4 319.3 113.4Q317.0 113.4 314.5 112.5M315.7 103.4Q314.3 102.3 312.3 102.1Q310.6 102.1 308.4 101.4M337.8 142.4Q336.2 144.5 336.6 146.4Q335.2 148.5 335.0 150.3M329.7 104.2Q330.7 103.0 332.2 101.1Q334.2 99.6 336.5 98.6Q337.5 98.1 339.8 96.8M314.2 130.1Q314.3 128.7 315.0 127.4Q313.7 125.5 314.1 123.7M306.0 117.8Q307.7 119.1 309.6 118.7Q310.9 117.9 312.5 118.6Q313.7 119.7 315.6 119.7M295.2 119.8Q294.4 118.5 293.2 116.6Q293.4 115.3 293.6 113.2M302.7 137.9Q304.5 137.8 306.7 139.6Q308.6 139.1 310.4 138.4M308.2 110.0Q307.6 108.1 306.7 106.5Q305.7 105.2 304.5 103.8Q303.9 102.2 303.2 100.5M352.5 105.8Q351.2 105.7 350.0 106.2Q349.3 107.3 347.5 109.9M350.2 124.4Q350.2 123.0 349.0 121.5Q349.3 119.9 350.1 117.4Q349.4 115.7 350.8 113.9M292.3 128.0Q293.2 126.7 293.7 125.5Q295.6 123.8 295.7 121.6M296.5 135.3Q295.4 134.4 293.4 132.3Q292.7 131.5 290.6 129.2M348.2 144.3Q346.6 146.2 346.8 148.2Q346.4 149.6 345.1 150.7M350.0 109.4Q352.2 109.1 353.5 106.4Q355.0 104.9 355.6 101.9M339.0 123.0Q341.1 124.1 343.2 123.5Q345.2 123.3 347.2 122.5M338.5 127.0Q340.7 128.2 342.7 129.0Q344.6 128.6 346.9 127.1M292.1 134.4Q290.6 135.3 290.1 137.7Q288.5 138.1 286.0 139.1"/>
</g>
<path d="M238 157 C258 157 270.3 167 270.3 180.5 C270.3 194 258 204 238 204 C218 204 205.7 194 205.7 180.5 C205.7 167 218 157 238 157z" fill="url(#g3d)"/>
<g clip-path="url(#cb5)" fill="none" stroke="#383838" stroke-width="0.65" stroke-linecap="round" opacity="0.85" filter="url(#f03)">
<path d="M216.4 176.6Q214.5 177.2 211.8 177.0Q209.3 177.8 206.9 176.3M242.0 183.4Q242.8 185.0 242.5 186.6Q243.6 188.6 244.6 190.1Q245.8 191.5 246.6 194.6M245.6 171.3Q246.3 173.4 245.0 176.2Q246.3 177.7 247.0 178.5Q246.5 179.9 248.2 182.1M255.0 184.0Q253.4 185.6 253.0 186.6Q251.6 187.3 250.1 187.5Q248.8 188.9 247.6 189.7M215.4 171.2Q214.1 172.4 213.0 173.3Q213.6 174.9 212.6 176.6M257.2 160.6Q258.4 163.0 257.1 165.3Q255.7 166.6 254.8 167.3M256.1 176.6Q256.1 178.9 255.8 181.4Q256.4 183.4 256.4 185.4M205.8 159.5Q206.2 161.7 207.3 163.8Q207.9 164.3 209.1 166.0Q210.3 166.0 211.8 166.2M247.9 164.7Q249.0 164.9 250.5 166.8Q253.0 168.0 255.5 166.7Q255.9 165.8 257.5 164.2M218.6 162.4Q216.7 162.3 213.9 163.0Q212.6 164.5 211.7 165.6Q210.1 166.3 208.5 166.2M263.5 183.6Q262.1 185.7 262.3 187.7Q260.6 189.3 258.9 189.4M264.0 202.4Q263.1 203.9 263.3 205.4Q263.0 207.2 264.6 208.7Q266.1 209.6 268.1 210.4M231.3 201.5Q233.3 202.6 236.1 201.8Q237.7 201.8 239.3 201.7M231.6 173.8Q230.3 175.6 228.8 176.7Q228.4 178.9 227.6 180.9M208.9 173.4Q209.6 175.0 210.1 176.5Q212.1 178.3 213.1 180.1M250.5 200.9Q249.2 201.6 248.3 202.6Q246.0 202.6 243.6 203.0Q242.2 204.4 240.3 205.8M236.5 173.9Q234.5 175.5 231.8 175.3Q231.3 176.7 229.2 177.7Q228.0 179.5 227.2 180.9M230.4 159.1Q228.9 160.2 227.7 161.7Q226.2 161.0 224.4 161.7M229.0 172.2Q230.5 173.6 230.4 175.4Q230.0 176.9 230.8 179.1Q230.9 181.0 230.6 183.0M220.5 185.2Q219.0 185.6 216.8 187.2Q215.4 188.1 214.1 188.0M253.0 182.4Q252.5 183.9 253.3 185.5Q254.1 187.3 255.8 188.5M261.6 196.3Q260.7 198.0 258.6 199.0Q257.1 199.7 255.3 199.7Q253.6 198.9 252.1 198.5M249.6 192.2Q247.4 192.5 245.5 194.4Q245.9 196.0 244.6 197.6M259.7 166.3Q259.3 167.9 257.6 168.8Q256.5 170.5 254.7 172.7M212.0 163.4Q212.4 164.7 212.0 166.1Q213.6 167.3 215.2 169.6Q216.6 168.8 218.2 169.5M258.4 202.0Q257.0 203.4 256.2 204.5Q255.7 206.2 253.7 207.8Q251.5 209.6 250.5 210.9M251.5 161.5Q250.3 162.7 249.6 163.3Q249.1 164.4 248.2 165.6Q247.2 166.0 245.3 167.7M244.0 171.0Q244.8 172.6 246.7 175.2Q246.5 177.0 246.7 178.9M258.4 161.7Q256.5 163.1 255.6 165.6Q254.4 164.9 252.5 165.9Q251.1 164.9 250.2 164.4M258.6 203.0Q260.8 204.2 261.4 206.8Q262.1 208.6 262.9 210.2M257.9 174.6Q258.4 176.2 258.4 178.2Q260.4 179.9 261.5 181.8M232.6 194.1Q233.7 195.3 234.4 196.9Q235.6 197.9 236.3 198.9M232.2 167.5Q231.5 168.7 232.0 170.1Q231.4 170.8 229.7 172.1Q229.6 174.0 228.7 175.9M217.9 198.5Q219.1 200.8 218.7 203.3Q218.5 204.2 217.0 206.0M264.7 184.5Q263.2 186.5 263.0 188.8Q261.1 188.7 258.6 190.6Q257.1 191.0 254.5 189.0M266.9 187.8Q265.9 189.3 265.4 191.8Q263.2 192.1 261.1 193.4M221.3 165.9Q221.1 167.4 221.4 169.0Q221.0 170.4 222.1 172.6Q220.9 173.0 220.5 174.6M249.7 163.3Q248.7 164.0 248.0 165.3Q246.5 166.4 245.1 166.6M222.4 192.4Q221.4 194.2 220.2 195.9Q218.5 196.9 216.9 196.7M224.6 183.7Q224.2 185.7 224.8 187.7Q225.1 189.9 227.8 191.5M253.1 161.2Q253.8 162.9 252.9 164.5Q251.2 165.1 249.5 167.6Q248.4 167.9 247.1 169.3M245.5 165.2Q247.0 166.5 247.9 167.1Q248.1 168.5 249.5 171.3Q251.3 172.9 253.4 173.1M255.9 177.0Q254.3 177.3 252.7 179.0Q251.3 179.6 249.9 178.9M254.4 173.2Q254.0 174.9 253.6 176.6Q254.0 177.6 254.7 179.1M239.6 173.1Q238.4 174.8 236.5 176.9Q236.8 178.3 234.8 180.6Q235.4 182.9 236.3 185.1M217.7 178.8Q219.4 179.8 220.7 181.5Q221.8 182.6 223.5 182.6Q225.1 183.7 227.5 184.2M216.6 165.6Q216.2 166.8 215.5 168.4Q216.2 170.2 217.2 171.6M239.8 198.4Q239.4 199.8 238.3 200.8Q238.2 202.6 239.0 204.3M255.9 166.4Q256.7 167.7 258.2 168.6Q259.4 169.2 261.5 170.0M220.9 194.1Q222.9 193.5 225.0 195.3Q226.6 195.4 228.2 194.7Q228.9 193.2 231.9 191.6M259.4 162.3Q260.9 164.3 261.0 166.3Q261.3 167.2 260.2 168.7Q259.2 170.0 258.8 171.3M220.8 190.9Q221.2 192.8 221.9 194.8Q221.2 196.6 220.7 198.4M219.8 158.1Q219.9 159.5 220.1 160.9Q220.3 162.7 219.9 165.3M250.3 196.8Q249.4 198.1 249.2 199.3Q249.9 201.0 250.1 203.4M263.8 167.8Q262.6 170.2 260.6 171.5Q259.8 172.7 259.0 174.1Q258.4 175.7 257.3 177.7M231.7 170.1Q231.6 172.5 230.8 175.0Q230.9 177.0 232.5 179.1M220.8 163.0Q222.4 165.4 222.7 167.6Q223.3 168.0 225.0 170.0M245.3 195.8Q245.2 196.9 243.9 198.0Q243.3 199.2 243.8 200.5M250.4 203.4Q248.1 205.7 247.3 207.1Q247.5 208.4 247.4 209.8Q245.7 211.4 245.6 213.2M210.3 189.6Q210.0 190.5 208.5 192.1Q206.7 193.2 204.2 193.8Q203.0 194.5 201.3 195.3M212.7 181.3Q213.1 182.5 213.7 183.6Q213.7 185.7 212.4 187.5Q212.4 189.6 212.7 191.8M257.8 192.4Q258.6 193.6 259.6 194.2Q261.5 193.4 263.4 194.4M225.7 183.0Q227.1 184.5 227.6 186.9Q227.9 188.4 228.4 189.8Q229.2 190.3 229.9 191.8M249.8 160.0Q250.5 161.1 250.6 162.5Q249.8 164.2 250.4 165.9Q252.0 167.5 252.8 168.4M209.1 189.7Q210.7 190.4 212.0 191.0Q213.8 191.3 215.6 190.9M206.3 183.9Q205.0 184.6 203.7 184.9Q201.3 183.4 198.9 183.5M244.5 179.8Q245.9 179.6 247.7 180.4Q249.1 181.5 250.9 184.1M250.8 159.4Q251.1 161.1 252.0 164.1Q251.9 164.8 250.5 166.4Q248.8 168.1 248.7 170.0M248.8 188.9Q249.3 189.9 250.5 191.4Q249.8 193.2 251.8 195.7Q251.2 197.3 250.8 198.7M212.3 175.9Q212.2 177.2 212.7 179.2Q212.9 181.4 213.5 183.8M223.2 188.2Q221.7 188.5 220.4 189.7Q218.9 190.0 217.2 192.2Q215.9 193.4 214.3 193.6M261.5 201.3Q261.9 203.3 262.9 205.2Q261.9 207.5 261.5 209.6Q263.3 211.5 263.9 213.5M228.8 187.0Q228.1 188.3 226.9 189.0Q224.9 189.8 223.2 190.6Q221.2 191.2 219.9 193.0M239.4 167.3Q241.6 168.0 242.8 170.8Q241.8 172.9 242.5 175.2Q243.3 177.4 242.9 180.1M212.4 191.4Q212.2 193.1 212.1 194.9Q211.4 196.2 212.3 198.0Q212.8 200.1 214.3 201.7M216.3 183.5Q214.8 183.2 213.0 184.1Q211.4 183.8 209.4 182.9M230.7 159.1Q231.4 161.0 230.8 163.1Q231.6 165.4 234.0 166.6M241.4 158.5Q242.5 159.8 242.8 161.0Q243.9 162.1 245.7 161.9Q247.0 162.5 249.6 164.5M242.2 172.2Q242.2 174.4 242.5 176.6Q244.1 177.8 244.9 178.8Q245.7 181.2 247.7 182.9M226.3 179.0Q226.2 179.9 223.7 182.9Q222.4 183.8 220.4 184.8M208.0 196.4Q207.2 197.8 207.9 199.4Q208.9 199.8 209.8 201.4Q210.9 201.9 211.6 203.4M209.2 188.6Q207.9 190.1 206.9 191.3Q207.0 193.1 207.2 194.9Q207.1 196.3 205.9 197.7M233.6 159.0Q231.2 159.8 228.8 159.5Q228.2 160.8 226.8 161.9Q224.6 163.4 223.5 165.4M237.9 198.8Q237.2 199.2 235.7 200.8Q234.0 202.1 232.6 202.2M208.1 181.8Q207.6 183.4 206.5 184.7Q207.7 186.7 206.5 188.9M256.9 181.4Q256.5 182.3 257.5 184.0Q258.6 185.7 258.3 187.7Q259.5 188.0 261.7 189.5M223.5 157.1Q222.9 158.5 221.9 159.3Q221.1 160.6 219.3 160.8Q217.4 160.5 215.8 159.6M220.2 192.6Q222.3 194.4 223.1 195.9Q223.1 198.3 222.7 200.7Q223.2 202.5 222.7 204.4M205.8 164.6Q204.4 166.4 202.6 167.2Q202.0 168.6 200.6 171.0Q201.3 172.3 200.5 173.9M210.0 164.9Q210.8 166.5 212.7 167.7Q212.6 169.0 213.8 170.2M222.5 172.0Q222.0 172.9 220.6 174.9Q218.7 174.7 217.2 176.4M243.7 175.6Q243.1 176.1 240.7 178.0Q238.9 178.0 237.0 178.4M229.3 177.9Q229.8 179.1 232.7 181.2Q234.1 181.1 236.0 181.2Q236.6 179.8 238.5 179.2M264.5 166.4Q263.3 168.4 263.1 170.4Q262.1 171.5 260.0 173.1Q258.6 172.9 256.6 174.2M251.1 183.7Q248.8 185.2 247.0 185.9Q244.9 186.9 242.8 186.7M235.2 176.2Q233.5 176.6 231.8 177.3Q230.5 176.4 229.3 176.3M214.0 157.8Q212.9 159.6 213.6 161.5Q215.2 162.9 216.0 165.6Q216.3 167.1 217.5 169.0M224.6 172.5Q225.4 173.5 227.4 173.9Q228.4 175.2 228.0 176.5M269.4 159.6Q271.0 159.6 272.2 161.4Q274.1 162.3 275.7 163.1M236.8 202.4Q235.7 203.5 235.6 204.6Q235.4 206.5 235.4 208.4M253.9 161.0Q254.2 162.5 255.2 164.1Q256.5 165.5 256.1 167.7M230.5 158.5Q230.2 159.8 231.3 161.6Q231.5 162.9 232.8 163.8Q232.3 165.6 233.2 167.8M240.7 165.8Q241.2 167.8 241.2 170.2Q242.1 171.9 243.5 174.3M263.6 158.4Q263.2 158.7 261.5 160.1Q261.3 161.0 258.8 163.8M219.7 166.8Q219.7 168.3 219.8 169.9Q220.5 170.6 221.8 172.3M207.0 168.5Q208.8 170.3 210.9 170.3Q212.5 172.3 213.8 173.6Q214.7 174.5 215.2 176.2M245.7 182.0Q245.8 183.3 246.9 184.4Q248.1 186.2 248.0 189.1M265.4 166.4Q265.6 167.9 268.1 170.5Q270.0 172.0 271.5 172.2Q273.8 172.6 275.9 170.4M239.7 166.7Q240.4 168.8 239.7 171.0Q239.2 172.3 238.7 173.6Q237.7 175.3 238.9 177.6M258.4 158.9Q259.0 160.2 258.3 161.5Q256.8 163.2 255.2 164.4M263.1 161.0Q263.2 162.7 261.3 164.6Q260.6 165.6 258.8 166.8Q258.0 167.4 256.7 168.9M252.3 173.0Q253.5 173.2 254.7 174.4Q256.9 173.9 259.6 174.4Q261.0 175.0 262.4 176.8M226.1 204.0Q228.0 204.5 230.0 205.9Q232.2 205.1 234.8 206.4M233.4 200.2Q235.1 199.7 237.0 200.5Q238.3 201.7 239.1 202.8M256.7 175.6Q256.4 176.9 255.9 179.2Q254.6 179.8 253.9 180.9Q252.6 181.0 251.0 181.9M206.4 184.5Q204.8 184.6 203.5 185.7Q202.5 187.9 202.0 189.9M262.6 185.9Q262.6 186.9 261.9 188.8Q260.7 190.3 258.9 190.8M245.3 166.6Q247.4 168.1 249.4 168.3Q249.5 169.6 251.7 171.4M256.6 175.0Q256.6 176.7 254.6 178.5Q254.3 180.7 254.0 182.8M205.0 169.2Q206.5 170.5 207.6 173.1Q208.9 173.0 209.9 174.3M251.3 177.5Q251.9 179.7 252.2 182.0Q251.9 184.1 252.0 186.5Q252.2 188.9 250.2 191.1M249.4 194.9Q250.7 195.9 250.9 197.8Q251.5 199.8 253.2 201.3Q253.5 202.5 253.5 203.8M248.2 181.7Q250.4 182.6 252.4 182.8Q254.0 184.5 256.8 184.1M240.8 196.2Q243.0 198.4 243.4 200.3Q243.8 201.1 246.4 203.3Q247.6 202.7 248.9 203.4M219.9 183.2Q219.4 184.5 219.9 185.7Q220.9 187.2 222.2 188.3M250.9 187.3Q250.8 188.7 251.4 191.0Q252.5 193.1 251.4 195.2Q251.3 196.6 250.2 198.1M269.1 167.9Q268.5 169.3 267.9 170.8Q268.2 172.0 268.4 173.3M270.1 186.8Q269.6 188.3 270.8 190.7Q271.1 192.2 272.0 193.4Q273.1 194.4 275.5 194.9M211.2 183.6Q212.6 184.7 212.5 187.2Q213.3 188.9 214.5 190.4Q214.4 192.6 214.1 195.2M217.7 176.0Q218.9 176.8 219.7 179.0Q220.7 180.1 220.8 182.0Q220.2 183.6 220.7 185.7M238.3 176.4Q239.2 177.5 239.2 179.0Q238.9 180.8 236.8 182.8Q235.1 185.0 233.2 185.8M250.5 192.0Q249.4 193.8 248.8 195.3Q247.8 196.3 246.5 199.3Q245.1 200.4 243.4 200.8M253.6 201.2Q252.3 202.5 251.7 204.8Q250.6 206.0 248.3 206.4M226.0 177.3Q226.7 178.7 228.2 181.2Q227.1 183.4 228.5 186.0Q229.4 187.8 231.4 188.9M220.9 174.3Q220.0 176.1 220.6 178.0Q220.1 179.1 219.3 181.5Q218.9 183.7 216.4 184.9M208.4 199.0Q209.2 201.0 210.8 202.6Q212.2 204.9 211.3 207.1Q210.7 209.3 212.0 211.4M206.2 202.1Q204.8 203.7 204.0 205.2Q202.8 206.8 203.2 208.5Q202.1 209.6 201.4 210.8M232.3 197.2Q233.1 199.4 231.2 201.7Q231.6 203.0 231.1 204.3M245.3 192.1Q245.9 193.5 245.9 194.9Q245.3 196.6 245.9 198.5Q245.8 200.0 247.1 201.3M242.5 192.3Q240.8 194.0 241.2 196.7Q240.8 197.6 239.0 199.0Q238.5 201.0 237.3 202.6M257.0 164.7Q256.5 166.2 256.6 167.6Q255.7 168.4 254.3 170.3M238.3 184.6Q238.4 186.8 236.3 188.6Q234.1 189.5 232.1 189.6M219.6 183.6Q221.6 185.1 223.7 185.0Q225.8 184.9 227.6 182.8Q229.9 181.8 231.6 180.4M251.8 202.5Q250.4 203.8 249.7 204.6Q248.1 204.5 246.5 205.2M205.6 183.4Q206.5 185.4 205.4 187.5Q206.0 189.9 207.5 191.7Q208.9 192.7 209.7 193.5M258.3 166.2Q256.3 167.2 255.4 169.3Q253.9 170.6 252.7 171.7M232.6 171.9Q231.3 172.5 230.6 173.6Q229.7 175.7 230.6 178.2Q231.5 180.1 230.2 182.2M243.3 178.2Q243.4 179.6 242.8 181.4Q244.1 183.5 244.2 185.6M228.6 201.2Q229.1 202.8 228.9 204.7Q229.7 205.3 231.9 207.2M255.2 165.5Q253.1 166.8 252.8 169.5Q253.6 171.8 253.9 174.0Q255.0 175.0 256.3 176.5M228.1 199.0Q227.9 200.7 229.6 202.0Q229.3 203.0 228.8 204.9Q228.3 206.4 228.9 208.3M222.3 175.2Q222.9 176.6 222.0 178.0Q223.1 178.9 224.0 180.2Q225.0 182.0 225.4 183.4M230.9 189.3Q229.5 190.7 229.0 191.4Q227.9 192.8 228.0 194.2Q226.3 196.4 226.5 198.2M237.3 188.7Q237.5 190.8 235.8 192.6Q236.4 194.0 236.9 195.1M268.4 201.5Q268.1 203.0 267.5 204.5Q268.3 206.0 268.1 207.5Q267.3 209.7 269.0 211.9M240.5 172.2Q242.2 172.4 244.0 173.3Q246.3 173.5 248.9 174.3M244.4 180.5Q246.3 182.4 247.8 184.1Q249.4 184.4 251.5 186.5M221.5 190.9Q220.8 192.5 221.6 194.2Q221.6 196.1 222.4 198.5M220.4 191.4Q219.7 192.9 219.5 194.2Q217.7 195.6 216.3 196.2Q215.0 195.5 213.1 195.8M223.3 157.9Q223.7 159.4 223.4 161.3Q223.1 163.3 222.7 165.6M231.7 181.8Q232.0 183.7 231.6 186.1Q231.0 188.2 230.4 190.2M217.9 179.1Q216.5 179.9 215.5 182.6Q216.1 183.8 216.2 185.2Q215.4 186.9 216.6 189.3M235.3 197.3Q234.1 199.4 233.3 201.1Q233.1 202.6 233.7 204.2M246.5 194.6Q248.1 195.8 249.3 198.0Q250.8 199.8 251.6 201.0M229.2 189.3Q229.8 191.1 232.2 192.4Q233.8 193.2 235.4 192.3Q237.9 190.8 240.2 190.9M259.9 189.7Q259.1 191.1 256.8 192.7Q255.7 192.8 254.2 194.0Q253.3 193.9 251.7 193.0M245.9 193.9Q244.3 194.2 242.5 196.3Q241.6 196.2 239.5 197.4Q238.0 195.6 235.7 195.3M267.8 186.1Q267.5 188.3 264.6 189.8Q264.2 191.9 264.8 194.5Q263.1 196.6 262.6 198.4M248.6 180.8Q248.3 182.3 249.6 184.0Q251.0 186.1 250.1 188.7M252.7 199.9Q252.2 201.3 252.6 202.7Q253.7 203.9 254.2 205.1M212.1 166.1Q210.3 167.8 208.8 168.3Q206.5 168.4 204.3 168.7M209.2 158.9Q209.5 160.5 208.9 162.2Q209.6 163.5 210.8 164.9Q210.6 166.6 211.1 168.3M235.0 195.0Q234.4 196.5 232.6 197.1Q232.1 199.6 232.9 202.0M259.6 163.0Q258.9 163.9 257.1 164.3Q255.7 164.0 253.9 164.6M239.0 203.1Q240.1 204.5 241.6 205.1Q242.4 206.9 243.8 208.7Q245.8 208.9 247.3 210.5M240.6 164.8Q241.7 166.0 242.8 169.0Q244.1 170.0 245.5 170.2M215.1 171.8Q213.0 172.5 211.8 174.4Q210.3 176.2 210.4 177.8Q208.3 179.7 206.7 180.1M205.3 187.0Q204.1 187.8 202.0 190.2Q200.6 190.1 198.8 191.3M234.3 174.3Q235.0 175.7 235.4 177.0Q236.2 177.5 237.9 178.4M232.1 161.1Q233.1 162.8 232.4 164.6Q232.8 166.2 231.6 168.4M234.9 167.6Q235.0 169.1 236.3 170.3Q237.9 171.0 239.0 172.2M270.4 177.6Q268.5 179.9 268.6 181.8Q266.4 183.7 264.9 184.5Q265.4 185.8 264.4 187.9M243.7 195.4Q243.0 196.8 242.4 198.2Q241.3 199.4 240.0 199.7M244.1 169.4Q243.0 170.5 241.7 171.7Q239.9 172.3 238.0 172.4Q235.9 172.6 233.4 173.1M249.7 196.8Q248.9 198.6 247.9 199.9Q247.1 202.1 245.9 204.0Q244.8 205.1 243.0 204.9M248.7 187.7Q248.7 190.1 247.4 192.4Q248.5 193.3 248.6 194.7M220.2 191.5Q218.3 193.7 217.6 195.1Q216.5 196.4 216.5 198.8M210.3 186.8Q210.3 188.1 211.6 189.1Q211.8 190.3 211.9 191.9Q211.1 193.6 211.8 195.3M264.0 183.2Q265.6 185.3 266.3 186.8Q268.7 187.2 270.5 189.2M211.8 172.8Q210.1 174.0 209.2 175.1Q207.7 175.4 206.3 175.3M253.3 163.7Q254.7 164.5 256.4 164.2Q257.0 164.7 259.0 166.0Q260.8 167.6 261.0 169.8M240.1 201.3Q241.3 202.6 240.9 204.7Q240.7 206.6 239.7 208.6Q238.4 210.0 237.5 212.2M252.7 192.3Q251.7 193.7 250.3 194.6Q250.2 196.1 250.0 197.9M250.9 203.9Q251.4 205.9 251.7 208.0Q253.2 209.5 255.2 210.7Q256.7 211.3 257.8 212.0M216.4 172.1Q217.1 174.2 218.4 175.8Q217.8 177.1 218.4 178.4Q217.6 180.8 215.3 182.1M210.1 197.1Q209.6 198.2 208.3 199.5Q206.6 201.5 205.8 202.7Q205.6 204.0 205.6 205.4M219.6 160.0Q220.6 162.3 222.2 163.9Q223.9 166.2 224.0 168.0Q225.3 169.0 226.9 169.8M268.5 179.0Q268.6 180.4 268.6 182.0Q267.3 183.2 266.2 184.6M262.8 166.5Q262.6 168.5 264.3 171.1Q264.8 172.7 264.9 174.9Q264.5 176.2 265.6 177.5M261.1 166.7Q260.9 168.5 259.6 170.0Q260.5 172.1 259.1 174.1Q258.0 175.0 256.1 176.1M207.6 164.5Q207.1 165.4 206.1 167.1Q204.3 166.8 202.0 168.9Q200.3 167.7 198.2 168.2M234.1 174.2Q235.6 175.8 235.2 178.1Q234.9 179.4 234.4 181.3M237.5 179.5Q236.4 181.3 235.6 182.5Q234.4 182.1 232.9 182.8M249.5 203.7Q248.4 204.2 245.9 205.8Q245.1 206.6 243.8 208.2Q243.0 210.4 244.4 212.7M226.9 162.7Q229.2 163.3 231.8 163.5Q233.0 164.5 234.5 165.1Q235.9 164.9 237.2 164.5M210.5 166.6Q209.2 168.4 208.1 170.2Q206.5 171.2 205.7 172.7Q205.1 174.0 204.6 175.2"/>
</g>
<path d="M319.3 157 C339 157 351.3 167 351.3 180.5 C351.3 194 339 204 319.3 204 C299 204 287.300 194 287.3 180.5 C287.3 167 299 157 319.3 157z" fill="url(#g3d)"/>
<g clip-path="url(#cb6)" fill="none" stroke="#383838" stroke-width="0.65" stroke-linecap="round" opacity="0.85" filter="url(#f03)">
<path d="M313.4 196.6Q314.7 195.1 315.3 193.8Q316.7 191.7 316.8 189.9Q317.8 189.4 319.1 189.1M308.1 190.5Q309.4 188.4 309.9 186.8Q310.6 184.7 310.0 182.6Q308.3 180.5 307.2 179.2M288.8 185.4Q290.3 183.8 290.2 181.3Q291.1 179.5 290.1 177.5Q291.3 176.1 292.3 174.1M328.6 180.0Q328.6 181.3 328.1 182.5Q326.7 182.6 325.9 184.2M352.9 191.0Q353.3 189.6 354.1 188.3Q353.6 186.5 353.4 184.7M318.7 159.2Q320.7 160.6 322.2 161.6Q324.6 162.2 326.9 160.4M331.0 202.5Q331.2 200.7 332.0 198.8Q332.4 196.9 330.8 194.9Q329.7 194.7 328.0 193.7M336.0 166.3Q334.0 165.1 332.7 164.0Q331.7 162.6 331.7 161.3Q332.4 159.6 331.5 157.8M297.7 187.4Q295.9 188.4 295.3 190.5Q296.2 192.1 295.4 193.8Q295.3 195.7 293.3 197.1M341.2 183.6Q340.5 185.1 339.8 187.4Q338.3 187.9 336.9 188.8M317.6 194.4Q319.3 192.8 320.5 192.3Q321.5 191.1 322.1 190.2M291.6 158.0Q289.5 155.8 288.2 154.8Q287.1 153.8 285.4 152.8Q285.2 151.3 284.0 149.9M287.9 170.6Q288.6 170.8 290.3 171.8Q292.0 173.7 293.1 174.9M348.1 187.1Q348.4 185.8 350.0 185.1Q350.3 183.8 350.4 182.5Q349.3 181.0 348.8 180.1M328.4 190.7Q330.0 191.1 331.8 190.3Q334.0 192.2 335.9 192.2M324.3 201.8Q326.7 203.3 328.6 204.3Q329.9 205.3 330.6 206.7M348.7 192.9Q350.4 192.9 352.7 194.9Q354.7 194.3 357.6 195.4M337.1 172.9Q335.2 172.2 333.2 172.4Q331.8 172.3 330.3 173.6M332.3 200.3Q334.3 201.8 336.4 201.0Q337.8 200.6 339.5 201.0Q341.4 199.2 343.1 198.8M345.1 169.4Q346.3 167.6 345.4 165.4Q346.0 163.0 344.2 160.7M316.6 173.0Q317.6 172.6 318.5 171.2Q317.9 169.7 318.9 167.9Q319.8 166.6 320.5 165.9M294.8 158.0Q292.3 157.6 289.8 157.6Q287.5 156.4 285.2 157.6M311.1 188.4Q312.7 186.4 313.7 184.7Q315.7 183.8 317.8 181.9M312.1 182.8Q313.9 183.9 314.6 185.7Q314.4 187.5 315.8 189.2Q318.0 190.5 319.8 192.1M345.4 196.3Q344.3 198.5 344.7 200.6Q345.1 202.0 343.9 203.3M325.8 158.4Q324.3 160.5 324.7 162.5Q324.3 163.3 322.3 165.2M287.1 173.2Q288.4 175.1 288.9 176.6Q289.3 177.5 292.3 180.1Q292.8 181.6 294.4 182.9M323.4 162.1Q323.8 163.6 325.8 164.3Q327.0 164.1 328.4 164.5Q330.5 164.4 332.5 164.5M340.3 199.8Q341.2 201.1 341.3 202.2Q342.2 203.5 342.7 204.4Q344.0 205.3 345.0 206.2M308.7 190.3Q309.7 191.6 310.4 192.3Q310.0 194.7 310.4 197.1M310.9 165.2Q309.3 165.5 307.7 164.6Q306.0 164.0 304.0 164.5Q302.7 165.3 300.4 167.2M330.8 182.8Q332.4 182.7 333.8 184.0Q334.4 185.5 335.4 186.6M303.7 197.2Q303.4 195.4 301.5 194.3Q299.7 194.3 298.0 193.2Q297.0 192.1 295.7 191.5M328.9 173.9Q330.6 175.9 331.7 176.9Q332.2 177.7 333.6 179.1M325.4 192.8Q326.6 194.0 327.0 194.8Q329.1 196.6 330.5 197.3Q330.2 198.9 331.1 200.6M323.8 174.1Q324.8 175.7 325.5 176.8Q327.1 176.9 328.7 177.3M332.9 180.2Q332.5 178.1 333.5 176.0Q334.5 174.7 334.7 173.6Q335.6 172.1 337.1 171.4M337.1 197.9Q336.9 195.5 337.4 193.0Q338.1 191.7 338.3 190.5M330.9 190.0Q331.3 191.8 330.6 194.6Q329.9 195.2 329.2 197.0Q327.8 198.0 325.9 197.5M306.9 166.1Q305.1 165.9 303.6 163.9Q302.3 163.8 300.8 163.7M326.5 195.3Q325.6 193.3 326.0 190.8Q325.4 188.9 323.8 187.1M290.8 198.6Q290.5 196.5 291.5 194.2Q291.6 191.8 292.7 189.4Q293.3 188.0 292.9 186.5M315.4 189.8Q315.5 191.2 315.8 193.3Q318.3 194.5 319.8 196.3Q321.2 197.6 323.0 199.0M304.8 166.6Q303.0 165.7 301.2 166.8Q300.4 168.4 299.1 169.1M298.6 203.1Q299.3 204.6 300.0 205.8Q299.2 206.9 299.5 208.3Q300.5 210.4 301.5 212.1M304.1 194.2Q304.6 191.7 304.7 189.3Q305.6 187.2 304.7 185.1M331.1 191.7Q330.7 189.9 328.8 188.1Q328.2 186.9 329.0 185.3M327.4 164.7Q327.0 162.8 326.9 160.9Q327.7 158.6 326.4 156.2Q326.5 154.9 325.4 153.5M330.9 170.5Q328.7 169.9 326.7 169.5Q324.9 169.8 323.8 171.6M289.7 183.4Q290.5 183.5 292.3 185.4Q294.4 187.6 294.8 189.1M297.3 190.3Q296.3 191.5 296.5 192.8Q297.5 194.5 297.1 196.1Q298.4 198.3 299.0 200.4M310.0 162.0Q310.0 163.5 310.0 165.2Q308.6 166.7 307.7 167.6Q306.4 168.2 305.0 167.9M304.9 193.2Q305.7 193.9 305.9 195.6Q305.0 197.2 304.5 198.5M331.0 162.7Q332.7 162.2 333.4 160.5Q334.4 160.7 336.3 159.3M325.9 190.2Q327.6 189.3 329.8 189.6Q331.4 188.8 332.7 186.4Q334.3 184.9 336.0 184.5M287.2 185.6Q287.6 187.3 286.9 189.3Q285.9 190.8 284.3 191.4Q283.2 193.0 282.6 194.2M300.5 192.4Q298.7 192.8 296.4 195.1Q295.3 195.4 293.8 195.9M331.8 174.6Q331.8 176.2 332.8 178.3Q332.2 180.5 330.7 182.4Q331.1 184.4 332.3 186.1M291.6 164.9Q290.6 163.7 290.3 162.4Q289.1 161.4 287.7 161.3M297.5 202.1Q298.5 200.9 299.1 199.9Q300.8 199.5 302.6 199.6M295.5 178.1Q296.7 178.7 297.9 179.3Q299.8 179.8 301.9 180.4M300.3 194.8Q302.2 192.7 303.1 191.6Q303.7 191.2 305.4 189.9Q305.4 188.4 306.8 186.8M301.7 202.7Q303.6 202.5 306.1 204.9Q306.6 206.4 307.2 208.2M288.5 186.2Q288.9 184.5 288.4 182.8Q290.7 181.1 291.9 179.6M303.1 163.5Q301.3 162.6 300.5 160.3Q298.6 158.8 298.2 156.4Q298.0 154.8 297.5 152.8M330.9 166.7Q330.1 166.1 329.2 164.6Q327.3 162.2 327.2 160.2Q326.0 158.7 324.9 157.9M334.3 178.9Q334.9 179.9 336.3 180.8Q337.2 182.6 338.6 184.9Q339.8 186.1 339.6 188.5M333.8 157.9Q334.2 156.8 335.0 154.8Q336.9 153.5 338.1 152.5Q339.5 150.6 339.8 149.0M338.2 167.7Q338.4 165.9 339.9 164.3Q340.6 162.4 342.8 161.0M292.3 157.4Q290.9 155.9 291.3 153.1Q291.0 151.0 292.1 148.9M351.4 196.0Q352.3 193.7 350.4 191.1Q350.8 189.9 352.2 188.8Q352.9 186.8 353.4 184.4M315.3 201.0Q313.9 202.4 311.8 203.7Q311.1 205.3 310.2 206.5M335.3 176.6Q333.7 175.6 332.7 174.9Q330.9 173.3 329.2 172.2Q328.3 171.2 326.7 171.3M299.3 188.5Q300.0 187.7 300.7 185.9Q300.9 184.1 301.4 181.8M334.7 194.7Q334.0 196.3 334.0 197.8Q334.5 198.3 335.5 199.9Q337.0 201.6 337.3 203.1M305.6 196.7Q305.4 198.5 303.8 200.9Q305.2 202.7 304.6 205.6M318.3 179.8Q317.9 181.1 316.7 183.1Q316.5 185.5 315.2 187.7Q314.3 189.6 314.9 192.2M327.4 176.1Q326.7 174.4 324.0 172.5Q322.9 170.3 321.9 168.2Q322.8 166.5 321.8 164.8M320.6 185.6Q321.1 187.0 322.0 188.1Q323.9 187.5 325.9 189.0M339.0 197.3Q340.1 198.3 342.0 198.0Q344.0 198.4 346.1 197.1M318.3 160.1Q317.4 158.2 317.4 156.3Q317.4 154.3 317.1 151.9Q317.3 150.4 316.4 149.0M335.8 158.4Q337.2 157.9 338.8 157.8Q340.8 155.9 342.3 155.1M341.3 199.5Q343.0 200.5 343.3 203.2Q345.2 204.8 347.2 205.8Q349.5 206.6 351.8 206.3M292.5 183.8Q290.5 185.7 289.8 187.7Q288.7 190.1 289.2 192.5M313.3 165.0Q313.8 164.4 315.9 162.4Q315.7 161.1 316.4 159.6M341.2 167.6Q341.0 168.9 338.8 171.1Q336.6 171.8 335.2 174.3Q335.5 176.0 335.1 177.7M309.7 167.7Q307.4 167.7 305.5 165.5Q304.3 164.5 302.0 163.1M320.4 198.5Q320.2 200.1 321.3 202.0Q322.5 202.5 324.4 203.4M333.3 192.0Q331.5 191.3 329.5 191.9Q328.1 192.8 326.7 192.5M332.6 198.3Q333.3 199.3 333.9 200.6Q335.5 202.1 336.8 203.5Q337.2 205.7 337.0 208.2M303.8 199.0Q303.0 198.4 301.7 196.6Q301.1 195.0 301.4 193.4Q300.2 191.0 299.5 189.1M338.7 188.4Q337.8 190.2 336.8 191.7Q336.2 193.2 337.4 194.7Q338.7 196.2 338.5 197.8M338.5 194.8Q339.9 195.8 341.3 196.4Q342.6 196.4 344.2 196.8M343.1 161.3Q344.4 160.8 345.7 160.7Q347.9 159.3 350.3 160.5M344.5 180.5Q343.5 180.2 341.8 179.3Q339.9 179.6 337.1 178.9M342.7 201.4Q340.4 200.1 338.1 201.2Q336.6 200.8 335.1 201.9Q333.5 202.5 332.4 204.6M306.9 172.6Q307.9 171.1 307.8 169.3Q308.2 168.2 309.2 165.8M295.1 201.9Q293.9 200.3 292.5 198.2Q290.1 197.6 288.6 195.2M315.8 186.0Q314.0 185.8 312.7 183.9Q311.2 182.2 311.6 179.3M346.4 167.6Q347.1 168.3 349.1 170.7Q351.2 171.0 352.7 173.7M313.5 182.6Q314.5 181.6 315.2 180.5Q316.0 178.6 317.6 177.6Q319.7 176.4 322.1 177.2M334.9 169.2Q336.2 168.9 338.2 166.8Q339.9 164.4 341.8 163.3M327.7 162.2Q329.2 160.9 330.8 159.7Q329.9 157.8 331.4 155.4Q332.9 153.7 333.1 152.5M336.1 179.0Q334.1 177.1 332.0 176.9Q330.1 176.7 327.8 176.5Q326.1 176.3 324.0 176.2M301.8 179.3Q300.8 178.7 299.7 176.6Q298.8 174.7 297.7 173.5Q298.9 171.4 298.6 169.3M291.2 172.5Q293.4 172.7 295.2 174.4Q296.5 173.8 298.0 174.6Q298.6 175.7 299.7 176.6M298.3 177.8Q300.0 180.1 301.0 181.6Q300.5 183.5 300.2 186.2Q301.6 187.4 302.6 189.7M315.0 187.5Q316.7 186.1 316.9 184.2Q317.2 182.9 319.0 180.7Q321.0 179.0 322.6 178.3M328.7 182.2Q328.7 180.7 329.1 178.8Q329.1 177.5 329.8 175.6M303.7 163.5Q301.7 163.6 299.2 165.5Q297.1 164.2 294.3 165.1M348.3 189.6Q347.3 191.2 347.2 193.4Q347.6 195.4 349.0 197.0Q348.0 199.2 349.1 201.7M349.1 183.8Q347.3 186.0 346.3 187.5Q344.8 187.9 343.2 188.5Q341.0 188.2 338.6 189.1M331.3 192.3Q329.8 190.6 328.4 190.0Q327.3 188.6 325.4 188.7M327.9 193.1Q329.9 193.0 332.2 193.0Q334.0 193.3 335.6 194.1Q337.5 195.4 338.6 197.5M300.8 179.0Q302.2 180.4 303.0 181.4Q305.1 183.4 306.8 184.5M343.7 174.8Q343.8 176.2 344.2 177.6Q346.2 179.7 347.2 180.9Q349.4 181.1 351.3 182.8M310.2 198.5Q308.7 198.6 307.1 199.0Q305.8 199.7 303.2 201.9M311.2 167.1Q309.9 166.3 308.3 166.9Q306.3 166.3 304.4 165.6M297.6 188.0Q299.5 187.9 302.0 187.9Q304.2 189.5 306.1 190.1M293.7 181.4Q292.3 181.0 290.7 181.4Q289.3 181.5 288.1 182.5Q286.7 184.1 284.0 184.7M333.3 175.5Q334.7 176.7 336.7 178.8Q338.5 179.9 340.1 179.4M333.1 204.0Q334.2 202.0 333.5 199.2Q332.2 197.7 332.3 196.4M335.1 180.5Q336.4 180.8 339.0 178.8Q340.6 177.0 340.7 175.4Q342.1 175.5 344.5 173.9M333.5 186.6Q333.5 184.8 332.1 183.3Q331.2 181.3 330.9 179.3M340.8 164.1Q341.7 165.1 343.8 166.1Q345.4 165.6 346.9 165.1Q348.9 164.1 351.2 164.9M314.9 177.7Q315.6 175.3 317.3 173.3Q318.4 173.5 319.6 172.3Q319.9 170.8 321.7 168.8M312.6 175.1Q314.3 174.5 316.4 175.6Q317.4 177.2 319.0 178.2M318.6 179.9Q320.7 178.8 322.6 178.9Q323.8 177.5 324.9 176.1Q326.0 176.3 327.8 175.4M350.9 173.2Q351.1 171.1 349.8 169.1Q350.3 167.1 349.8 164.9Q349.5 163.5 348.4 161.9M338.5 157.2Q337.9 158.6 336.6 159.6Q335.0 159.9 333.5 160.1M307.7 191.2Q306.8 188.8 307.3 186.3Q306.2 184.8 306.3 183.3M303.7 194.4Q302.8 195.6 301.3 195.7Q299.3 194.7 297.1 195.2M351.6 201.6Q352.9 202.6 354.1 202.5Q356.1 204.2 357.4 205.5M317.3 169.5Q317.5 171.5 318.9 173.4Q319.7 174.2 320.5 175.4Q320.9 177.2 321.9 179.8M319.0 163.7Q316.6 163.1 314.2 163.9Q312.3 163.4 310.4 163.1Q308.0 163.5 306.2 165.2M297.6 172.4Q299.8 171.6 302.2 173.0Q304.1 172.3 305.7 171.5Q306.8 170.9 308.6 170.9M317.2 170.8Q318.6 172.4 321.0 172.3Q322.0 171.3 323.5 171.4M330.2 182.4Q328.5 182.1 327.1 183.8Q325.1 185.5 324.1 187.2M305.3 182.9Q305.5 181.5 304.4 180.4Q305.3 178.5 304.4 176.6M321.6 183.5Q321.4 182.2 321.6 180.7Q322.5 180.4 324.5 178.1M294.1 158.9Q293.8 158.6 292.4 156.9Q290.2 156.2 288.4 154.8Q287.3 154.9 285.3 153.3M319.9 179.1Q318.3 179.3 315.9 179.9Q314.8 179.7 313.3 179.3Q311.2 177.8 310.2 175.5M321.9 174.6Q320.4 175.8 318.5 175.6Q317.5 174.7 315.8 173.9Q315.2 172.4 313.8 169.5M309.6 177.0Q308.2 178.7 308.5 180.7Q310.0 182.9 309.5 184.9M312.0 171.8Q313.3 170.4 314.9 170.4Q316.1 171.2 318.5 171.9Q319.7 173.0 322.6 174.4M310.4 165.5Q311.4 167.8 309.8 170.1Q311.1 171.1 311.9 172.6M351.7 184.4Q350.5 183.3 350.0 181.4Q348.4 179.8 346.9 179.3M306.5 164.6Q304.6 165.4 302.4 164.3Q300.5 164.0 298.7 165.2Q297.2 166.9 296.5 167.8M309.7 165.7Q309.7 167.7 311.4 169.6Q312.6 170.8 315.2 171.4Q316.9 172.2 319.5 173.6M334.0 189.6Q336.2 188.6 337.5 186.8Q339.0 186.3 340.5 186.2M349.8 194.9Q347.9 196.7 346.7 197.1Q345.6 197.1 344.0 198.1M325.8 202.8Q324.6 204.3 324.8 206.3Q325.7 208.1 324.9 209.9M295.3 161.5Q294.0 160.5 292.5 159.8Q291.8 158.1 290.8 156.1M288.6 167.7Q287.6 165.5 288.2 163.2Q288.9 162.1 288.7 160.5M352.7 196.7Q353.9 195.8 356.5 195.1Q358.1 194.4 359.7 194.9M297.8 169.1Q297.4 170.7 297.7 172.2Q297.6 173.1 298.4 174.9Q299.2 177.2 298.7 179.5M337.5 157.0Q337.7 155.2 336.4 153.1Q336.3 151.5 336.2 150.0M298.4 170.5Q300.0 169.8 301.6 169.9Q303.4 169.6 305.1 170.6Q307.3 170.0 309.7 169.9M350.6 184.1Q351.4 185.3 353.3 185.7Q354.4 186.2 355.9 187.7M347.2 165.8Q345.4 163.6 344.8 162.2Q345.0 160.5 343.9 159.0Q345.4 157.2 345.8 155.8M295.4 194.3Q294.7 195.5 294.3 196.7Q295.5 198.7 294.3 201.1Q293.3 202.7 293.3 204.1M339.7 161.2Q337.7 160.6 335.2 161.1Q333.5 159.3 331.4 158.3M300.8 166.3Q299.2 165.0 298.1 164.5Q297.7 162.7 297.6 160.4M333.8 167.7Q332.0 167.2 331.0 165.2Q329.5 163.8 327.7 163.3Q326.5 162.1 325.0 162.0M320.7 173.8Q321.3 172.2 321.3 170.6Q323.1 170.5 324.5 168.2M303.3 186.2Q304.0 185.0 303.8 183.7Q305.5 182.7 307.5 180.9Q309.4 180.7 311.8 178.6M315.4 194.2Q314.5 196.3 314.7 198.8Q315.4 200.8 314.7 203.0Q315.8 205.0 314.8 207.7M330.5 190.2Q328.8 188.1 329.2 185.9Q329.5 184.0 328.7 181.8Q327.3 180.4 326.5 179.8M304.3 202.7Q303.3 200.8 304.6 198.6Q304.6 197.4 306.1 196.1M352.3 177.7Q352.4 175.7 354.7 173.9Q356.3 174.0 357.5 172.4M306.4 174.7Q304.5 172.9 303.3 171.7Q302.9 170.9 301.0 170.0Q301.8 168.0 300.3 165.3M295.8 194.0Q297.3 193.7 299.3 193.2Q301.7 192.0 303.9 191.6M299.1 160.2Q299.7 159.2 298.8 157.5Q298.0 156.4 295.4 154.9M296.3 170.8Q297.4 169.0 298.6 167.8Q298.4 165.9 298.2 163.6Q299.3 161.5 298.4 159.4M334.1 173.1Q334.2 171.6 334.0 169.6Q335.6 167.6 335.9 166.1M340.2 175.4Q339.4 176.5 338.1 176.8Q336.5 178.1 335.0 178.6Q332.9 178.3 330.3 178.5M288.7 164.8Q288.7 163.6 286.9 161.2Q286.1 159.5 285.2 157.8Q284.1 156.1 283.8 154.6M319.3 173.8Q318.5 173.0 316.1 171.4Q313.8 171.5 311.5 172.2M337.5 202.0Q338.7 204.0 338.7 206.0Q339.2 208.3 340.2 210.2M293.6 202.5Q292.1 202.3 289.5 204.4Q287.3 204.8 285.1 204.2Q284.6 202.8 283.2 201.8M343.6 178.7Q345.0 178.6 346.4 179.4Q348.0 178.3 350.0 177.8Q351.3 177.0 352.3 176.0M343.9 171.8Q343.9 173.0 343.6 174.6Q341.7 177.1 341.6 179.1Q342.4 180.7 341.5 182.4M337.5 197.8Q335.3 198.1 333.3 196.2Q330.9 195.8 328.7 197.9M349.3 198.3Q350.8 199.4 351.2 202.1Q351.2 203.4 351.4 204.6Q350.3 206.7 351.2 208.7M347.0 192.5Q344.7 191.1 342.4 191.9Q340.8 191.1 339.4 190.1Q338.6 189.6 337.6 188.0M349.0 177.0Q347.7 177.9 346.3 177.9Q345.4 178.6 343.8 180.0Q342.5 180.9 340.8 180.6M300.4 197.2Q302.5 198.6 304.8 197.8Q306.0 197.5 307.2 196.3M325.5 181.7Q324.4 183.0 322.5 184.2Q320.6 184.3 318.9 185.8Q318.3 186.1 316.0 188.3M350.5 190.1Q348.7 191.3 347.0 192.0Q345.7 192.0 344.3 192.0Q343.0 190.4 341.7 189.4M301.6 176.5Q300.0 176.8 298.9 179.0Q296.8 180.9 296.2 182.8M310.0 199.5Q308.4 198.3 305.6 197.4Q304.9 195.4 303.0 194.0Q300.7 192.9 298.3 192.4M327.6 185.7Q327.5 183.6 326.4 181.0Q325.4 179.0 325.5 177.2Q323.9 176.5 322.0 174.9M308.6 160.9Q307.1 161.0 304.0 159.0Q302.3 158.6 300.5 159.0M351.8 185.7Q352.7 187.8 351.7 190.0Q350.9 191.4 348.5 193.0M292.7 164.5Q292.9 162.6 291.4 160.3Q290.5 158.2 292.0 156.2Q293.7 154.8 294.4 152.2M313.7 174.3Q315.5 173.3 316.8 172.0Q318.8 172.8 321.0 171.3M344.1 165.7Q342.2 164.8 341.5 162.3Q341.2 161.2 340.8 159.9Q338.9 157.9 338.5 156.5M343.9 173.7Q342.6 172.0 341.4 171.3Q339.7 170.4 338.2 170.4M346.7 157.3Q347.9 156.0 347.6 153.9Q346.5 152.4 346.3 151.3Q344.9 151.1 343.7 150.1M319.2 185.5Q317.3 186.3 315.5 187.0Q314.3 187.9 313.2 188.2M313.6 180.0Q312.9 181.3 313.6 182.7Q312.7 184.1 313.6 185.9Q314.3 187.6 315.4 188.8M352.9 185.7Q351.7 186.6 350.3 186.8Q349.4 187.8 348.4 188.6M300.4 194.2Q300.4 192.6 302.4 190.5Q304.6 188.6 306.4 188.0Q307.7 186.0 306.9 183.6M303.4 196.1Q302.3 197.8 302.3 199.5Q302.2 201.4 303.1 203.2M292.5 174.0Q293.0 174.6 294.8 176.0Q295.6 177.5 294.9 179.0Q297.2 180.5 298.8 182.1M316.6 200.4Q318.0 199.2 319.1 198.4Q318.7 196.1 319.9 193.7Q320.0 191.8 319.5 189.7"/>
</g>
<path d="M206 250 C204 235 216 221.5 236 220.3 C256 219.3 271.3 231 271 246 C271 254 267 259 262 261 C258 268 252 267 250 264 C248 272 240 274 236 266 C232 262 228 262 224 266 C216 270 210 264 214 258 C209 257 206.500 254 206 250z" fill="url(#g3d)"/>
<g clip-path="url(#cb7)" fill="none" stroke="#383838" stroke-width="0.65" stroke-linecap="round" opacity="0.85" filter="url(#f03)">
<path d="M259.1 245.9Q260.2 244.9 262.0 243.8Q263.9 243.1 265.8 243.6Q267.8 244.1 269.9 243.8M257.0 271.0Q255.3 268.9 254.4 267.5Q252.5 268.4 250.4 267.4M232.9 239.1Q233.9 240.2 236.2 242.6Q236.5 243.9 236.5 245.4M212.8 230.3Q211.1 232.2 210.6 233.5Q208.3 234.9 206.0 234.0Q204.2 234.4 202.4 233.0M236.9 229.5Q237.7 227.6 238.4 225.6Q240.1 224.4 241.2 223.5Q241.9 221.9 243.4 221.1M229.9 240.2Q228.9 239.6 227.7 237.7Q225.5 236.5 223.8 235.7M225.3 255.9Q227.1 256.8 228.3 258.4Q230.7 257.9 233.1 258.4M244.7 226.6Q246.8 227.9 249.4 227.7Q251.4 227.2 253.4 227.6Q255.1 227.3 256.6 226.5M245.4 234.6Q243.9 235.9 242.6 235.7Q240.9 237.6 239.7 238.3M264.9 232.0Q264.1 233.8 262.6 236.4Q261.1 236.3 259.3 237.0Q257.8 238.0 256.3 238.6M248.6 243.7Q249.5 244.0 251.3 244.5Q252.0 243.4 253.8 243.2Q255.6 242.6 257.7 242.1M256.2 235.0Q257.5 236.1 258.7 237.5Q260.3 238.5 261.9 238.1Q263.2 240.3 264.3 241.9M206.5 225.7Q207.8 227.6 207.3 229.4Q208.7 229.5 211.6 231.8Q214.0 231.1 216.5 231.7M248.8 237.6Q250.3 240.0 250.7 242.2Q253.1 243.4 255.3 243.5M233.4 222.4Q231.6 220.5 231.1 218.2Q229.8 216.4 227.9 215.8Q226.2 214.2 225.7 212.9M263.0 264.9Q263.5 262.6 264.7 260.6Q265.5 258.9 264.5 257.2M228.3 229.7Q228.1 228.2 229.6 227.0Q228.7 224.8 228.2 222.4M207.4 226.9Q205.7 228.7 205.1 229.6Q204.3 230.9 204.1 232.3Q204.4 233.9 204.9 236.7M230.5 227.3Q231.3 226.0 232.8 225.7Q234.8 224.7 236.5 223.6Q237.8 223.0 238.6 222.0M252.0 234.0Q250.6 233.4 249.1 230.7Q247.5 230.1 245.6 230.5Q244.5 231.1 241.9 233.0M246.2 240.2Q246.7 242.1 246.9 244.1Q248.2 246.4 248.1 248.6M222.3 231.8Q220.6 230.5 219.7 229.5Q218.2 228.9 216.2 229.4Q214.4 230.1 212.1 228.2M247.0 257.9Q246.2 259.3 244.4 262.2Q243.7 263.6 242.5 264.3M226.5 234.5Q227.9 235.5 229.1 236.0Q230.6 237.0 232.1 238.9M234.0 250.6Q233.8 252.4 233.7 254.2Q233.1 256.2 234.1 258.6M210.2 250.0Q211.8 249.0 213.1 248.7Q214.3 247.3 214.3 245.3Q214.3 243.9 213.7 241.6M217.7 232.0Q219.3 230.6 220.9 228.2Q222.9 228.3 224.8 227.0Q226.0 227.4 227.4 228.5M238.5 243.8Q241.0 244.2 243.4 243.2Q244.8 244.6 246.4 245.6Q248.1 246.1 249.8 245.2M207.3 237.7Q205.2 237.1 203.3 236.7Q201.5 234.9 201.3 232.6Q200.2 231.7 199.0 230.9M265.9 244.2Q267.0 243.9 268.5 244.6Q269.9 244.6 271.2 245.6Q271.2 246.9 272.2 248.1M239.2 245.8Q238.1 247.3 238.2 248.7Q237.1 250.2 236.6 253.0Q235.1 254.1 232.5 254.7M216.3 251.9Q217.3 252.4 219.2 253.2Q221.6 251.8 223.6 251.1M236.4 244.8Q237.6 244.2 237.9 242.6Q239.5 243.3 241.2 242.4M234.8 250.8Q233.9 252.8 233.4 254.6Q234.2 256.4 234.8 258.5M235.6 246.9Q235.3 248.4 235.3 249.9Q236.4 251.4 235.5 253.7Q236.4 255.4 238.4 257.4M224.6 245.2Q223.7 246.6 223.6 249.1Q223.4 250.8 224.0 252.5Q225.0 254.9 226.5 256.6M211.1 237.6Q209.8 239.1 210.2 241.0Q209.3 242.8 206.4 243.5M238.8 243.9Q240.3 243.7 242.2 241.9Q243.8 240.3 244.2 239.1M214.8 249.0Q213.6 247.3 212.9 246.3Q213.9 244.5 212.9 242.6Q212.7 240.7 213.0 238.2M209.3 230.4Q210.5 231.0 212.0 230.6Q213.3 231.9 215.1 234.2M260.9 261.0Q259.1 263.3 258.5 265.2Q257.9 266.7 258.5 268.3Q258.0 269.8 257.7 271.3M216.3 224.5Q214.6 223.3 212.8 222.6Q210.6 222.6 209.1 220.4M205.8 221.4Q207.1 221.2 208.8 221.4Q211.0 219.9 213.1 220.4Q214.9 219.1 216.0 216.5M227.4 264.4Q229.1 263.3 230.9 263.6Q232.7 263.3 234.4 262.8Q236.4 262.5 238.8 263.4M217.5 244.3Q218.9 244.6 220.4 245.2Q222.0 245.9 223.8 244.5M264.4 225.9Q265.2 225.7 266.9 224.9Q268.6 223.2 270.1 222.8Q271.4 222.1 273.1 222.6M245.3 223.1Q245.8 224.9 247.2 226.3Q248.4 227.5 248.8 228.4M251.6 250.9Q250.1 251.8 248.6 251.4Q246.2 252.0 244.0 253.1Q243.3 254.5 242.9 255.7M251.2 256.0Q250.2 256.3 248.4 255.3Q246.7 253.6 246.0 252.6M269.3 266.4Q270.4 267.3 272.1 266.9Q273.6 266.0 275.0 266.2M206.4 228.8Q207.6 229.9 208.2 230.7Q208.6 232.1 208.8 233.4Q207.4 235.8 208.1 238.2M231.4 265.0Q229.2 265.0 227.2 263.9Q226.5 262.7 225.3 262.2Q224.2 262.5 222.7 262.1M266.6 259.3Q267.6 259.0 269.3 257.8Q271.4 257.1 272.9 255.1M234.8 236.7Q234.3 235.8 232.8 234.6Q232.2 233.0 232.9 231.3Q233.2 230.0 232.0 228.8M232.7 234.3Q233.2 232.3 234.4 230.5Q235.3 229.3 236.1 228.3M212.0 232.5Q213.2 232.3 216.1 229.9Q217.5 229.3 219.5 230.2M209.4 228.0Q210.1 225.6 208.4 223.3Q206.8 221.6 207.2 218.8Q206.9 216.9 208.0 215.1M237.3 226.3Q239.2 225.9 241.5 223.9Q241.9 222.7 243.2 221.2M263.8 262.8Q262.5 262.5 261.3 262.4Q259.9 263.8 257.3 264.3Q255.2 262.3 253.2 262.3M263.6 222.2Q265.1 222.8 266.6 222.9Q267.6 222.6 269.0 221.0M251.9 264.3Q250.6 263.5 249.3 263.5Q247.7 262.3 246.8 261.0M208.9 232.4Q209.8 233.3 209.6 234.9Q209.1 236.7 207.9 238.9Q206.6 240.2 205.6 241.3M220.1 261.4Q221.0 262.8 221.5 264.2Q221.4 265.5 222.2 266.7Q222.7 268.6 221.7 270.5M260.6 229.8Q261.7 229.6 263.4 229.4Q265.6 227.3 267.0 226.6Q267.8 226.0 269.3 225.3M229.4 233.2Q227.2 233.9 225.0 234.3Q223.7 233.8 222.1 234.2Q219.8 234.6 218.1 236.6M226.3 229.8Q226.6 227.8 228.1 225.2Q230.3 224.7 232.5 223.8M244.3 237.3Q245.2 236.4 245.9 234.2Q246.0 232.7 247.1 231.3Q248.9 230.7 250.4 229.5M212.1 271.5Q213.7 271.2 215.3 272.0Q216.8 272.5 217.9 273.6M250.3 236.8Q252.5 235.8 254.0 234.3Q255.0 234.2 256.9 235.1M217.3 258.9Q216.9 257.5 216.1 256.4Q215.2 255.3 214.7 253.8M244.6 242.2Q243.5 241.9 241.9 242.9Q240.6 242.5 239.1 243.0Q237.3 242.6 235.4 242.7M236.9 271.0Q237.8 269.7 238.1 268.4Q238.1 267.3 239.0 265.2Q239.6 263.7 240.5 262.1M206.3 253.8Q205.5 252.3 206.2 250.3Q206.8 248.6 207.4 247.1Q209.4 246.5 210.7 244.6M249.3 271.3Q251.0 270.4 252.1 267.9Q253.7 267.3 255.4 267.4Q256.9 268.9 259.0 268.8M236.6 242.4Q238.4 240.4 239.0 239.1Q239.7 237.2 240.3 235.4Q241.1 233.4 242.6 231.9M268.5 238.0Q267.1 237.2 265.9 236.5Q265.0 236.2 263.9 234.4M237.2 271.5Q236.4 269.9 234.7 269.1Q232.9 269.0 231.2 269.5M214.6 236.7Q215.7 236.6 217.9 238.3Q219.0 238.1 220.3 237.3M264.3 243.1Q263.2 242.8 261.1 241.4Q260.7 239.9 259.0 237.8M211.4 239.9Q213.5 239.8 215.5 239.1Q216.7 240.1 217.7 240.5M234.1 266.2Q232.1 265.3 230.1 266.1Q229.3 264.4 227.0 262.7Q226.6 261.2 226.2 259.7M213.4 233.2Q214.6 232.9 217.5 235.2Q218.1 236.7 219.3 238.0M260.3 254.7Q261.4 255.6 262.5 256.1Q264.6 256.7 266.8 256.0M234.0 261.3Q232.8 262.5 232.0 264.3Q230.9 265.8 230.0 267.3M262.1 221.9Q260.9 223.1 260.3 224.0Q260.1 226.4 261.1 228.9Q261.9 230.9 262.8 232.7M211.9 234.3Q211.4 232.2 210.7 230.2Q210.3 228.7 211.2 227.0Q210.3 225.7 209.9 224.2M222.2 272.5Q221.2 271.9 219.7 272.5Q218.0 272.1 216.4 273.6Q215.4 274.1 213.8 273.5M241.4 246.9Q243.1 246.1 244.7 245.3Q247.0 246.2 249.4 245.1M249.2 225.6Q251.4 224.9 253.8 225.7Q255.7 226.0 258.1 227.3Q260.1 226.4 262.5 226.5M225.2 220.6Q223.6 221.7 220.8 222.2Q219.1 223.2 217.1 223.5Q215.6 223.4 213.7 221.9M270.1 221.7Q270.4 223.9 272.5 225.7Q272.0 228.2 274.0 230.3M221.6 222.6Q221.4 224.1 223.0 225.4Q223.9 226.9 226.8 228.5M232.5 241.9Q232.7 243.6 232.3 245.7Q231.7 247.7 232.0 250.1M246.1 233.6Q247.6 234.3 248.8 236.1Q248.2 237.8 249.7 240.4Q251.2 241.1 253.0 243.0M236.6 266.6Q235.2 265.0 233.4 264.5Q231.8 262.3 231.2 260.7M246.6 255.3Q247.8 254.8 249.2 253.4Q250.6 252.4 253.5 251.2Q255.1 250.4 255.8 248.4M239.1 223.1Q239.2 221.0 238.8 218.6Q237.7 217.4 237.4 215.8Q235.7 214.6 233.8 214.2M223.7 255.3Q224.3 257.0 224.5 259.0Q223.8 260.6 224.5 262.3Q224.3 264.0 223.5 265.8M268.1 244.3Q268.9 245.8 270.2 246.7Q271.7 247.1 272.6 249.3M261.0 256.8Q262.2 258.3 262.3 259.6Q262.6 260.5 263.7 261.8M247.3 238.8Q246.2 236.9 246.3 234.7Q244.3 233.6 243.0 232.7Q241.4 232.9 239.3 233.7M212.8 232.9Q215.0 231.9 217.4 231.8Q218.9 232.2 220.4 233.0Q221.9 233.1 223.5 233.3M233.0 258.6Q232.1 259.8 232.3 261.1Q231.9 262.4 230.4 263.4Q229.9 264.8 228.1 265.6M225.6 256.0Q224.4 255.5 223.0 254.0Q220.9 252.0 219.7 251.3Q219.6 249.7 218.3 248.5M229.6 244.0Q228.2 243.5 226.9 243.0Q224.4 242.6 222.0 242.9Q220.8 241.3 219.2 240.7M217.3 246.5Q216.8 244.7 215.4 242.6Q216.6 240.8 216.8 238.4Q217.4 237.1 216.5 235.7M219.5 267.2Q217.3 267.4 215.3 265.3Q213.3 265.1 211.6 263.0M213.5 235.4Q214.0 236.9 213.6 238.5Q214.2 239.8 214.2 241.1M227.5 227.8Q226.2 228.9 225.1 229.1Q223.7 229.8 222.3 229.9M217.2 257.0Q215.8 257.6 214.8 258.4Q214.4 259.4 212.8 260.1Q211.2 261.2 209.2 262.1M251.9 259.7Q252.8 257.8 253.6 256.0Q256.0 256.1 258.2 254.5Q259.3 253.6 259.3 251.7M258.0 270.5Q258.1 269.0 259.0 266.8Q259.4 265.8 260.5 263.8M264.8 259.1Q265.6 260.4 266.3 261.2Q267.4 262.6 267.7 263.6M253.0 224.1Q252.2 225.0 250.6 226.3Q248.9 227.8 248.0 228.6M216.1 229.9Q216.5 229.0 217.3 227.2Q217.4 225.4 218.2 223.7M227.9 227.6Q227.1 229.5 224.9 231.1Q223.4 232.5 223.3 234.6Q221.4 235.6 220.1 238.2M206.0 237.2Q205.1 239.0 203.8 240.8Q201.3 240.5 199.0 242.2M236.2 270.2Q237.1 269.6 237.9 268.1Q238.4 267.5 240.0 266.6M253.8 240.1Q255.7 241.7 258.1 241.3Q259.7 241.4 261.1 242.4M237.9 240.1Q236.6 239.6 235.6 238.7Q234.1 238.3 232.7 237.3M261.5 262.4Q260.0 262.5 258.1 263.7Q256.7 263.2 254.6 264.5Q253.6 266.5 252.1 267.6M242.5 253.9Q241.1 255.1 239.2 254.6Q238.4 253.7 236.4 253.2M239.5 248.3Q239.8 249.9 238.2 251.3Q238.3 253.4 238.3 256.1M233.0 261.3Q233.3 263.2 233.1 265.2Q231.8 266.6 230.4 267.9Q228.4 267.8 226.3 269.2M256.5 249.6Q258.1 249.5 259.7 248.5Q261.0 249.0 262.4 248.3Q263.1 247.2 265.2 246.1M244.2 249.5Q242.8 249.9 240.4 251.4Q239.4 252.8 238.3 254.8Q238.2 256.9 236.9 259.3M223.7 243.4Q225.3 242.6 226.6 240.4Q228.9 238.7 230.4 237.9Q231.0 237.0 232.1 235.7M218.4 223.2Q219.6 223.3 220.8 222.0Q222.0 220.7 224.3 220.7Q225.9 219.9 227.5 220.3M264.6 263.7Q266.2 264.7 266.8 266.5Q267.2 267.2 268.4 268.6M209.3 248.1Q211.4 248.0 213.4 247.5Q215.4 247.9 217.5 248.1M243.7 255.0Q244.2 256.3 245.8 258.3Q247.1 258.6 249.4 260.7M255.9 263.0Q254.6 261.9 253.2 259.8Q251.8 259.1 250.3 259.6M230.3 252.5Q230.8 251.1 231.6 249.9Q234.1 248.1 235.8 247.2M232.9 264.3Q232.1 265.9 230.8 266.7Q229.4 266.8 227.0 267.3"/>
</g>
<path d="M352.5 250 C354.5 235 342.5 221.5 322.5 220.3 C302.5 219.3 287.200 231 287.5 246 C287.5 254 291.5 259 296.5 261 C300.5 268 306.5 267 308.5 264 C310.5 272 318.5 274 322.5 266 C326.5 262 330.5 262 334.5 266 C342.5 270 348.5 264 344.5 258 C349.5 257 352 254 352.500 250z" fill="url(#g3d)"/>
<g clip-path="url(#cb8)" fill="none" stroke="#383838" stroke-width="0.65" stroke-linecap="round" opacity="0.85" filter="url(#f03)">
<path d="M342.4 231.2Q343.8 231.5 345.2 231.9Q347.0 231.6 349.2 233.0M312.9 259.2Q313.7 260.4 314.9 261.4Q314.7 263.0 315.6 264.6M289.6 264.1Q288.1 264.0 286.1 264.3Q284.0 265.4 281.2 264.1M311.5 229.1Q309.9 231.4 310.5 233.6Q309.1 235.2 308.5 238.2Q309.6 240.5 308.3 243.1M295.2 228.8Q295.2 227.5 293.2 225.8Q291.4 224.1 290.2 223.3M339.0 220.8Q340.3 222.6 341.1 225.0Q341.5 225.8 342.4 227.4M303.3 250.1Q301.8 250.1 300.2 250.7Q298.2 251.0 296.3 249.1Q293.9 248.7 291.6 250.0M347.6 232.5Q348.0 233.7 349.7 234.8Q350.8 234.7 352.6 235.3M303.2 262.5Q304.7 262.9 306.4 262.3Q308.2 263.6 309.4 264.3M294.5 249.8Q294.7 247.6 297.2 246.2Q296.3 243.8 296.4 241.5Q294.0 241.3 292.3 239.0M296.5 272.5Q294.5 271.4 293.0 270.0Q291.7 268.1 291.0 265.8M321.1 221.1Q322.5 219.6 324.0 218.9Q323.8 217.6 324.7 216.3Q323.2 214.5 322.9 213.0M325.3 226.8Q325.7 229.0 327.4 230.7Q326.7 232.5 327.1 234.6M301.0 265.7Q299.4 267.3 299.4 269.5Q298.0 270.9 295.3 271.8M318.0 265.0Q317.5 263.1 316.0 261.6Q315.3 259.4 312.5 258.3M336.6 240.5Q337.9 240.5 339.6 242.2Q339.6 243.9 340.6 245.7M344.7 262.0Q343.0 262.6 341.2 261.2Q339.3 262.1 337.2 261.5Q335.8 262.3 334.0 261.6M327.9 242.4Q329.1 243.5 330.6 243.3Q332.4 242.2 334.3 242.8Q335.8 243.8 338.6 245.1M326.2 271.7Q324.0 272.1 321.9 270.5Q319.8 269.8 317.5 270.4M306.9 262.3Q307.1 263.9 308.8 265.4Q310.3 264.8 311.8 265.9M290.7 248.0Q292.7 247.5 294.6 247.2Q296.2 246.7 297.6 245.9M332.2 257.9Q331.2 259.0 330.5 260.1Q330.2 261.9 331.3 263.9M294.9 268.3Q296.5 269.6 298.7 269.1Q299.9 269.0 302.2 270.4Q304.2 270.9 306.1 271.0M296.2 272.0Q298.3 272.2 300.8 272.2Q302.6 272.9 304.6 271.6Q305.8 272.0 307.2 272.1M318.6 270.1Q316.8 271.6 313.9 271.4Q312.7 272.8 311.6 273.5Q309.6 273.7 306.8 273.1M328.0 265.4Q328.8 264.6 329.3 262.6Q329.0 260.2 329.5 257.8Q329.2 256.0 327.2 254.8M313.7 250.6Q313.8 248.7 314.8 246.3Q314.1 244.2 315.7 242.0Q315.9 240.4 315.0 238.3M306.1 259.6Q304.4 259.6 302.6 259.7Q301.3 258.9 300.1 258.3Q298.8 256.9 296.1 257.1M297.4 259.4Q299.3 261.0 301.2 261.2Q302.9 261.1 305.0 261.3M316.4 254.6Q316.9 253.0 318.0 251.2Q317.7 250.2 316.8 248.0M315.2 236.1Q315.9 237.6 315.2 239.6Q315.5 241.2 317.3 242.1Q317.7 243.7 317.0 245.4M301.3 250.8Q299.1 249.8 297.1 250.0Q295.5 250.1 293.9 251.0Q292.5 251.3 290.5 249.7M334.2 260.2Q332.3 261.7 331.2 263.3Q329.9 264.9 330.0 266.5M320.2 270.9Q318.5 271.0 316.1 273.2Q314.3 275.3 313.6 276.6M352.3 231.7Q353.6 230.2 353.6 228.3Q352.9 226.9 352.9 225.5M352.6 240.9Q353.8 239.6 354.1 238.2Q353.8 236.0 353.3 233.8Q353.7 232.0 354.2 230.2M298.3 224.5Q297.2 224.1 296.0 223.3Q294.0 224.3 291.5 224.2Q290.8 224.5 289.3 225.7M299.5 227.6Q299.1 228.6 297.7 229.5Q297.1 230.6 295.2 231.2M294.2 264.7Q293.1 263.4 293.0 262.3Q293.0 261.5 291.5 259.8M308.3 265.6Q310.2 265.4 312.4 265.8Q314.5 265.3 316.1 263.6Q317.5 261.7 318.4 260.5M339.8 223.5Q340.3 221.4 338.9 218.8Q341.0 216.8 341.9 215.2M319.3 234.9Q318.5 232.9 319.2 230.4Q318.6 229.3 318.1 227.7M320.3 236.6Q319.3 238.1 319.3 239.9Q319.3 241.8 320.3 243.5Q318.5 245.4 318.2 247.8M329.4 272.9Q329.5 274.6 329.0 276.3Q329.5 277.4 331.4 278.9Q333.0 279.4 334.4 280.0M293.8 272.6Q295.9 272.4 298.0 272.5Q300.4 272.2 302.8 271.2M335.7 272.9Q334.4 271.2 332.5 269.3Q330.4 268.0 328.3 268.3M327.9 243.9Q325.7 242.5 324.0 241.5Q322.8 241.7 320.6 242.5Q318.7 242.9 316.7 243.1M305.5 258.8Q304.9 260.2 304.8 261.6Q303.8 263.5 304.2 265.4M291.4 262.2Q292.5 263.7 294.0 264.3Q294.6 266.1 296.2 267.1Q296.4 268.8 297.0 270.4M287.5 265.0Q287.1 262.9 284.8 261.8Q283.4 261.4 281.4 261.8Q279.4 261.3 277.2 261.8M316.4 223.5Q316.0 224.9 315.6 226.2Q314.5 226.8 312.3 229.6Q312.0 231.5 312.7 233.7M322.8 232.2Q321.6 232.5 319.2 230.9Q317.7 231.1 315.9 231.6Q314.6 230.8 313.1 231.1M345.3 229.4Q346.0 227.6 347.8 225.5Q347.3 224.0 347.5 222.0Q347.9 220.2 348.3 218.0M321.1 243.3Q320.9 241.1 320.6 239.0Q319.1 238.8 317.9 237.2Q316.4 235.9 314.3 234.7M332.7 231.2Q331.1 231.5 329.2 231.5Q327.4 231.3 325.9 232.9M306.9 226.6Q308.5 227.5 309.7 228.1Q311.1 228.7 312.5 228.9Q314.8 230.8 316.0 232.1M314.1 254.9Q316.0 257.1 317.0 258.7Q318.3 260.4 319.3 261.5M296.2 256.2Q298.4 256.3 300.7 256.2Q302.5 255.8 305.1 255.7M302.7 250.1Q304.4 249.8 306.2 250.6Q307.0 249.7 308.9 248.3Q310.8 248.0 312.7 247.7M304.0 255.8Q305.8 255.0 306.5 252.6Q306.5 251.5 306.2 249.8Q305.8 248.3 304.1 247.0M339.9 224.8Q339.9 226.9 340.8 228.9Q339.8 229.8 339.7 231.3Q338.5 231.3 337.5 232.7M299.5 254.4Q299.0 255.8 300.6 257.9Q299.8 259.2 299.6 260.3M332.1 260.5Q333.5 261.0 335.0 260.8Q337.0 259.9 339.6 260.6Q340.9 260.3 342.4 260.5M327.3 228.6Q327.6 229.9 328.7 230.8Q330.4 230.5 332.4 231.3Q333.5 232.4 335.5 233.1M345.7 255.0Q347.0 252.8 346.0 250.5Q347.1 248.9 348.6 248.3Q349.9 246.1 350.1 244.2M345.5 271.5Q344.5 270.5 344.7 268.8Q343.8 268.0 343.7 266.4Q344.3 264.8 343.5 263.0M338.6 231.0Q340.2 232.6 341.7 233.4Q343.0 234.3 343.5 236.3Q343.4 238.5 342.8 240.9M352.6 226.0Q351.8 225.5 350.1 224.6Q350.2 222.5 349.0 220.2M332.3 222.1Q330.1 222.7 329.3 225.3Q327.2 225.8 325.0 225.4Q323.8 224.6 322.8 224.1M345.8 260.4Q346.4 262.5 344.7 264.6Q343.5 265.8 342.8 266.5Q341.1 268.2 339.3 268.8M310.8 248.5Q308.8 248.1 306.8 249.1Q305.2 247.8 303.9 247.3Q301.5 247.9 299.0 246.9M348.8 256.7Q350.1 257.6 350.9 259.5Q351.1 260.2 352.1 261.8M342.1 269.3Q344.2 269.6 346.3 268.6Q347.9 268.4 349.4 269.6Q350.6 268.8 351.9 269.2M301.5 259.9Q303.0 259.3 304.7 259.4Q305.9 258.5 307.4 258.5Q309.6 257.2 311.1 255.9M292.6 265.2Q291.2 264.3 290.5 263.1Q289.7 262.6 287.4 260.5Q285.9 260.2 284.4 260.3M312.1 260.1Q313.6 259.5 314.8 257.9Q316.1 258.6 317.4 258.1Q319.7 257.9 321.3 255.0M344.1 246.7Q344.8 248.8 343.3 250.8Q341.7 252.3 339.5 253.4Q338.4 255.4 336.0 256.5M315.3 260.3Q315.7 259.0 315.7 257.5Q315.0 256.4 312.9 253.6Q313.0 251.2 312.9 248.8M308.5 250.9Q307.6 250.0 305.9 249.7Q303.9 250.3 301.9 250.1Q300.5 251.7 297.9 251.2M339.8 246.7Q340.0 245.5 341.9 243.1Q342.4 241.1 341.3 239.0Q342.9 237.5 343.3 236.4M312.7 258.1Q311.1 258.8 309.7 260.7Q308.1 260.3 306.7 261.8M329.2 262.1Q328.3 260.6 327.3 259.7Q326.5 258.0 326.6 255.4Q326.4 253.0 324.1 251.2M341.5 224.0Q339.1 224.9 336.9 225.6Q335.4 225.8 334.0 225.5M336.1 238.5Q335.5 240.2 335.8 242.1Q336.1 243.7 335.5 245.3M311.8 236.4Q310.6 237.2 309.2 237.3Q308.3 239.8 306.6 241.5M345.4 244.7Q344.8 244.0 343.2 243.4Q341.7 242.5 340.8 241.5Q339.7 241.3 337.7 240.3M301.5 257.0Q303.9 256.8 306.3 257.5Q307.6 257.1 308.3 255.9M333.4 225.3Q331.7 224.2 330.5 222.6Q330.1 221.2 330.5 219.6M346.9 263.3Q345.4 264.0 344.0 263.6Q342.1 263.5 340.1 263.3M296.7 263.6Q295.1 262.7 293.7 262.8Q293.0 262.0 291.8 259.9M292.9 265.1Q292.9 266.8 292.7 268.4Q294.4 270.9 295.4 272.6Q296.4 274.0 297.5 275.3M290.8 260.6Q290.8 259.3 291.7 258.2Q292.3 257.3 294.0 256.5M310.7 262.2Q312.1 261.9 313.4 261.7Q314.7 262.1 316.2 262.8Q318.1 263.1 320.2 262.6M297.4 267.0Q295.6 264.8 294.1 263.4Q293.7 262.4 292.4 261.5Q290.5 259.5 290.1 257.9M308.1 235.7Q309.3 234.6 310.8 234.8Q312.3 234.6 313.8 236.1Q315.5 237.1 317.5 236.0M300.9 257.4Q300.2 255.5 300.0 253.4Q298.1 253.0 296.7 251.6Q295.3 250.0 295.0 248.6M317.4 264.6Q318.1 266.6 319.8 267.9Q321.0 269.4 320.9 270.7M309.9 255.2Q311.8 256.8 314.1 257.4Q315.8 257.3 317.4 258.1Q318.3 256.9 320.0 256.6M315.9 229.3Q315.8 231.3 317.4 233.2Q317.6 234.0 318.9 235.9Q320.9 235.8 322.7 236.7M334.3 261.2Q334.9 261.7 336.7 263.3Q337.8 264.3 337.9 266.4Q338.0 268.0 338.2 269.5M294.2 253.1Q295.7 255.2 295.5 257.1Q296.0 259.1 295.7 261.4Q294.8 262.7 293.8 263.4M328.4 248.4Q329.8 246.6 329.6 244.7Q328.7 243.7 327.4 241.1Q326.8 239.9 324.6 238.4M293.6 227.1Q291.4 226.4 289.8 224.0Q288.5 223.5 287.1 223.6Q285.8 223.3 284.8 222.3M310.3 269.1Q308.7 269.9 306.8 271.6Q304.4 271.6 302.0 271.6M332.2 241.5Q334.0 241.9 336.7 242.7Q338.6 244.1 339.1 246.6Q338.8 248.1 338.4 249.4M315.9 273.0Q317.1 273.4 319.7 275.0Q321.5 277.2 322.0 279.4M346.5 224.6Q347.8 223.0 349.1 220.8Q349.6 218.6 351.6 217.1M299.0 234.3Q300.4 234.3 303.0 232.8Q304.3 232.1 305.7 232.6Q306.5 231.8 307.7 230.9M331.9 269.6Q331.8 268.4 332.6 267.2Q331.1 265.5 331.1 263.7M332.5 270.3Q333.4 271.7 334.4 272.9Q333.7 274.1 334.0 275.4M313.0 255.6Q311.4 254.1 310.4 253.6Q308.0 252.5 306.0 251.8Q304.9 252.3 303.3 252.5M352.0 241.9Q353.7 242.6 356.0 242.8Q357.1 242.0 358.5 241.7M317.3 236.5Q315.3 236.6 313.7 238.3Q312.9 239.9 310.5 241.0M288.8 232.8Q287.7 234.1 286.1 236.9Q286.5 238.4 286.3 240.1Q286.1 241.7 285.3 243.5M343.7 269.1Q344.0 270.6 346.1 271.7Q347.4 272.0 348.8 272.7Q350.3 273.2 351.9 273.4M334.5 227.0Q336.7 227.4 338.8 227.9Q339.3 229.0 341.0 230.7M308.8 240.3Q307.7 241.1 306.1 241.3Q304.6 240.7 302.8 239.9M319.9 259.4Q321.8 258.2 323.3 257.6Q324.6 256.5 325.5 255.3M346.9 253.5Q345.9 253.0 344.8 251.4Q342.6 251.8 340.4 250.9M337.7 259.8Q338.8 259.0 340.4 259.0Q342.4 258.8 344.3 258.7Q345.8 258.4 347.7 259.6M331.5 262.4Q331.7 260.8 331.7 259.1Q331.3 256.9 332.9 254.7M287.9 235.2Q285.5 235.2 283.1 234.7Q282.7 232.5 280.0 231.2M345.9 228.1Q348.0 227.3 349.9 227.1Q351.7 226.8 353.6 225.5M327.5 268.0Q326.8 270.0 326.6 272.5Q327.4 274.6 327.5 276.7M290.2 273.0Q290.9 273.4 292.2 275.1Q294.3 276.7 295.9 277.6Q297.9 277.2 299.9 276.9M335.1 263.7Q334.6 262.9 333.7 261.4Q333.2 260.0 332.5 258.9Q331.6 257.1 330.1 256.1M309.8 220.3Q309.4 222.4 310.6 224.4Q311.1 225.4 313.5 227.6Q314.4 228.7 315.6 231.1M338.6 269.8Q340.5 269.9 342.9 271.6Q345.3 270.4 347.3 269.6M347.9 271.1Q348.5 272.2 349.7 273.2Q351.0 273.5 351.8 274.9Q353.3 276.5 353.9 278.3M336.5 246.3Q335.8 247.0 333.8 249.4Q332.4 251.6 331.9 253.6Q331.6 255.7 332.3 258.3M327.1 226.8Q329.3 225.4 330.8 224.4Q332.1 223.1 333.8 221.5Q336.3 221.9 338.5 220.0M342.8 229.2Q343.3 227.4 345.1 226.4Q347.0 226.0 348.9 225.4Q350.7 225.7 353.2 227.0M342.1 224.9Q340.5 225.3 339.7 227.3Q339.5 228.3 338.4 230.4Q337.6 231.2 337.6 232.8M322.0 263.0Q323.3 262.6 325.3 263.7Q327.8 263.5 330.0 265.1"/>
</g>
<g stroke="#2c2c2c" fill="none" filter="url(#f03)">
<path d="M239 36V84" stroke-width="1.1"/><path d="M318 36V68" stroke-width="1.1"/>
<path d="M206 180.5H270" stroke-width="1.5"/>
<path d="M207 180.5H269" stroke-width="5" opacity="0.35"/>
</g>
<g filter="url(#f05)">
<ellipse cx="309" cy="76" rx="9.5" ry="8" fill="url(#gcb)"/><ellipse cx="327" cy="76" rx="9.5" ry="8" fill="url(#gcb)"/>
<ellipse cx="252" cy="140.500" rx="9.5" ry="6.500" fill="url(#gcb)"/><ellipse cx="306" cy="140.500" rx="9.5" ry="6.500" fill="url(#gcb)"/>
<ellipse cx="300.500" cy="169.500" rx="11.500" ry="9.500" fill="url(#gcb)"/><ellipse cx="300.500" cy="189" rx="11.500" ry="9.500" fill="url(#gcb)"/>
<path d="M292 180.5H348" stroke="#444" stroke-width="1" fill="none"/>
<ellipse cx="322" cy="180.500" rx="8" ry="4" fill="#8a8a8a"/>
<path d="M218 247 Q224 233 240 233 Q255 233.500 260 246 Q252 239 240 238.500 Q228 239 222 248z" fill="#ececec" stroke="#3a3a3a" stroke-width="0.7"/>
<path d="M340.500 247 Q334.500 233 318.500 233 Q303.500 233.500 298.500 246 Q306.500 239 318.500 238.500 Q330.500 239 336.500 248z" fill="#e4e4e4" stroke="#3a3a3a" stroke-width="0.7"/>
<path d="M228 246 Q240 240 252 246 Q254 252 246 254 L240 268 L235 268 L234 254 Q226 252 228 246z" fill="#d2d2d2" stroke="#444" stroke-width="0.6"/>
<path d="M330.500 246 Q318.500 240 306.500 246 Q304.500 252 312.500 254 L318.500 268 L323.500 268 L324.500 254 Q332.500 252 330.500 246z" fill="#d2d2d2" stroke="#444" stroke-width="0.6"/>
<ellipse cx="251" cy="262" rx="8" ry="6" fill="url(#gcb)"/><ellipse cx="307.500" cy="262" rx="8" ry="6" fill="url(#gcb)"/>
<path d="M228 80 L234 76 L239 80 L244 76 L250 80 L246 84 L239 86 L232 84z" fill="#4a4a4a"/>
</g>
<g filter="url(#f05)">
<ellipse cx="226" cy="81" rx="7.5" ry="3.5" fill="url(#pink)" opacity="1"/>
<ellipse cx="250.5" cy="81.5" rx="7.5" ry="3.5" fill="url(#pink)" opacity="1"/>
<ellipse cx="226" cy="81" rx="5" ry="2.5" fill="url(#pink)" opacity="1"/>
<ellipse cx="250.5" cy="81.5" rx="5" ry="2.5" fill="url(#pink)" opacity="1"/>
<ellipse cx="238" cy="58" rx="2" ry="4" fill="url(#pink)" opacity="0.5"/>
<ellipse cx="232" cy="42" rx="2" ry="2" fill="url(#pink)" opacity="0.5"/>
<ellipse cx="308" cy="81" rx="7" ry="4" fill="url(#pink)" opacity="1"/>
<ellipse cx="330" cy="80" rx="5" ry="3" fill="url(#pink)" opacity="0.6"/>
<ellipse cx="322" cy="40" rx="3" ry="1.5" fill="url(#pink)" opacity="0.5"/>
<ellipse cx="253" cy="143" rx="7" ry="4.5" fill="url(#pink)" opacity="1"/>
<ellipse cx="230" cy="141" rx="3" ry="2" fill="url(#pink)" opacity="0.6"/>
<ellipse cx="218" cy="114" rx="2" ry="2" fill="url(#pink)" opacity="0.5"/>
<ellipse cx="303" cy="142" rx="7" ry="4" fill="url(#pink)" opacity="1"/>
<ellipse cx="327" cy="140" rx="4" ry="2.5" fill="url(#pink)" opacity="0.8"/>
<ellipse cx="340" cy="108" rx="3" ry="1.5" fill="url(#pink)" opacity="0.5"/>
<ellipse cx="218" cy="174" rx="2" ry="2" fill="url(#pink)" opacity="0.6"/>
<ellipse cx="221" cy="186" rx="2" ry="2" fill="url(#pink)" opacity="0.6"/>
<ellipse cx="250" cy="176" rx="2" ry="2" fill="url(#pink)" opacity="0.6"/>
<ellipse cx="305" cy="169.7" rx="7.5" ry="6.5" fill="url(#pink)" opacity="1"/>
<ellipse cx="304" cy="187.5" rx="7.5" ry="6.5" fill="url(#pink)" opacity="1"/>
<ellipse cx="305" cy="169.7" rx="4.5" ry="4" fill="url(#pink)" opacity="0.8"/>
<ellipse cx="304" cy="187.5" rx="4.5" ry="4" fill="url(#pink)" opacity="0.8"/>
<ellipse cx="325.5" cy="167.4" rx="4.5" ry="4" fill="url(#pink)" opacity="0.9"/>
<ellipse cx="328" cy="189.8" rx="3" ry="3" fill="url(#pink)" opacity="0.8"/>
<path d="M213 250 Q214 238 226 232" stroke="#ff3a3a" stroke-width="3.2" fill="none" opacity="0.7" stroke-linecap="round"/>
<path d="M345.5 250 Q344.5 238 332.5 232" stroke="#ff3a3a" stroke-width="3.2" fill="none" opacity="0.7" stroke-linecap="round"/>
<ellipse cx="216" cy="243" rx="5" ry="4" fill="url(#pink)" opacity="0.6"/>
<ellipse cx="235" cy="236" rx="3" ry="1.5" fill="url(#pink)" opacity="0.6"/>
<ellipse cx="229" cy="263" rx="5" ry="4" fill="url(#pink)" opacity="0.9"/>
<ellipse cx="254" cy="266" rx="5" ry="3" fill="url(#pink)" opacity="0.8"/>
<ellipse cx="249" cy="226" rx="2" ry="2" fill="url(#pink)" opacity="0.5"/>
<ellipse cx="342" cy="243" rx="5" ry="4" fill="url(#pink)" opacity="0.6"/>
<ellipse cx="320" cy="236" rx="3" ry="1.5" fill="url(#pink)" opacity="0.6"/>
<ellipse cx="303" cy="262" rx="4" ry="3" fill="url(#pink)" opacity="0.7"/>
<ellipse cx="307" cy="267" rx="5" ry="3" fill="url(#pink)" opacity="0.8"/>
<ellipse cx="328" cy="263" rx="2" ry="2" fill="url(#pink)" opacity="0.6"/>
</g>
<rect x="5.5" y="282.3" width="356.5" height="206.4" fill="#000"/>
<g clip-path="url(#cgrid)">
<rect x="70.9" y="282.3" width="37.6" height="41.5" fill="#080808"/>
<rect x="108.5" y="282.3" width="37.6" height="41.5" fill="#080808"/>
<rect x="146.1" y="282.3" width="37.6" height="41.5" fill="#080808"/>
<rect x="183.8" y="282.3" width="37.6" height="41.5" fill="#080808"/>
<rect x="221.4" y="282.3" width="37.6" height="41.5" fill="#080808"/>
<rect x="259.1" y="282.3" width="37.6" height="41.5" fill="#080808"/>
<rect x="296.8" y="282.3" width="37.6" height="41.5" fill="#080808"/>
<rect x="33.2" y="323.8" width="37.6" height="41.5" fill="#080808"/>
<rect x="70.9" y="323.8" width="37.6" height="41.5" fill="#080808"/>
<rect x="108.5" y="323.8" width="37.6" height="41.5" fill="#080808"/>
<rect x="146.1" y="323.8" width="37.6" height="41.5" fill="#080808"/>
<rect x="183.8" y="323.8" width="37.6" height="41.5" fill="#080808"/>
<rect x="221.4" y="323.8" width="37.6" height="41.5" fill="#080808"/>
<rect x="259.1" y="323.8" width="37.6" height="41.5" fill="#080808"/>
<rect x="296.8" y="323.8" width="37.6" height="41.5" fill="#080808"/>
<rect x="33.2" y="365.3" width="37.6" height="41.5" fill="#080808"/>
<rect x="70.9" y="365.3" width="37.6" height="41.5" fill="#080808"/>
<rect x="108.5" y="365.3" width="37.6" height="41.5" fill="#080808"/>
<rect x="146.1" y="365.3" width="37.6" height="41.5" fill="#080808"/>
<rect x="183.8" y="365.3" width="37.6" height="41.5" fill="#080808"/>
<rect x="221.4" y="365.3" width="37.6" height="41.5" fill="#080808"/>
<rect x="259.1" y="365.3" width="37.6" height="41.5" fill="#080808"/>
<rect x="296.8" y="365.3" width="37.6" height="41.5" fill="#080808"/>
<rect x="33.2" y="406.8" width="37.6" height="41.5" fill="#0d0d0d"/>
<rect x="70.9" y="406.8" width="37.6" height="41.5" fill="#0d0d0d"/>
<rect x="108.5" y="406.8" width="37.6" height="41.5" fill="#0d0d0d"/>
<rect x="146.1" y="406.8" width="37.6" height="41.5" fill="#0d0d0d"/>
<rect x="183.8" y="406.8" width="37.6" height="41.5" fill="#0d0d0d"/>
<rect x="221.4" y="406.8" width="37.6" height="41.5" fill="#0d0d0d"/>
<rect x="259.1" y="406.8" width="37.6" height="41.5" fill="#0d0d0d"/>
<rect x="296.8" y="406.8" width="37.6" height="41.5" fill="#0d0d0d"/>
<rect x="33.2" y="448.3" width="37.6" height="37.5" fill="#151515"/>
<rect x="70.9" y="448.3" width="37.6" height="37.5" fill="#151515"/>
<rect x="108.5" y="448.3" width="37.6" height="37.5" fill="#151515"/>
<rect x="146.1" y="448.3" width="37.6" height="37.5" fill="#151515"/>
<defs><filter id="f07" x="-20%" y="-20%" width="140%" height="140%"><feGaussianBlur stdDeviation="0.7"/></filter><radialGradient id="gbr" cx="0.5" cy="0.5" r="0.5"><stop offset="0" stop-color="#d2d2d2"/><stop offset="0.7" stop-color="#c4c4c4"/><stop offset="1" stop-color="#989898"/></radialGradient></defs>
<g filter="url(#f07)">
<g filter="url(#f05)">
<path d="M86.7 280.5 L92.7 280.5 C94.7 286.5 101.7 287.0 104.2 293.5 C106.2 297.5 106.2 304.5 105.7 307.0 C104.7 314.5 97.7 319.0 89.7 319.0 C81.7 319.0 74.7 314.5 73.7 307.0 C73.1 304.5 73.1 297.5 75.2 293.5 C77.7 287.0 84.7 286.5 86.7 280.5z" fill="#8a8a8a"/>
<path d="M86.7 287.0 L79.2 289.5 L81.2 296.5 L86.9 296.0z M92.7 287.0 L100.2 289.5 L98.2 296.5 L92.5 296.0z" fill="#0a0a0a"/>
<path d="M76.2 292.5 C73.7 296.5 73.7 302.5 74.4 305.5 M103.2 292.5 C105.7 296.5 105.7 302.5 105.0 305.5" stroke="#d8d8d8" stroke-width="1.9" fill="none"/>
<path d="M79.2 291.0 L81.7 296.0 M100.2 291.0 L97.7 296.0" stroke="#dedede" stroke-width="1.5" fill="none"/>
<path d="M81.7 300.5 L84.7 299.0 M97.7 300.5 L94.7 299.0" stroke="#d0d0d0" stroke-width="1.2" fill="none"/>
<ellipse cx="89.7" cy="298.0" rx="2.300" ry="2" fill="#1a1a1a"/>
<circle cx="89.7" cy="307.8" r="3.400" fill="#4c4c4c"/><circle cx="89.7" cy="307.8" r="1.300" fill="#f4f4f4"/>
<circle cx="77.7" cy="307.0" r="1.300" fill="#303030"/><circle cx="101.7" cy="307.0" r="1.300" fill="#303030"/>
<path d="M76.7 308.5 C78.7 314.5 83.7 317.5 89.7 317.5 C95.7 317.5 100.7 314.5 102.7 308.5" stroke="#a0a0a0" stroke-width="1.6" fill="none"/>
<ellipse cx="72.5" cy="306.0" rx="1.300" ry="1.800" fill="#6a6a6a"/><ellipse cx="106.9" cy="306.0" rx="1.300" ry="1.800" fill="#6a6a6a"/>
</g>
<g filter="url(#f05)">
<path d="M124.3 280.5 L130.3 280.5 C132.3 286.5 139.3 287.0 141.8 293.5 C143.9 297.5 143.9 304.5 143.3 307.0 C142.3 314.5 135.3 319.0 127.3 319.0 C119.3 319.0 112.3 314.5 111.3 307.0 C110.7 304.5 110.7 297.5 112.8 293.5 C115.3 287.0 122.3 286.5 124.3 280.5z" fill="#8a8a8a"/>
<path d="M124.3 287.0 L116.8 289.5 L118.8 296.5 L124.5 296.0z M130.3 287.0 L137.8 289.5 L135.8 296.5 L130.1 296.0z" fill="#0a0a0a"/>
<path d="M113.8 292.5 C111.3 296.5 111.3 302.5 112.0 305.5 M140.8 292.5 C143.3 296.5 143.3 302.5 142.6 305.5" stroke="#d8d8d8" stroke-width="1.9" fill="none"/>
<path d="M116.8 291.0 L119.3 296.0 M137.8 291.0 L135.3 296.0" stroke="#dedede" stroke-width="1.5" fill="none"/>
<path d="M119.3 300.5 L122.3 299.0 M135.3 300.5 L132.3 299.0" stroke="#d0d0d0" stroke-width="1.2" fill="none"/>
<ellipse cx="127.3" cy="298.0" rx="2.300" ry="2" fill="#1a1a1a"/>
<circle cx="127.3" cy="307.8" r="3.400" fill="#4c4c4c"/><circle cx="127.3" cy="307.8" r="1.300" fill="#f4f4f4"/>
<circle cx="115.3" cy="307.0" r="1.300" fill="#303030"/><circle cx="139.3" cy="307.0" r="1.300" fill="#303030"/>
<path d="M114.3 308.5 C116.3 314.5 121.3 317.5 127.3 317.5 C133.3 317.5 138.3 314.5 140.3 308.5" stroke="#a0a0a0" stroke-width="1.6" fill="none"/>
<ellipse cx="110.1" cy="306.0" rx="1.300" ry="1.800" fill="#6a6a6a"/><ellipse cx="144.5" cy="306.0" rx="1.300" ry="1.800" fill="#6a6a6a"/>
</g>
<g filter="url(#f05)">
<path d="M161.9 280.5 L167.9 280.5 C169.9 286.5 176.9 287.0 179.4 293.5 C181.5 297.5 181.5 304.5 180.9 307.0 C179.9 314.5 172.9 319.0 164.9 319.0 C156.9 319.0 149.9 314.5 148.9 307.0 C148.3 304.5 148.3 297.5 150.4 293.5 C152.9 287.0 159.9 286.5 161.9 280.5z" fill="#7a7a7a"/>
<path d="M161.9 287.0 L154.4 289.5 L156.4 296.5 L162.1 296.0z M167.9 287.0 L175.4 289.5 L173.4 296.5 L167.8 296.0z" fill="#0a0a0a"/>
<path d="M151.4 292.5 C148.9 296.5 148.9 302.5 149.6 305.5 M178.4 292.5 C180.9 296.5 180.9 302.5 180.2 305.5" stroke="#d8d8d8" stroke-width="1.9" fill="none"/>
<path d="M154.4 291.0 L156.9 296.0 M175.4 291.0 L172.9 296.0" stroke="#dedede" stroke-width="1.5" fill="none"/>
<path d="M156.9 300.5 L159.9 299.0 M172.9 300.5 L169.9 299.0" stroke="#d0d0d0" stroke-width="1.2" fill="none"/>
<ellipse cx="164.9" cy="298.0" rx="2.300" ry="2" fill="#1a1a1a"/>
<path d="M150.9 305.0 C151.9 314.5 158.9 317.0 164.9 317.0 C170.9 317.0 177.9 314.5 178.9 305.0 C172.9 302.5 156.9 302.5 150.9 305.0z" fill="#2a2a2a"/>
<path d="M152.4 306.0 C153.4 313.0 159.9 315.5 164.9 315.5 C169.9 315.5 176.4 313.0 177.4 306.0 C171.9 304.0 157.9 304.0 152.4 306.0z" fill="#868686"/>
<ellipse cx="164.9" cy="307.5" rx="2.200" ry="2.600" fill="#c4c4c4"/>
<ellipse cx="147.8" cy="306.0" rx="1.300" ry="1.800" fill="#6a6a6a"/><ellipse cx="182.1" cy="306.0" rx="1.300" ry="1.800" fill="#6a6a6a"/>
</g>
<g filter="url(#f05)">
<path d="M199.6 280.5 L205.6 280.5 C207.6 286.5 214.6 287.0 217.1 293.5 C219.2 297.5 219.2 304.5 218.6 307.0 C217.6 314.5 210.6 319.0 202.6 319.0 C194.6 319.0 187.6 314.5 186.6 307.0 C186.0 304.5 186.0 297.5 188.1 293.5 C190.6 287.0 197.6 286.5 199.6 280.5z" fill="#7a7a7a"/>
<path d="M199.6 287.0 L192.1 289.5 L194.1 296.5 L199.8 296.0z M205.6 287.0 L213.1 289.5 L211.1 296.5 L205.4 296.0z" fill="#0a0a0a"/>
<path d="M189.1 292.5 C186.6 296.5 186.6 302.5 187.3 305.5 M216.1 292.5 C218.6 296.5 218.6 302.5 217.9 305.5" stroke="#d8d8d8" stroke-width="1.9" fill="none"/>
<path d="M192.1 291.0 L194.6 296.0 M213.1 291.0 L210.6 296.0" stroke="#dedede" stroke-width="1.5" fill="none"/>
<path d="M194.6 300.5 L197.6 299.0 M210.6 300.5 L207.6 299.0" stroke="#d0d0d0" stroke-width="1.2" fill="none"/>
<ellipse cx="202.6" cy="298.0" rx="2.300" ry="2" fill="#1a1a1a"/>
<path d="M188.6 305.0 C189.6 314.5 196.6 317.0 202.6 317.0 C208.6 317.0 215.6 314.5 216.6 305.0 C210.6 302.5 194.6 302.5 188.6 305.0z" fill="#2a2a2a"/>
<path d="M190.1 306.0 C191.1 313.0 197.6 315.5 202.6 315.5 C207.6 315.5 214.1 313.0 215.1 306.0 C209.6 304.0 195.6 304.0 190.1 306.0z" fill="#868686"/>
<ellipse cx="202.6" cy="307.5" rx="2.200" ry="2.600" fill="#c4c4c4"/>
<ellipse cx="185.4" cy="306.0" rx="1.300" ry="1.800" fill="#6a6a6a"/><ellipse cx="219.8" cy="306.0" rx="1.300" ry="1.800" fill="#6a6a6a"/>
</g>
<g filter="url(#f05)">
<path d="M237.2 280.5 L243.2 280.5 C245.2 286.5 252.2 287.0 254.8 293.5 C256.9 297.5 256.9 304.5 256.2 307.0 C255.2 314.5 248.2 319.0 240.2 319.0 C232.2 319.0 225.2 314.5 224.2 307.0 C223.7 304.5 223.7 297.5 225.8 293.5 C228.2 287.0 235.2 286.5 237.2 280.5z" fill="#7a7a7a"/>
<path d="M237.2 287.0 L229.8 289.5 L231.8 296.5 L237.4 296.0z M243.2 287.0 L250.8 289.5 L248.8 296.5 L243.1 296.0z" fill="#0a0a0a"/>
<path d="M226.8 292.5 C224.2 296.5 224.2 302.5 224.9 305.5 M253.8 292.5 C256.2 296.5 256.2 302.5 255.6 305.5" stroke="#d8d8d8" stroke-width="1.9" fill="none"/>
<path d="M229.8 291.0 L232.2 296.0 M250.8 291.0 L248.2 296.0" stroke="#dedede" stroke-width="1.5" fill="none"/>
<path d="M232.2 300.5 L235.2 299.0 M248.2 300.5 L245.2 299.0" stroke="#d0d0d0" stroke-width="1.2" fill="none"/>
<ellipse cx="240.2" cy="298.0" rx="2.300" ry="2" fill="#1a1a1a"/>
<path d="M226.2 305.0 C227.2 314.5 234.2 317.0 240.2 317.0 C246.2 317.0 253.2 314.5 254.2 305.0 C248.2 302.5 232.2 302.5 226.2 305.0z" fill="#2a2a2a"/>
<path d="M227.8 306.0 C228.8 313.0 235.2 315.5 240.2 315.5 C245.2 315.5 251.8 313.0 252.8 306.0 C247.2 304.0 233.2 304.0 227.8 306.0z" fill="#868686"/>
<ellipse cx="240.2" cy="307.5" rx="2.200" ry="2.600" fill="#c4c4c4"/>
<ellipse cx="223.1" cy="306.0" rx="1.300" ry="1.800" fill="#6a6a6a"/><ellipse cx="257.4" cy="306.0" rx="1.300" ry="1.800" fill="#6a6a6a"/>
</g>
<ellipse cx="277.9" cy="303.0" rx="16.8" ry="18.6" fill="#b8b8b8"/>
<ellipse cx="277.9" cy="303.0" rx="15.200000000000001" ry="17.0" fill="#181818"/>
<ellipse cx="277.9" cy="303.0" rx="13.8" ry="15.6" fill="#787878"/>
<ellipse cx="277.9" cy="293.5" rx="3" ry="6.500" fill="#262626"/>
<ellipse cx="269.4" cy="298.0" rx="5" ry="4" fill="#9c9c9c"/><ellipse cx="286.4" cy="298.0" rx="5" ry="4" fill="#9c9c9c"/>
<ellipse cx="277.9" cy="311.0" rx="13" ry="7.500" fill="#989898"/>
<ellipse cx="277.9" cy="306.0" rx="4" ry="3.500" fill="#c4c4c4"/>
<ellipse cx="315.6" cy="303.0" rx="16.8" ry="18.6" fill="#b8b8b8"/>
<ellipse cx="315.6" cy="303.0" rx="15.200000000000001" ry="17.0" fill="#181818"/>
<ellipse cx="315.6" cy="303.0" rx="13.8" ry="15.6" fill="#787878"/>
<ellipse cx="315.6" cy="293.5" rx="3" ry="6.500" fill="#262626"/>
<ellipse cx="307.1" cy="298.0" rx="5" ry="4" fill="#9c9c9c"/><ellipse cx="324.1" cy="298.0" rx="5" ry="4" fill="#9c9c9c"/>
<ellipse cx="315.6" cy="311.0" rx="13" ry="7.500" fill="#989898"/>
<ellipse cx="315.6" cy="306.0" rx="4" ry="3.500" fill="#c4c4c4"/>
<ellipse cx="52.0" cy="343.5" rx="17.2" ry="19.6" fill="#b8b8b8"/>
<ellipse cx="52.0" cy="343.5" rx="15.6" ry="18.0" fill="#181818"/>
<ellipse cx="52.0" cy="343.5" rx="14.2" ry="16.6" fill="#787878"/>
<ellipse cx="52.0" cy="334.0" rx="3" ry="6.500" fill="#262626"/>
<ellipse cx="43.5" cy="338.5" rx="5" ry="4" fill="#9c9c9c"/><ellipse cx="60.5" cy="338.5" rx="5" ry="4" fill="#9c9c9c"/>
<ellipse cx="52.0" cy="351.5" rx="13" ry="7.500" fill="#989898"/>
<ellipse cx="52.0" cy="346.5" rx="4" ry="3.500" fill="#c4c4c4"/>
<ellipse cx="89.7" cy="343.5" rx="17.2" ry="19.6" fill="#b8b8b8"/>
<ellipse cx="89.7" cy="343.5" rx="15.6" ry="18.0" fill="#181818"/>
<ellipse cx="89.7" cy="343.5" rx="14.2" ry="16.6" fill="#787878"/>
<ellipse cx="89.7" cy="334.0" rx="3" ry="6.500" fill="#262626"/>
<ellipse cx="81.2" cy="338.5" rx="5" ry="4" fill="#9c9c9c"/><ellipse cx="98.2" cy="338.5" rx="5" ry="4" fill="#9c9c9c"/>
<ellipse cx="89.7" cy="351.5" rx="13" ry="7.500" fill="#989898"/>
<ellipse cx="89.7" cy="346.5" rx="4" ry="3.500" fill="#c4c4c4"/>
<ellipse cx="127.3" cy="343.5" rx="17.2" ry="19.7" fill="#bdbdbd"/>
<ellipse cx="127.3" cy="343.5" rx="15.5" ry="18.0" fill="#181818"/>
<ellipse cx="127.3" cy="343.5" rx="14.0" ry="16.5" fill="url(#gbr)"/>
<ellipse cx="127.3" cy="343.5" rx="12.0" ry="14.3" fill="none" stroke="#a2a2a2" stroke-width="1.5" stroke-dasharray="2.6 2.2"/>
<path d="M125.1 337.5 L127.3 342.5 L129.5 337.5 M124.7 350.5 L127.3 345.5 L129.9 350.5" stroke="#5a5a5a" stroke-width="1.1" fill="none"/>
<path d="M127.3 328.5V337.5M127.3 350.5V358.5" stroke="#8a8a8a" stroke-width="0.8" fill="none"/>
<path d="M117.3 337.5 Q121.3 343.5 117.3 349.5 M137.3 337.5 Q133.3 343.5 137.3 349.5" stroke="#a4a4a4" stroke-width="1.6" fill="none"/>
<ellipse cx="164.9" cy="343.5" rx="17.2" ry="19.7" fill="#bdbdbd"/>
<ellipse cx="164.9" cy="343.5" rx="15.5" ry="18.0" fill="#181818"/>
<ellipse cx="164.9" cy="343.5" rx="14.0" ry="16.5" fill="url(#gbr)"/>
<ellipse cx="164.9" cy="343.5" rx="12.0" ry="14.3" fill="none" stroke="#a2a2a2" stroke-width="1.5" stroke-dasharray="2.6 2.2"/>
<path d="M162.8 337.5 L164.9 342.5 L167.1 337.5 M162.3 350.5 L164.9 345.5 L167.5 350.5" stroke="#5a5a5a" stroke-width="1.1" fill="none"/>
<path d="M164.9 328.5V337.5M164.9 350.5V358.5" stroke="#8a8a8a" stroke-width="0.8" fill="none"/>
<path d="M154.9 337.5 Q158.9 343.5 154.9 349.5 M174.9 337.5 Q170.9 343.5 174.9 349.5" stroke="#a4a4a4" stroke-width="1.6" fill="none"/>
<ellipse cx="202.6" cy="343.5" rx="17.2" ry="19.7" fill="#bdbdbd"/>
<ellipse cx="202.6" cy="343.5" rx="15.5" ry="18.0" fill="#181818"/>
<ellipse cx="202.6" cy="343.5" rx="14.0" ry="16.5" fill="url(#gbr)"/>
<ellipse cx="202.6" cy="343.5" rx="12.0" ry="14.3" fill="none" stroke="#a2a2a2" stroke-width="1.5" stroke-dasharray="2.6 2.2"/>
<path d="M200.4 337.5 L202.6 342.5 L204.8 337.5 M200.0 350.5 L202.6 345.5 L205.2 350.5" stroke="#5a5a5a" stroke-width="1.1" fill="none"/>
<path d="M202.6 328.5V337.5M202.6 350.5V358.5" stroke="#8a8a8a" stroke-width="0.8" fill="none"/>
<path d="M192.6 337.5 Q196.6 343.5 192.6 349.5 M212.6 337.5 Q208.6 343.5 212.6 349.5" stroke="#a4a4a4" stroke-width="1.6" fill="none"/>
<ellipse cx="240.2" cy="343.5" rx="17.2" ry="19.7" fill="#bdbdbd"/>
<ellipse cx="240.2" cy="343.5" rx="15.5" ry="18.0" fill="#181818"/>
<ellipse cx="240.2" cy="343.5" rx="14.0" ry="16.5" fill="url(#gbr)"/>
<ellipse cx="240.2" cy="343.5" rx="12.0" ry="14.3" fill="none" stroke="#a2a2a2" stroke-width="1.5" stroke-dasharray="2.6 2.2"/>
<path d="M238.1 337.5 L240.2 342.5 L242.4 337.5 M237.7 350.5 L240.2 345.5 L242.8 350.5" stroke="#5a5a5a" stroke-width="1.1" fill="none"/>
<path d="M240.2 328.5V337.5M240.2 350.5V358.5" stroke="#8a8a8a" stroke-width="0.8" fill="none"/>
<path d="M230.2 337.5 Q234.2 343.5 230.2 349.5 M250.2 337.5 Q246.2 343.5 250.2 349.5" stroke="#a4a4a4" stroke-width="1.6" fill="none"/>
<ellipse cx="277.9" cy="343.5" rx="17.2" ry="19.7" fill="#bdbdbd"/>
<ellipse cx="277.9" cy="343.5" rx="15.5" ry="18.0" fill="#181818"/>
<ellipse cx="277.9" cy="343.5" rx="14.0" ry="16.5" fill="url(#gbr)"/>
<ellipse cx="277.9" cy="343.5" rx="12.0" ry="14.3" fill="none" stroke="#a2a2a2" stroke-width="1.5" stroke-dasharray="2.6 2.2"/>
<path d="M275.7 337.5 L277.9 342.5 L280.1 337.5 M275.3 350.5 L277.9 345.5 L280.5 350.5" stroke="#5a5a5a" stroke-width="1.1" fill="none"/>
<path d="M277.9 328.5V337.5M277.9 350.5V358.5" stroke="#8a8a8a" stroke-width="0.8" fill="none"/>
<path d="M267.9 337.5 Q271.9 343.5 267.9 349.5 M287.9 337.5 Q283.9 343.5 287.9 349.5" stroke="#a4a4a4" stroke-width="1.6" fill="none"/>
<ellipse cx="315.6" cy="343.5" rx="17.2" ry="19.7" fill="#bdbdbd"/>
<ellipse cx="315.6" cy="343.5" rx="15.5" ry="18.0" fill="#181818"/>
<ellipse cx="315.6" cy="343.5" rx="14.0" ry="16.5" fill="url(#gbr)"/>
<ellipse cx="315.6" cy="343.5" rx="12.0" ry="14.3" fill="none" stroke="#a2a2a2" stroke-width="1.5" stroke-dasharray="2.6 2.2"/>
<path d="M313.4 337.5 L315.6 342.5 L317.8 337.5 M312.9 350.5 L315.6 345.5 L318.2 350.5" stroke="#5a5a5a" stroke-width="1.1" fill="none"/>
<path d="M315.6 328.5V337.5M315.6 350.5V358.5" stroke="#8a8a8a" stroke-width="0.8" fill="none"/>
<path d="M305.6 337.5 Q309.6 343.5 305.6 349.5 M325.6 337.5 Q321.6 343.5 325.6 349.5" stroke="#a4a4a4" stroke-width="1.6" fill="none"/>
<ellipse cx="52.0" cy="385.0" rx="17.2" ry="19.7" fill="#bdbdbd"/>
<ellipse cx="52.0" cy="385.0" rx="15.5" ry="18.0" fill="#181818"/>
<ellipse cx="52.0" cy="385.0" rx="14.0" ry="16.5" fill="url(#gbr)"/>
<ellipse cx="52.0" cy="385.0" rx="12.0" ry="14.3" fill="none" stroke="#a2a2a2" stroke-width="1.5" stroke-dasharray="2.6 2.2"/>
<path d="M49.8 379 L52.0 384 L54.2 379 M49.4 392 L52.0 387 L54.6 392" stroke="#5a5a5a" stroke-width="1.1" fill="none"/>
<path d="M52.0 370V379M52.0 392V400" stroke="#8a8a8a" stroke-width="0.8" fill="none"/>
<path d="M42.0 379 Q46.0 385 42.0 391 M62.0 379 Q58.0 385 62.0 391" stroke="#a4a4a4" stroke-width="1.6" fill="none"/>
<ellipse cx="89.7" cy="385.0" rx="17.2" ry="19.7" fill="#bdbdbd"/>
<ellipse cx="89.7" cy="385.0" rx="15.5" ry="18.0" fill="#181818"/>
<ellipse cx="89.7" cy="385.0" rx="14.0" ry="16.5" fill="url(#gbr)"/>
<ellipse cx="89.7" cy="385.0" rx="12.0" ry="14.3" fill="none" stroke="#a2a2a2" stroke-width="1.5" stroke-dasharray="2.6 2.2"/>
<path d="M87.5 379 L89.7 384 L91.9 379 M87.1 392 L89.7 387 L92.2 392" stroke="#5a5a5a" stroke-width="1.1" fill="none"/>
<path d="M89.7 370V379M89.7 392V400" stroke="#8a8a8a" stroke-width="0.8" fill="none"/>
<path d="M79.7 379 Q83.7 385 79.7 391 M99.7 379 Q95.7 385 99.7 391" stroke="#a4a4a4" stroke-width="1.6" fill="none"/>
<ellipse cx="127.3" cy="385.0" rx="17.2" ry="19.7" fill="#bdbdbd"/>
<ellipse cx="127.3" cy="385.0" rx="15.5" ry="18.0" fill="#181818"/>
<ellipse cx="127.3" cy="385.0" rx="14.0" ry="16.5" fill="url(#gbr)"/>
<ellipse cx="127.3" cy="385.0" rx="12.0" ry="14.3" fill="none" stroke="#a2a2a2" stroke-width="1.5" stroke-dasharray="2.6 2.2"/>
<path d="M125.1 379 L127.3 384 L129.5 379 M124.7 392 L127.3 387 L129.9 392" stroke="#5a5a5a" stroke-width="1.1" fill="none"/>
<path d="M127.3 370V379M127.3 392V400" stroke="#8a8a8a" stroke-width="0.8" fill="none"/>
<path d="M117.3 379 Q121.3 385 117.3 391 M137.3 379 Q133.3 385 137.3 391" stroke="#a4a4a4" stroke-width="1.6" fill="none"/>
<ellipse cx="164.9" cy="385.0" rx="17.2" ry="19.7" fill="#bdbdbd"/>
<ellipse cx="164.9" cy="385.0" rx="15.5" ry="18.0" fill="#181818"/>
<ellipse cx="164.9" cy="385.0" rx="14.0" ry="16.5" fill="url(#gbr)"/>
<ellipse cx="164.9" cy="385.0" rx="12.0" ry="14.3" fill="none" stroke="#a2a2a2" stroke-width="1.5" stroke-dasharray="2.6 2.2"/>
<path d="M162.8 379 L164.9 384 L167.1 379 M162.3 392 L164.9 387 L167.5 392" stroke="#5a5a5a" stroke-width="1.1" fill="none"/>
<path d="M164.9 370V379M164.9 392V400" stroke="#8a8a8a" stroke-width="0.8" fill="none"/>
<path d="M154.9 379 Q158.9 385 154.9 391 M174.9 379 Q170.9 385 174.9 391" stroke="#a4a4a4" stroke-width="1.6" fill="none"/>
<ellipse cx="202.6" cy="385.0" rx="17.2" ry="19.7" fill="#bdbdbd"/>
<ellipse cx="202.6" cy="385.0" rx="15.5" ry="18.0" fill="#181818"/>
<ellipse cx="202.6" cy="385.0" rx="14.0" ry="16.5" fill="url(#gbr)"/>
<ellipse cx="202.6" cy="385.0" rx="12.0" ry="14.3" fill="none" stroke="#a2a2a2" stroke-width="1.5" stroke-dasharray="2.6 2.2"/>
<path d="M200.4 379 L202.6 384 L204.8 379 M200.0 392 L202.6 387 L205.2 392" stroke="#5a5a5a" stroke-width="1.1" fill="none"/>
<path d="M202.6 370V379M202.6 392V400" stroke="#8a8a8a" stroke-width="0.8" fill="none"/>
<path d="M192.6 379 Q196.6 385 192.6 391 M212.6 379 Q208.6 385 212.6 391" stroke="#a4a4a4" stroke-width="1.6" fill="none"/>
<ellipse cx="240.2" cy="385.0" rx="17.2" ry="19.7" fill="#bdbdbd"/>
<ellipse cx="240.2" cy="385.0" rx="15.5" ry="18.0" fill="#181818"/>
<ellipse cx="240.2" cy="385.0" rx="14.0" ry="16.5" fill="url(#gbr)"/>
<ellipse cx="240.2" cy="385.0" rx="12.0" ry="14.3" fill="none" stroke="#a2a2a2" stroke-width="1.5" stroke-dasharray="2.6 2.2"/>
<path d="M238.1 379 L240.2 384 L242.4 379 M237.7 392 L240.2 387 L242.8 392" stroke="#5a5a5a" stroke-width="1.1" fill="none"/>
<path d="M240.2 370V379M240.2 392V400" stroke="#8a8a8a" stroke-width="0.8" fill="none"/>
<path d="M230.2 379 Q234.2 385 230.2 391 M250.2 379 Q246.2 385 250.2 391" stroke="#a4a4a4" stroke-width="1.6" fill="none"/>
<ellipse cx="277.9" cy="385.0" rx="17.2" ry="19.7" fill="#bdbdbd"/>
<ellipse cx="277.9" cy="385.0" rx="15.5" ry="18.0" fill="#181818"/>
<ellipse cx="277.9" cy="385.0" rx="14.0" ry="16.5" fill="url(#gbr)"/>
<ellipse cx="277.9" cy="385.0" rx="12.0" ry="14.3" fill="none" stroke="#a2a2a2" stroke-width="1.5" stroke-dasharray="2.6 2.2"/>
<path d="M275.7 379 L277.9 384 L280.1 379 M275.3 392 L277.9 387 L280.5 392" stroke="#5a5a5a" stroke-width="1.1" fill="none"/>
<path d="M277.9 370V379M277.9 392V400" stroke="#8a8a8a" stroke-width="0.8" fill="none"/>
<path d="M267.9 379 Q271.9 385 267.9 391 M287.9 379 Q283.9 385 287.9 391" stroke="#a4a4a4" stroke-width="1.6" fill="none"/>
<ellipse cx="315.6" cy="385.0" rx="17.2" ry="19.7" fill="#bdbdbd"/>
<ellipse cx="315.6" cy="385.0" rx="15.5" ry="18.0" fill="#181818"/>
<ellipse cx="315.6" cy="385.0" rx="14.0" ry="16.5" fill="url(#gbr)"/>
<ellipse cx="315.6" cy="385.0" rx="12.0" ry="14.3" fill="none" stroke="#a2a2a2" stroke-width="1.5" stroke-dasharray="2.6 2.2"/>
<path d="M313.4 379 L315.6 384 L317.8 379 M312.9 392 L315.6 387 L318.2 392" stroke="#5a5a5a" stroke-width="1.1" fill="none"/>
<path d="M315.6 370V379M315.6 392V400" stroke="#8a8a8a" stroke-width="0.8" fill="none"/>
<path d="M305.6 379 Q309.6 385 305.6 391 M325.6 379 Q321.6 385 325.6 391" stroke="#a4a4a4" stroke-width="1.6" fill="none"/>
<ellipse cx="52.0" cy="426.3" rx="17" ry="17.9" fill="#bababa"/>
<ellipse cx="52.0" cy="426.3" rx="15.1" ry="15.999999999999998" fill="#181818"/>
<ellipse cx="52.0" cy="426.3" rx="13.5" ry="14.399999999999999" fill="url(#gbr)"/>
<ellipse cx="52.0" cy="426.3" rx="11.6" ry="12.5" fill="none" stroke="#a6a6a6" stroke-width="1.4" stroke-dasharray="2.4 2.2"/>
<path d="M52.0 412.40000000000003V440.2" stroke="#6a6a6a" stroke-width="0.9"/>
<ellipse cx="89.7" cy="426.3" rx="16.4" ry="17.1" fill="#bababa"/>
<ellipse cx="89.7" cy="426.3" rx="14.499999999999998" ry="15.200000000000001" fill="#181818"/>
<ellipse cx="89.7" cy="426.3" rx="12.899999999999999" ry="13.600000000000001" fill="url(#gbr)"/>
<ellipse cx="89.7" cy="426.3" rx="11.0" ry="11.7" fill="none" stroke="#a6a6a6" stroke-width="1.4" stroke-dasharray="2.4 2.2"/>
<path d="M89.7 413.2V439.40000000000003" stroke="#6a6a6a" stroke-width="0.9"/>
<ellipse cx="127.3" cy="426.3" rx="16" ry="16.4" fill="#bababa"/>
<ellipse cx="127.3" cy="426.3" rx="14.1" ry="14.499999999999998" fill="#181818"/>
<ellipse cx="127.3" cy="426.3" rx="12.5" ry="12.899999999999999" fill="url(#gbr)"/>
<ellipse cx="127.3" cy="426.3" rx="10.6" ry="11.0" fill="none" stroke="#a6a6a6" stroke-width="1.4" stroke-dasharray="2.4 2.2"/>
<path d="M127.3 413.90000000000003V438.7" stroke="#6a6a6a" stroke-width="0.9"/>
<ellipse cx="164.9" cy="426.3" rx="15.5" ry="15.5" fill="#bababa"/>
<ellipse cx="164.9" cy="426.3" rx="13.6" ry="13.6" fill="#181818"/>
<ellipse cx="164.9" cy="426.3" rx="12.0" ry="12.0" fill="url(#gbr)"/>
<ellipse cx="164.9" cy="426.3" rx="10.1" ry="10.1" fill="none" stroke="#a6a6a6" stroke-width="1.4" stroke-dasharray="2.4 2.2"/>
<path d="M164.9 414.8V437.8" stroke="#6a6a6a" stroke-width="0.9"/>
<ellipse cx="202.6" cy="425.5" rx="14.4" ry="15" fill="#bababa"/>
<ellipse cx="202.6" cy="425.5" rx="12.5" ry="13.1" fill="#181818"/>
<ellipse cx="202.6" cy="425.5" rx="10.9" ry="11.5" fill="url(#gbr)"/>
<ellipse cx="202.6" cy="425.5" rx="9.0" ry="9.6" fill="none" stroke="#a6a6a6" stroke-width="1.4" stroke-dasharray="2.4 2.2"/>
<path d="M202.6 414.5V436.5" stroke="#6a6a6a" stroke-width="0.9"/>
<ellipse cx="240.2" cy="426.5" rx="13.4" ry="13.7" fill="#bababa"/>
<ellipse cx="240.2" cy="426.5" rx="11.5" ry="11.799999999999999" fill="#181818"/>
<ellipse cx="240.2" cy="426.5" rx="9.9" ry="10.2" fill="url(#gbr)"/>
<ellipse cx="240.2" cy="426.5" rx="8.0" ry="8.3" fill="none" stroke="#a6a6a6" stroke-width="1.4" stroke-dasharray="2.4 2.2"/>
<path d="M240.2 416.8V436.2" stroke="#6a6a6a" stroke-width="0.9"/>
<ellipse cx="277.9" cy="427.0" rx="12.5" ry="13" fill="#bababa"/>
<ellipse cx="277.9" cy="427.0" rx="10.6" ry="11.1" fill="#181818"/>
<ellipse cx="277.9" cy="427.0" rx="9.0" ry="9.5" fill="url(#gbr)"/>
<ellipse cx="277.9" cy="427.0" rx="7.1" ry="7.6" fill="none" stroke="#a6a6a6" stroke-width="1.4" stroke-dasharray="2.4 2.2"/>
<path d="M277.9 418V436" stroke="#6a6a6a" stroke-width="0.9"/>
<ellipse cx="315.6" cy="428.0" rx="11.6" ry="11.5" fill="#bababa"/>
<ellipse cx="315.6" cy="428.0" rx="9.7" ry="9.6" fill="#181818"/>
<ellipse cx="315.6" cy="428.0" rx="8.1" ry="8.0" fill="url(#gbr)"/>
</g>
<g filter="url(#f1)">
<ellipse cx="52.4" cy="469.5" rx="9.8" ry="10.2" fill="#6c6c6c" stroke="#ececec" stroke-width="2.6"/><path d="M52.4 464.5V473.5" stroke="#a0a0a0" stroke-width="1.2"/>
<ellipse cx="90.2" cy="469.8" rx="7.8" ry="7.3" fill="#505050" stroke="#e8e8e8" stroke-width="3.2"/>
<ellipse cx="127.4" cy="470.0" rx="6.8" ry="6.8" fill="#e4e4e4"/><ellipse cx="127.4" cy="470.0" rx="2" ry="2.2" fill="#b4b4b4"/>
<ellipse cx="165.2" cy="471.0" rx="5.400" ry="5.400" fill="#e0e0e0"/>
</g>
<g filter="url(#f03)">
<ellipse cx="159.9" cy="311.5" rx="2.5" ry="1.5" fill="#ee1400"/>
<ellipse cx="170.9" cy="311.5" rx="1" ry="1" fill="#ee1400"/>
<ellipse cx="197.6" cy="310.5" rx="4" ry="3.5" fill="#f01800"/>
<ellipse cx="197.6" cy="310.5" rx="3.1" ry="2.7" fill="url(#hot)"/>
<ellipse cx="208.6" cy="310.5" rx="3" ry="2.5" fill="#f01800"/>
<ellipse cx="208.6" cy="310.5" rx="2.3" ry="2.0" fill="url(#hot)"/>
<ellipse cx="234.2" cy="310.5" rx="4" ry="3.6" fill="#f01800"/>
<ellipse cx="234.2" cy="310.5" rx="3.1" ry="2.8" fill="url(#hot)"/>
<ellipse cx="245.2" cy="310.5" rx="3" ry="2.6" fill="#f01800"/>
<ellipse cx="245.2" cy="310.5" rx="2.3" ry="2.0" fill="url(#hot)"/>
<ellipse cx="272.4" cy="310.5" rx="3.6" ry="3.2" fill="#f01800"/>
<ellipse cx="272.4" cy="310.5" rx="2.8" ry="2.5" fill="url(#hot)"/>
<ellipse cx="282.9" cy="310.5" rx="3" ry="2.6" fill="#f01800"/>
<ellipse cx="282.9" cy="310.5" rx="2.3" ry="2.0" fill="url(#hot)"/>
<ellipse cx="284.9" cy="298.5" rx="2.5" ry="1.5" fill="#ee1400"/>
<ellipse cx="270.9" cy="297.5" rx="1.2" ry="0.8" fill="#ee1400"/>
<ellipse cx="309.6" cy="311.5" rx="3" ry="1.2" fill="#ee1400"/>
<ellipse cx="320.6" cy="311.5" rx="3" ry="1.2" fill="#ee1400"/>
<ellipse cx="322.6" cy="297.5" rx="3" ry="1.5" fill="#ee1400"/>
<ellipse cx="308.6" cy="296.5" rx="2" ry="0.9" fill="#ee1400"/>
<ellipse cx="45.0" cy="338.5" rx="2" ry="1.2" fill="#ee1400"/>
<ellipse cx="58.0" cy="338.5" rx="3" ry="1.3" fill="#ee1400"/>
<ellipse cx="47.0" cy="352.5" rx="3" ry="2" fill="#f01800"/>
<ellipse cx="85.7" cy="343.5" rx="2" ry="1.3" fill="#ee1400"/>
<ellipse cx="93.7" cy="342.5" rx="2" ry="1.3" fill="#ee1400"/>
<ellipse cx="84.7" cy="351.5" rx="2.2" ry="1.6" fill="#ee1400"/>
<ellipse cx="96.7" cy="339.5" rx="1" ry="1" fill="#ee1400"/>
<ellipse cx="123.3" cy="345.5" rx="1" ry="1" fill="#ee1400"/>
<ellipse cx="129.3" cy="343.5" rx="2" ry="1.4" fill="#ee1400"/>
<ellipse cx="134.3" cy="339.5" rx="1" ry="1" fill="#ee1400"/>
<ellipse cx="170.9" cy="340.5" rx="2" ry="1.3" fill="#ee1400"/>
<ellipse cx="160.9" cy="345.5" rx="1" ry="1" fill="#ee1400"/>
<ellipse cx="156.9" cy="338.5" rx="1" ry="0.8" fill="#ee1400"/>
<ellipse cx="193.6" cy="338.5" rx="1" ry="1" fill="#ee1400"/>
<ellipse cx="208.6" cy="340.5" rx="1.2" ry="1" fill="#ee1400"/>
<ellipse cx="231.2" cy="337.5" rx="1" ry="1.2" fill="#ee1400"/>
<ellipse cx="247.2" cy="354.5" rx="1.5" ry="0.8" fill="#ee1400"/>
<ellipse cx="246.2" cy="341.5" rx="0.8" ry="0.8" fill="#ee1400"/>
<ellipse cx="267.9" cy="338.5" rx="0.8" ry="1.2" fill="#ee1400"/>
<ellipse cx="284.9" cy="354.5" rx="2" ry="1" fill="#ee1400"/>
<ellipse cx="315.6" cy="331.5" rx="2.4" ry="1.2" fill="#ee1400"/>
<ellipse cx="52.0" cy="372.5" rx="2.6" ry="1.8" fill="#f01800"/>
<ellipse cx="52.0" cy="372.5" rx="2.0" ry="1.4" fill="url(#hot)"/>
<ellipse cx="89.7" cy="372.5" rx="2.6" ry="1.8" fill="#f01800"/>
<ellipse cx="89.7" cy="372.5" rx="2.0" ry="1.4" fill="url(#hot)"/>
<ellipse cx="127.3" cy="372.5" rx="2.6" ry="1.8" fill="#f01800"/>
<ellipse cx="127.3" cy="372.5" rx="2.0" ry="1.4" fill="url(#hot)"/>
<ellipse cx="165.9" cy="372.5" rx="2.6" ry="1.8" fill="#f01800"/>
<ellipse cx="165.9" cy="372.5" rx="2.0" ry="1.4" fill="url(#hot)"/>
<ellipse cx="203.6" cy="372.5" rx="2.6" ry="1.8" fill="#f01800"/>
<ellipse cx="203.6" cy="372.5" rx="2.0" ry="1.4" fill="url(#hot)"/>
<ellipse cx="42.0" cy="389.0" rx="1.2" ry="1" fill="#ee1400"/>
<ellipse cx="79.7" cy="389.0" rx="1.2" ry="1" fill="#ee1400"/>
<ellipse cx="174.9" cy="383.0" rx="2" ry="1.5" fill="#ee1400"/>
<ellipse cx="154.9" cy="386.0" rx="1" ry="1" fill="#ee1400"/>
<ellipse cx="192.6" cy="386.0" rx="1" ry="0.8" fill="#ee1400"/>
<ellipse cx="211.6" cy="383.0" rx="1" ry="0.8" fill="#ee1400"/>
<ellipse cx="240.2" cy="376.0" rx="1.8" ry="1.8" fill="#ee1400"/>
<ellipse cx="231.2" cy="388.0" rx="0.8" ry="0.8" fill="#ee1400"/>
<ellipse cx="316.6" cy="385.0" rx="0.8" ry="2" fill="#ee1400"/>
<ellipse cx="52.0" cy="424.3" rx="0.9" ry="2" fill="#ee1400"/>
<ellipse cx="86.7" cy="415.3" rx="0.8" ry="1" fill="#ee1400"/>
<ellipse cx="93.7" cy="415.3" rx="1.2" ry="0.8" fill="#ee1400"/>
<ellipse cx="124.3" cy="415.3" rx="1.5" ry="1" fill="#ee1400"/>
<ellipse cx="131.3" cy="415.3" rx="1.5" ry="1" fill="#ee1400"/>
<ellipse cx="134.3" cy="435.3" rx="0.7" ry="0.7" fill="#ee1400"/>
<ellipse cx="162.9" cy="415.8" rx="1" ry="0.7" fill="#ee1400"/>
<ellipse cx="167.9" cy="415.8" rx="1" ry="0.7" fill="#ee1400"/>
<ellipse cx="206.6" cy="418.3" rx="0.8" ry="0.8" fill="#ee1400"/>
<ellipse cx="241.2" cy="432.3" rx="1" ry="1" fill="#ee1400"/>
<ellipse cx="279.9" cy="432.3" rx="1" ry="1.2" fill="#ee1400"/>
</g>
<g font-family="'Liberation Sans',sans-serif" font-size="8" fill="#b4b4b4">
<text x="37.7" y="295" textLength="24.5" lengthAdjust="spacingAndGlyphs">L----R</text><text x="37.7" y="310" textLength="24.5" lengthAdjust="spacingAndGlyphs">B---&gt;T</text>
</g>
<rect x="232" y="462" width="98" height="13.3" fill="url(#cbar)"/>
<g font-family="'Liberation Sans',sans-serif" font-size="7" fill="#e8e8e8"><text x="233.500" y="484.5">2</text><text x="268.500" y="484.5">3</text><text x="303.500" y="484.5">4</text></g>
</g>
</svg>
</body></html>
